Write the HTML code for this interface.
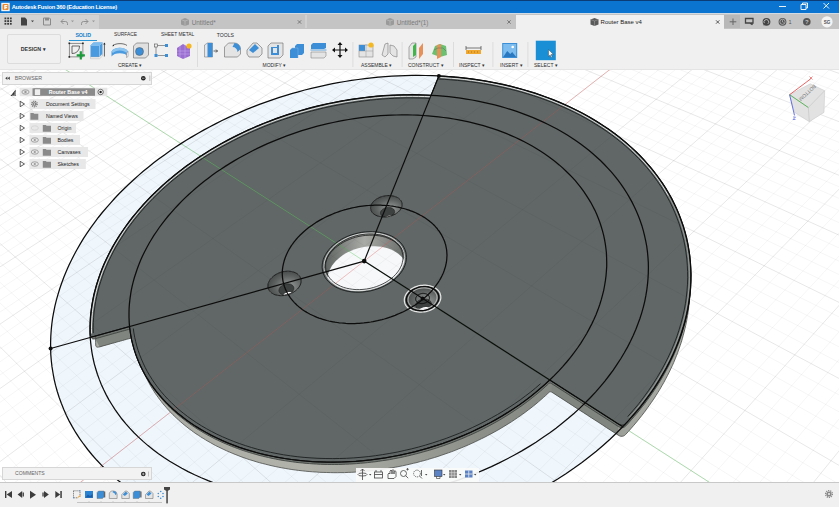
<!DOCTYPE html>
<html><head><meta charset="utf-8">
<style>
*{margin:0;padding:0;box-sizing:border-box}
html,body{width:839px;height:507px;overflow:hidden;background:#f0f0f0;font-family:"Liberation Sans",sans-serif}
.a{position:absolute}
#title{left:0;top:0;width:839px;height:13px;background:#0a74d0;border-top:1.5px solid #0b3c78}
#title span{position:absolute;left:11.7px;top:3.2px;font-size:5.8px;color:#fff;font-weight:bold;letter-spacing:-0.25px}
#tabs{left:0;top:13px;width:839px;height:16px;background:#c4c4c4;border-top:1.5px solid #d2dbe4}
.lbl{font-size:5px;color:#2e2e2e;white-space:nowrap}
.tb{font-size:5.8px;color:#333;white-space:nowrap}
svg{position:absolute;left:0;top:0}
</style></head><body>
<div id="title" class="a"><svg width="10" height="10" style="left:1px;top:1px"><rect x="0.3" y="0.8" width="8.4" height="8.4" fill="#f4f4f4"/><rect x="1.5" y="2" width="6" height="6" rx="1" fill="#e8882e"/><path d="M3.3 3h3v1.2H4.5v0.9h1.6v1.1H4.5V7.2H3.3z" fill="#fff"/></svg><span>Autodesk Fusion 360 (Education License)</span>
</div>
<div id="tabs" class="a"></div>
<div class="a" style="left:0;top:14.5px;width:99px;height:14px;background:#d2d2d2"></div>
<!-- title buttons -->
<svg width="60" height="13" style="left:775px;top:0"><path d="M4 6.5h7" stroke="#fff" stroke-width="0.9"/><path d="M26 4.5h5v5h-5z M27.5 4.5v-1.5h5v5h-1.5" fill="none" stroke="#fff" stroke-width="0.9"/><path d="M48.5 3l5.5 5.5M54 3l-5.5 5.5" stroke="#fff" stroke-width="0.9"/></svg>
<!-- quick access -->
<svg width="99" height="14" style="left:0;top:14.5px">
<g fill="#3a3a3a"><rect x="4.5" y="2.5" width="1.8" height="1.8"/><rect x="7.2" y="2.5" width="1.8" height="1.8"/><rect x="9.9" y="2.5" width="1.8" height="1.8"/><rect x="4.5" y="5.2" width="1.8" height="1.8"/><rect x="7.2" y="5.2" width="1.8" height="1.8"/><rect x="9.9" y="5.2" width="1.8" height="1.8"/><rect x="4.5" y="7.9" width="1.8" height="1.8"/><rect x="7.2" y="7.9" width="1.8" height="1.8"/><rect x="9.9" y="7.9" width="1.8" height="1.8"/></g>
<path d="M21 2.5h4l2 2v6h-6z" fill="#444"/><path d="M31 5.5h3l-1.5 1.8z" fill="#444"/>
<path d="M43.5 3h6l1 1v6h-7z" fill="none" stroke="#8a8a8a" stroke-width="1"/><rect x="45" y="3" width="4" height="2.5" fill="#8a8a8a"/>
<path d="M61 6.5l2.5-2.5M61 6.5l2.5 2.5M61 6.5h4.5a2 2 0 0 1 2 2v1.5" fill="none" stroke="#8a8a8a" stroke-width="0.9"/><path d="M71 5.5h3l-1.5 1.8z" fill="#999"/>
<path d="M88 6.5l-2.5-2.5M88 6.5l-2.5 2.5M88 6.5h-4.5a2 2 0 0 0-2 2v1.5" fill="none" stroke="#8a8a8a" stroke-width="0.9"/><path d="M92 5.5h3l-1.5 1.8z" fill="#999"/>
</svg>
<!-- tabs -->
<div class="a" style="left:305px;top:14.8px;width:2px;height:13.7px;background:#d0d0d0"></div>
<div class="a" style="left:516px;top:14.8px;width:207.5px;height:14.2px;background:#f0f0f0"></div>
<div class="a" style="left:723.5px;top:14.8px;width:16.5px;height:13.7px;background:#b8b8b8"></div>
<svg width="839" height="16" style="left:0;top:14px">
<g transform="translate(181,3.5)"><path d="M0 2l4-1.5 4 1.5v5l-4 1.6-4-1.6z" fill="#9a9a9a"/><path d="M0 2l4 1.5 4-1.5M4 3.5v5" stroke="#c4c4c4" stroke-width="0.6" fill="none"/></g>
<g transform="translate(386,3.5)"><path d="M0 2l4-1.5 4 1.5v5l-4 1.6-4-1.6z" fill="#9a9a9a"/><path d="M0 2l4 1.5 4-1.5M4 3.5v5" stroke="#c4c4c4" stroke-width="0.6" fill="none"/></g>
<g transform="translate(590.5,3.5)"><path d="M0 2l4-1.5 4 1.5v5l-4 1.6-4-1.6z" fill="#5a5a5a"/><path d="M0 2l4 1.5 4-1.5M4 3.5v5" stroke="#9a9a9a" stroke-width="0.6" fill="none"/></g>
<path d="M297.8 6.3l3.4 3.4M301.2 6.3l-3.4 3.4" stroke="#666" stroke-width="0.8"/>
<path d="M507.3 6.3l3.4 3.4M510.7 6.3l-3.4 3.4" stroke="#666" stroke-width="0.8"/>
<path d="M716 6.3l3.4 3.4M719.4 6.3l-3.4 3.4" stroke="#333" stroke-width="0.8"/>
<path d="M733 4.5v6.5M729.7 7.8h6.6" stroke="#666" stroke-width="1"/>
<path d="M745.5 4.5h7.5v4.5h-1.6l1 1.6-2.6-1.6h-4.3z" fill="none" stroke="#444" stroke-width="1.3"/>
<circle cx="766.5" cy="7.8" r="3.9" fill="#444"/><path d="M764.3 9.2a2.4 2.4 0 1 1 3.6 0.6" fill="none" stroke="#c4c4c4" stroke-width="0.9"/><path d="M763.2 11.6l2.2-3 1.4 1.6z" fill="#444"/>
<circle cx="782.5" cy="7.8" r="3.9" fill="#555"/><circle cx="782.5" cy="7.8" r="2.6" fill="none" stroke="#c4c4c4" stroke-width="0.7"/><path d="M782.5 6.2v1.8l1.1 0.8" fill="none" stroke="#c4c4c4" stroke-width="0.7"/>
<circle cx="806.8" cy="7.8" r="3.8" fill="#555"/><text x="806.8" y="10.2" font-size="6" font-weight="bold" fill="#c4c4c4" text-anchor="middle" font-family="Liberation Sans">?</text>
<circle cx="827" cy="7.8" r="5.6" fill="#f4f4f4"/><text x="827" y="9.7" font-size="4.6" fill="#555" text-anchor="middle" font-family="Liberation Sans" font-weight="bold">SG</text>
<text x="788.5" y="10" font-size="5.5" fill="#555" font-family="Liberation Sans">1</text>
</svg>
<div class="a" style="left:191.7px;top:19px;font-size:6.35px;color:#7a7a7a">Untitled*</div>
<div class="a" style="left:396.7px;top:19px;font-size:6.35px;color:#7a7a7a">Untitled*(1)</div>
<div class="a" style="left:600.6px;top:19.2px;font-size:6px;color:#222">Router Base v4</div>
<!-- toolbar -->
<div class="a" style="left:6.5px;top:34px;width:54px;height:30px;border:1px solid #dcdcdc;border-radius:2px;background:#f0f0f0"></div>
<div class="a" style="left:20.8px;top:46.3px;font-size:5.3px;font-weight:bold;color:#333">DESIGN ▾</div>
<div class="a lbl" style="left:75.5px;top:31.8px;color:#1480c8;font-size:5.33px;font-weight:bold;letter-spacing:-0.2px">SOLID</div>
<div class="a" style="left:69px;top:39.8px;width:28px;height:1px;background:#2a96d8"></div>
<div class="a lbl" style="left:114px;top:31.8px;font-size:4.9px">SURFACE</div>
<div class="a lbl" style="left:161px;top:31.8px;font-size:4.85px">SHEET METAL</div>
<div class="a lbl" style="left:216.7px;top:31.8px;font-size:5.1px">TOOLS</div>
<div class="a lbl" style="left:118px;top:62px">CREATE ▾</div>
<div class="a lbl" style="left:262.5px;top:62px">MODIFY ▾</div>
<div class="a lbl" style="left:361px;top:62px">ASSEMBLE ▾</div>
<div class="a lbl" style="left:408px;top:62px">CONSTRUCT ▾</div>
<div class="a lbl" style="left:459px;top:62px">INSPECT ▾</div>
<div class="a lbl" style="left:500px;top:62px">INSERT ▾</div>
<div class="a lbl" style="left:534px;top:62px">SELECT ▾</div>
<svg width="839" height="40" style="left:0;top:29px">
<g fill="#d8d8d8"><rect x="197" y="13" width="0.8" height="25"/><rect x="352.5" y="13" width="0.8" height="25"/><rect x="401.7" y="13" width="0.8" height="25"/><rect x="453" y="13" width="0.8" height="25"/><rect x="492.5" y="13" width="0.8" height="25"/><rect x="527.5" y="13" width="0.8" height="25"/></g>
<!-- sketch -->
<g transform="translate(69,14)"><rect x="0.3" y="0.3" width="13.6" height="13.6" fill="none" stroke="#666" stroke-width="0.7"/><g fill="#222"><rect x="-0.5" y="-0.5" width="1.6" height="1.6"/><rect x="13.1" y="-0.5" width="1.6" height="1.6"/><rect x="-0.5" y="13.1" width="1.6" height="1.6"/></g><path d="M3 3h7.5a7 7 0 0 1-7.5 7.5z" fill="none" stroke="#444" stroke-width="0.8"/><path d="M11.8 8.3v8.2M7.7 12.4h8.2" stroke="#1a9b3c" stroke-width="2.2"/></g>
<!-- extrude -->
<g transform="translate(90,13)"><path d="M0.5 3.5l3-3h9v11.5l-3 3H0.5z" fill="#4a9ae0"/><path d="M0.5 3.5h9v11.5M9.5 3.5l3-3" fill="none" stroke="#a8d0f2" stroke-width="0.7"/><path d="M0.5 3.5l3-3h9l-3 3z" fill="#7cbcee"/><path d="M0.5 15h9l3-3v2l-3 2.7H0.5z" fill="#f4f4f4" stroke="#aaa" stroke-width="0.4"/><path d="M14.4 1.5v13" stroke="#222" stroke-width="0.7"/><path d="M14.4 0.5l-1.2 2h2.4z" fill="#222"/></g>
<!-- revolve -->
<g transform="translate(111,13)"><path d="M0.5 9.5C3 4.5 14.5 4.5 17 9.5v5C14.5 10 3 10 0.5 14.5z" fill="#4a9ae0"/><path d="M0.5 9.5C3 4.5 14.5 4.5 17 9.5l-1.5 1.5C13 7.5 4.5 7.5 2 11z" fill="#8cc4f0"/><path d="M15.5 11l1.5-1.5v5l-1.5 1z" fill="#fff" stroke="#555" stroke-width="0.4"/><path d="M2 3.5c3-2.5 11-2.5 14 0" fill="none" stroke="#333" stroke-width="0.7"/><path d="M1.2 4.2l2-0.2-0.8-1.6z" fill="#222"/></g>
<!-- hole -->
<g transform="translate(132.5,13)"><path d="M1 4l3-3h12v12l-3 3H1z" fill="#e0e0e0" stroke="#666" stroke-width="0.6"/><circle cx="7" cy="9.5" r="4" fill="#3c8fd6" stroke="#555" stroke-width="0.5"/></g>
<!-- pattern -->
<g transform="translate(154,13)"><rect x="0.5" y="2" width="3" height="3" fill="none" stroke="#555" stroke-width="0.6"/><rect x="11" y="2" width="3" height="3" fill="#3c8fd6"/><rect x="0.5" y="12" width="3" height="3" fill="#3c8fd6"/><rect x="11" y="12" width="3" height="3" fill="#3c8fd6"/><path d="M3.5 3.5h7.5M2 5v7M3.5 13.5h7.5" stroke="#555" stroke-width="0.6"/></g>
<!-- form -->
<g transform="translate(176,13)"><path d="M1 6l6-4 7 4v8l-7 3-6-3z" fill="#9a6ed0"/><path d="M4 4v11M9 3v13M1 9h13M1 12h13" stroke="#c9aef0" stroke-width="0.5"/><circle cx="13" cy="4" r="2.6" fill="#f5b820"/></g>
<!-- press pull -->
<g transform="translate(202.5,13)"><path d="M2 3l3-2h5v14H2z" fill="#e6e6e6" stroke="#666" stroke-width="0.5"/><path d="M5 1h5v14H5z" fill="#3c8fd6"/><path d="M11 9h4M13.5 7.5l1.5 1.5-1.5 1.5" stroke="#222" stroke-width="0.7" fill="none"/></g>
<!-- fillet -->
<g transform="translate(223.5,13)"><path d="M1 5l4-4h6a6 6 0 0 1 6 6v5l-3 3H1z" fill="#e4e4e4" stroke="#666" stroke-width="0.6"/><path d="M11 1a6 6 0 0 1 6 6l-3 3a5 5 0 0 0-5-5z" fill="#3c8fd6"/></g>
<!-- chamfer -->
<g transform="translate(246,13)"><path d="M1 8l6-7h4l5 5v6l-3 3H3l-2-3z" fill="#e4e4e4" stroke="#666" stroke-width="0.6"/><path d="M3 8l6-6 4 4-6 5z" fill="#3c8fd6"/></g>
<!-- shell -->
<g transform="translate(267,13)"><path d="M1 4l3-3h12v12l-3 3H1z" fill="#e4e4e4" stroke="#666" stroke-width="0.6"/><path d="M4 5h6v-2h2v10H4z" fill="#3c8fd6"/><rect x="6" y="6" width="4" height="5" fill="#e4e4e4"/></g>
<!-- combine -->
<g transform="translate(289,13)"><path d="M1 8l2-2h6v10H1z" fill="#3c8fd6"/><path d="M6 4l2-2h7v9l-2 2H6z" fill="#3c8fd6"/><path d="M3 6h6v10" stroke="#7cb6ea" stroke-width="0.5" fill="none"/></g>
<!-- split -->
<g transform="translate(310,13)"><path d="M1 3l2-2h13v5l-2 1H1z" fill="#3c8fd6"/><path d="M0.5 8h16" stroke="#3c8fd6" stroke-width="0.8"/><path d="M1 10h15v4l-2 2H1z" fill="#e4e4e4" stroke="#777" stroke-width="0.5"/></g>
<!-- move -->
<g transform="translate(332,13)"><path d="M8 1v14M1 8h14" stroke="#111" stroke-width="1.2"/><path d="M8 0l-2.5 3h5zM8 16l-2.5-3h5zM0 8l3-2.5v5zM16 8l-3-2.5v5z" fill="#111"/></g>
<!-- assemble new comp -->
<g transform="translate(358,13)"><rect x="1" y="3" width="14" height="12" fill="#e4e4e4" stroke="#777" stroke-width="0.5"/><path d="M1 3h6v6H1z" fill="#3c8fd6"/><path d="M8 2v13M1 9h14" stroke="#999" stroke-width="0.5"/><circle cx="13" cy="3" r="2.6" fill="#f5b820"/></g>
<!-- joint -->
<g transform="translate(381,13)"><path d="M1 13l3-11 3-1v11l-3 3z" fill="#e4e4e4" stroke="#777" stroke-width="0.6"/><path d="M9 3l4 1 3 4v7l-4-1-3-3z" fill="#e4e4e4" stroke="#777" stroke-width="0.6"/></g>
<!-- construct plane -->
<g transform="translate(408,13)"><path d="M1 5l3-4h4v14l-3 2H1z" fill="#e6e6e6" stroke="#777" stroke-width="0.6"/><path d="M5 15V4l3-3v12z" fill="#42b44a"/><path d="M11 17V6l4-5v11z" fill="#e8905a"/></g>
<!-- plane along path -->
<g transform="translate(431,13)"><path d="M1 12l3-8 5-2 6 2 1 9-7 2z" fill="#6cc070"/><path d="M6 3l4-1v13l-4 2z" fill="#e8905a"/><path d="M3 8l4-2 5 0 3 3" fill="none" stroke="#555" stroke-width="0.4"/></g>
<!-- measure -->
<g transform="translate(465,13)"><rect x="1" y="8" width="15" height="4" fill="#f0a830"/><path d="M1 6h15M1 4v4M16 4v4" stroke="#444" stroke-width="0.7"/><path d="M3 10h1M6 10h1M9 10h1M12 10h1" stroke="#7a5010" stroke-width="0.6"/></g>
<!-- insert -->
<g transform="translate(501.7,13)"><rect x="0.5" y="1" width="15" height="15" fill="#3a8fd6"/><rect x="1.5" y="2" width="13" height="13" fill="#7cbcee"/><path d="M1.5 15l4-6 3 3 2-2 4 5z" fill="#2a78c0"/><circle cx="11" cy="5" r="1.3" fill="#fff"/></g>
<!-- select -->
<rect x="535.8" y="11.7" width="20" height="19.5" fill="#1a8fd6"/><path d="M548.5 20.5v7l1.6-1.6 1.2 2.5 1-0.5-1.2-2.4h2.3z" fill="#fff" stroke="#333" stroke-width="0.4"/>
</svg>

<svg width="839" height="507" viewBox="0 0 839 507" style="top:0;left:0">
<defs><clipPath id="vp"><rect x="0" y="69.8" width="839" height="412.2"/></clipPath></defs>
<g clip-path="url(#vp)">
<rect x="0" y="69" width="839" height="413" fill="#ffffff"/>
<path d="M564.8 104.6 L559.1 102.1 L553.2 99.7 L547.3 97.5 L541.3 95.3 L535.2 93.2 L529.1 91.3 L522.9 89.5 L516.7 87.8 L510.5 86.2 L504.1 84.7 L497.8 83.3 L491.4 82.1 L484.9 80.9 L478.4 79.9 L471.9 78.9 L465.3 78.1 L458.8 77.4 L452.2 76.8 L445.5 76.3 L438.9 75.9 L432.2 75.6 L425.5 75.5 L418.8 75.4 L412.1 75.4 L405.4 75.6 L398.6 75.8 L391.9 76.2 L385.2 76.6 L378.4 77.2 L371.7 77.8 L364.9 78.6 L358.2 79.5 L351.5 80.4 L344.8 81.5 L338.1 82.7 L331.4 83.9 L324.7 85.3 L318.1 86.8 L311.4 88.3 L304.8 90.0 L298.2 91.8 L291.7 93.6 L285.2 95.6 L278.7 97.7 L272.2 99.8 L265.8 102.1 L259.4 104.4 L253.0 106.9 L246.7 109.4 L240.5 112.1 L234.3 114.8 L228.1 117.6 L222.0 120.5 L215.9 123.6 L209.9 126.7 L204.0 129.9 L198.1 133.2 L192.3 136.6 L186.6 140.0 L180.9 143.6 L175.3 147.3 L169.8 151.0 L164.4 154.9 L159.0 158.8 L153.7 162.8 L148.6 166.9 L143.5 171.1 L138.5 175.4 L133.6 179.7 L128.8 184.2 L124.1 188.7 L119.5 193.3 L115.0 198.0 L110.7 202.8 L106.5 207.6 L102.3 212.5 L98.3 217.5 L94.5 222.6 L90.8 227.7 L87.2 232.9 L83.7 238.2 L80.4 243.6 L77.3 249.0 L74.3 254.5 L71.5 260.0 L68.8 265.6 L66.3 271.2 L63.9 277.0 L61.8 282.7 L59.8 288.5 L58.0 294.4 L56.3 300.3 L54.9 306.2 L53.7 312.2 L52.6 318.2 L51.8 324.2 L51.2 330.2 L50.8 336.3 L50.6 342.4 L50.6 348.5 L50.8 354.6 L51.3 360.7 L52.0 366.9 L53.0 373.0 L54.1 379.1 L55.5 385.2 L57.2 391.2 L59.1 397.3 L61.3 403.3 L63.7 409.3 L66.3 415.2 L69.2 421.1 L72.4 426.9 L75.8 432.7 L79.5 438.4 L83.5 444.0 L87.7 449.5 L92.2 455.0 L96.9 460.3 L101.9 465.6 L107.2 470.7 L112.7 475.8 L118.5 480.7 L124.5 485.5 L130.8 490.1 L137.3 494.6 L144.1 499.0 L151.1 503.2 L158.4 507.2 L165.8 511.1 L173.6 514.8 L181.5 518.3 L189.6 521.6 L198.0 524.7 L206.6 527.6 L215.3 530.3 L224.2 532.9 L233.3 535.1 L242.6 537.2 L252.1 539.1 L261.6 540.7 L271.3 542.1 L281.2 543.2 L291.1 544.1 L301.2 544.8 L311.3 545.2 L321.6 545.4 L331.9 545.3 L342.2 545.0 L352.6 544.4 L363.0 543.6 L373.4 542.6 L383.9 541.3 L394.3 539.7 L404.7 537.9 L415.1 535.9 L425.4 533.6 L435.6 531.1 L445.8 528.3 L455.9 525.3 L465.9 522.1 L475.7 518.7 L485.5 515.1 L495.1 511.2 L504.6 507.2 L513.9 502.9 L523.0 498.5 L532.0 493.9 L540.8 489.1 L549.4 484.1 L557.7 479.0 L565.9 473.7 L573.8 468.3 L581.6 462.7 L589.0 457.0 L596.3 451.2 L603.3 445.2 L610.0 439.2 L616.5 433.0 L622.7 426.8 L628.7 420.4 L634.3 414.0 L639.8 407.6 L644.9 401.0 L649.8 394.4 L654.4 387.8 L658.7 381.1 L662.7 374.4 L666.5 367.7 L670.0 361.0 L673.2 354.2 L676.1 347.5 L678.8 340.7 L681.2 334.0 L683.3 327.3 L685.2 320.6 L686.8 313.9 L688.1 307.3 L689.2 300.7 L690.0 294.2 L690.6 287.7 L690.9 281.2 L691.0 274.9 L690.8 268.5 L690.4 262.3 L689.8 256.1 L688.9 250.0 L687.9 244.0 L686.6 238.0 L685.1 232.2 L683.4 226.4 L681.4 220.7 L679.3 215.1 L677.0 209.6 L674.5 204.2 L671.9 198.9 L669.0 193.7 L666.0 188.6 L662.8 183.6 L659.4 178.8 L655.9 174.0 L652.3 169.3 L648.4 164.8 L644.5 160.3 L640.4 156.0 L636.1 151.7 L631.7 147.6 L627.2 143.6 L622.6 139.8 L617.9 136.0 L613.0 132.3 L608.1 128.8 L603.0 125.4 L597.8 122.1 L592.5 118.9 L587.2 115.8 L581.7 112.8 L576.2 110.0 L570.5 107.2 L564.8 104.6 Z" fill="#eff6fc"/>
<path d="M424.1 -6194.0 L-1109.2 370.3 M850.7 -6463.0 L2326.9 52.8 M366.4 -6373.6 L-1091.8 362.4 M932.8 -6741.1 L2297.1 47.3 M304.4 -6566.3 L-1074.6 354.6 M1022.9 -7046.6 L2267.7 41.8 M237.7 -6773.5 L-1057.6 346.9 M1122.4 -7383.8 L2239.0 36.5 M88.1 -7238.5 L-1024.1 331.7 M1356.0 -8175.4 L2182.9 26.1 M3.8 -7500.7 L-1007.6 324.3 M1494.3 -8644.1 L2155.7 21.0 M-88.1 -7786.2 L-991.3 316.9 M1650.7 -9174.2 L2128.9 16.0 M-188.4 -8098.2 L-975.2 309.6 M1829.0 -9778.5 L2102.6 11.1 M-420.0 -8818.0 L-943.4 295.2 M2272.8 -11282.6 L2051.3 1.6 M-554.6 -9236.2 L-927.8 288.1 M2553.7 -12234.7 L2026.3 -3.1 M-704.5 -9702.2 L-912.4 281.1 M2889.3 -13372.0 L2001.7 -7.6 M-872.5 -10224.5 L-897.0 274.2 M3297.2 -14754.6 L1977.6 -12.1 M-1278.0 -11485.0 L-866.9 260.5 M4449.5 -18659.7 L1930.4 -20.9 M-1525.8 -12255.0 L-852.0 253.8 M5300.9 -21545.5 L1907.4 -25.1 M-1813.1 -13148.0 L-837.4 247.1 M6475.1 -25525.0 L1884.8 -29.4 M-2150.2 -14196.0 L-822.8 240.5 M8198.4 -31365.4 L1862.6 -33.5 M-3036.9 -16952.2 L-794.1 227.6 M16186.1 -58436.7 L1819.1 -41.6 M-3636.3 -18815.3 L-780.0 221.2 M29563.2 -103773.5 L1797.9 -45.5 M-4395.0 -21173.6 L-766.0 214.8 M139560.9 -476571.4 L1777.0 -49.4 M-5386.3 -24254.9 L-752.2 208.5 M-54680.4 181739.8 L1756.4 -53.2 M-8683.6 -34503.8 L-724.9 196.2 M-15177.4 47858.7 L1716.2 -60.7 M-11735.6 -43990.6 L-711.4 190.1 M-11341.3 34857.5 L1696.6 -64.3 M-17206.0 -60994.1 L-698.1 184.1 M-9129.6 27361.7 L1677.2 -67.9 M-29854.4 -100309.6 L-684.9 178.1 M-7690.8 22485.3 L1658.1 -71.5 M104338.4 316805.6 L-658.9 166.3 M-5931.0 16521.0 L1620.8 -78.4 M35044.6 101417.9 L-646.1 160.5 M-5353.7 14564.5 L1602.6 -81.8 M21727.0 60022.2 L-633.4 154.7 M-4895.1 13010.4 L1584.6 -85.2 M16072.3 42445.7 L-620.8 149.0 M-4522.1 11746.2 L1566.9 -88.5 M10959.0 26551.6 L-596.0 137.8 M-3951.9 9813.9 L1532.2 -94.9 M9586.7 22286.2 L-583.7 132.2 M-3729.2 9059.0 L1515.2 -98.1 M8581.5 19161.8 L-571.6 126.8 M-3536.7 8406.6 L1498.4 -101.2 M7813.6 16774.7 L-559.6 121.3 M-3368.7 7837.2 L1481.9 -104.2 M6717.5 13367.7 L-535.9 110.6 M-3089.6 6891.2 L1449.6 -110.3 M6312.7 12109.5 L-524.2 105.3 M-2972.4 6494.0 L1433.7 -113.2 M5972.8 11053.1 L-512.6 100.0 M-2867.0 6137.0 L1418.1 -116.1 M5683.4 10153.4 L-501.1 94.8 M-2771.9 5814.5 L1402.6 -119.0 M5216.7 8702.8 L-478.4 84.5 M-2606.7 5254.7 L1372.4 -124.6 M5025.9 8109.6 L-467.2 79.5 M-2534.6 5010.2 L1357.5 -127.4 M4856.8 7584.3 L-456.1 74.4 M-2468.2 4785.4 L1342.9 -130.1 M4706.1 7115.8 L-445.1 69.5 M-2407.1 4578.2 L1328.5 -132.8 M4448.9 6316.2 L-423.4 59.6 M-2298.0 4208.5 L1300.1 -138.0 M4338.2 5972.2 L-412.7 54.8 M-2249.2 4043.0 L1286.2 -140.6 M4237.4 5658.9 L-402.1 50.0 M-2203.6 3888.6 L1272.5 -143.2 M4145.2 5372.2 L-391.6 45.2 M-2161.0 3744.2 L1258.9 -145.7 M3982.4 4866.4 L-370.8 35.8 M-2083.7 3482.0 L1232.3 -150.6 M3910.3 4642.1 L-360.5 31.1 M-2048.4 3362.6 L1219.3 -153.1 M3843.4 4434.2 L-350.3 26.5 M-2015.2 3250.0 L1206.4 -155.5 M3781.2 4240.9 L-340.2 21.9 M-1983.8 3143.7 L1193.6 -157.8 M3669.1 3892.3 L-320.3 12.9 M-1926.1 2948.1 L1168.6 -162.5 M3618.3 3734.6 L-310.4 8.5 M-1899.5 2857.9 L1156.3 -164.8 M3570.7 3586.6 L-300.7 4.0 M-1874.2 2772.2 L1144.1 -167.0 M3526.0 3447.5 L-291.0 -0.4 M-1850.2 2690.7 L1132.1 -169.3 M3444.0 3192.8 L-271.9 -9.0 M-1805.5 2539.2 L1108.6 -173.6 M3406.4 3075.9 L-262.4 -13.3 M-1784.6 2468.6 L1097.0 -175.8 M3370.8 2965.2 L-253.0 -17.6 M-1764.8 2401.2 L1085.5 -177.9 M3337.1 2860.3 L-243.7 -21.8 M-1745.7 2336.7 L1074.2 -180.0 M3274.6 2666.1 L-225.3 -30.1 M-1710.1 2215.9 L1051.9 -184.2 M3245.6 2576.0 L-216.3 -34.2 M-1693.4 2159.2 L1041.0 -186.2 M3218.0 2490.1 L-207.2 -38.3 M-1677.3 2104.8 L1030.2 -188.2 M3191.6 2408.2 L-198.3 -42.3 M-1661.9 2052.6 L1019.5 -190.2 M3142.4 2255.2 L-180.6 -50.3 M-1632.8 1954.0 L998.4 -194.1 M3119.4 2183.6 L-171.9 -54.3 M-1619.1 1907.5 L988.0 -196.0 M3097.3 2115.1 L-163.2 -58.2 M-1605.8 1862.6 L977.8 -197.9 M3076.2 2049.4 L-154.6 -62.1 M-1593.1 1819.4 L967.7 -199.8 M3036.4 1925.7 L-137.6 -69.8 M-1568.9 1737.4 L947.7 -203.5 M3017.7 1867.5 L-129.2 -73.6 M-1557.4 1698.5 L937.9 -205.4 M2999.7 1811.5 L-120.9 -77.4 M-1546.3 1661.0 L928.2 -207.2 M2982.3 1757.6 L-112.6 -81.2 M-1535.6 1624.6 L918.6 -208.9 M2949.5 1655.7 L-96.2 -88.6 M-1515.2 1555.4 L899.7 -212.5 M2934.0 1607.4 L-88.2 -92.2 M-1505.5 1522.4 L890.4 -214.2 M2919.0 1560.8 L-80.1 -95.9 M-1496.0 1490.5 L881.2 -215.9 M2904.5 1515.8 L-72.1 -99.5 M-1486.9 1459.5 L872.1 -217.6 M2877.0 1430.2 L-56.4 -106.6 M-1469.4 1400.3 L854.1 -220.9 M2863.9 1389.5 L-48.6 -110.2 M-1461.1 1371.9 L845.3 -222.6 M2851.2 1350.2 L-40.8 -113.7 M-1452.9 1344.4 L836.6 -224.2 M2839.0 1312.0 L-33.2 -117.1 M-1445.1 1317.7 L827.9 -225.8 M2815.5 1239.2 L-18.0 -124.0 M-1429.9 1266.4 L810.8 -229.0 M2804.4 1204.5 L-10.4 -127.4 M-1422.7 1241.8 L802.4 -230.5 M2793.5 1170.8 L-3.0 -130.8 M-1415.6 1217.9 L794.1 -232.1 M2783.0 1138.0 L4.4 -134.2 M-1408.7 1194.6 L785.9 -233.6 M2762.8 1075.3 L19.1 -140.8 M-1395.5 1149.8 L769.6 -236.6 M2753.2 1045.3 L26.4 -144.1 M-1389.2 1128.3 L761.6 -238.1 M2743.8 1016.1 L33.6 -147.4 M-1383.0 1107.3 L753.7 -239.6 M2734.6 987.7 L40.7 -150.6 M-1376.9 1086.8 L745.8 -241.1 M2717.1 933.2 L54.9 -157.0 M-1365.3 1047.3 L730.3 -243.9 M2708.6 907.0 L61.9 -160.2 M-1359.7 1028.3 L722.7 -245.4 M2700.4 881.4 L68.9 -163.4 M-1354.2 1009.7 L715.1 -246.8 M2692.4 856.5 L75.8 -166.5 M-1348.8 991.6 L707.6 -248.2 M2677.0 808.6 L89.4 -172.7 M-1338.5 956.5 L692.8 -250.9 M2669.6 785.6 L96.2 -175.7 M-1333.5 939.6 L685.6 -252.3 M2662.4 763.1 L102.9 -178.8 M-1328.6 923.0 L678.3 -253.6 M2655.3 741.1 L109.6 -181.8 M-1323.8 906.8 L671.2 -254.9 M2641.6 698.7 L122.8 -187.8 M-1314.6 875.5 L657.1 -257.6 M2635.1 678.2 L129.4 -190.8 M-1310.1 860.3 L650.1 -258.9 M2628.6 658.2 L135.9 -193.7 M-1305.7 845.5 L643.2 -260.1 M2622.3 638.7 L142.3 -196.6 M-1301.4 830.9 L636.4 -261.4 M2610.2 600.9 L155.1 -202.4 M-1293.1 802.8 L622.9 -263.9 M2604.3 582.6 L161.4 -205.3 M-1289.1 789.1 L616.2 -265.2 M2598.5 564.8 L167.7 -208.1 M-1285.1 775.7 L609.6 -266.4 M2592.9 547.3 L174.0 -211.0 M-1281.3 762.6 L603.1 -267.6 M2582.0 513.4 L186.3 -216.6 M-1273.7 737.1 L590.1 -270.0 M2576.7 496.9 L192.5 -219.3 M-1270.1 724.7 L583.8 -271.2 M2571.6 480.9 L198.5 -222.1 M-1266.5 712.6 L577.4 -272.4 M2566.5 465.1 L204.6 -224.8 M-1263.0 700.7 L571.2 -273.5 M2556.7 434.5 L216.6 -230.3 M-1256.2 677.5 L558.8 -275.8 M2551.9 419.7 L222.5 -232.9 M-1252.8 666.3 L552.7 -277.0 M2547.2 405.1 L228.4 -235.6 M-1249.6 655.2 L546.6 -278.1 M2542.6 390.9 L234.2 -238.3 M-1246.4 644.4 L540.6 -279.2 M2533.7 363.2 L245.8 -243.5 M-1240.2 623.3 L528.7 -281.4 M2529.4 349.7 L251.6 -246.1 M-1237.1 613.0 L522.9 -282.5 M2525.1 336.5 L257.3 -248.7 M-1234.1 602.9 L517.1 -283.6 M2520.9 323.5 L263.0 -251.3 M-1231.2 593.0 L511.3 -284.7 M2512.8 298.3 L274.2 -256.4 M-1225.5 573.6 L499.9 -286.8 M2508.9 286.0 L279.8 -258.9 M-1222.7 564.2 L494.3 -287.8 M2505.0 273.9 L285.3 -261.4 M-1220.0 554.9 L488.7 -288.9 M2501.2 262.1 L290.8 -263.9 M-1217.3 545.8 L483.1 -289.9 M2493.7 239.0 L301.7 -268.8 M-1212.0 528.0 L472.2 -291.9 M2490.1 227.7 L307.1 -271.3 M-1209.5 519.3 L466.8 -292.9 M2486.6 216.7 L312.5 -273.7 M-1207.0 510.8 L461.4 -293.9 M2483.1 205.8 L317.8 -276.1 M-1204.5 502.4 L456.1 -294.9 M2476.3 184.6 L328.4 -280.9 M-1199.6 485.9 L445.6 -296.9 M2472.9 174.3 L333.6 -283.3 M-1197.3 477.9 L440.4 -297.8 M2469.7 164.1 L338.8 -285.6 M-1194.9 470.0 L435.2 -298.8 M2466.4 154.1 L344.0 -288.0 M-1192.6 462.3 L430.1 -299.7 M2460.2 134.6 L354.2 -292.6 M-1188.2 447.1 L420.0 -301.6 M2457.1 125.1 L359.3 -294.9 M-1186.0 439.6 L415.0 -302.6 M2454.1 115.7 L364.4 -297.2 M-1183.8 432.3 L410.0 -303.5 M2451.1 106.4 L369.4 -299.5 M-1181.7 425.1 L405.1 -304.4" stroke="#000" stroke-opacity="0.06" stroke-width="0.7" fill="none"/>
<path d="M478.1 -6026.2 L-1126.8 378.2 M775.7 -6208.8 L2357.3 58.5 M165.8 -6996.9 L-1040.7 339.3 M1232.8 -7758.0 L2210.7 31.2 M-298.6 -8440.5 L-959.2 302.3 M2034.2 -10473.9 L2076.7 6.3 M-1062.2 -10814.2 L-881.9 267.3 M3803.8 -16471.2 L1953.8 -16.5 M-2551.5 -15443.2 L-808.4 234.0 M10973.5 -40770.4 L1840.7 -37.6 M-6736.5 -28451.7 L-738.5 202.3 M-23466.2 75950.4 L1736.2 -57.0 M-90763.8 -289636.3 L-671.9 172.2 M-6680.0 19059.6 L1639.3 -75.0 M12944.4 32723.1 L-608.3 143.4 M-4212.7 10697.6 L1549.4 -91.7 M7207.7 14891.4 L-547.7 115.9 M-3220.8 7335.9 L1465.6 -107.3 M5433.9 9378.0 L-489.7 89.7 M-2685.5 5521.7 L1387.4 -121.8 M4570.9 6695.5 L-434.2 64.5 M-2350.5 4386.4 L1314.2 -135.4 M4060.5 5108.9 L-381.1 40.5 M-2121.1 3609.0 L1245.5 -148.2 M3723.2 4060.7 L-330.2 17.4 M-1954.2 3043.3 L1181.0 -160.2 M3483.8 3316.4 L-281.4 -4.7 M-1827.3 2613.1 L1120.3 -171.5 M3305.0 2760.7 L-234.5 -25.9 M-1727.5 2275.0 L1063.0 -182.1 M3166.5 2330.0 L-189.4 -46.4 M-1647.1 2002.3 L1008.9 -192.2 M3055.9 1986.3 L-146.1 -66.0 M-1580.8 1777.7 L957.7 -201.7 M2965.6 1705.7 L-104.4 -84.9 M-1525.2 1589.5 L909.1 -210.7 M2890.5 1472.3 L-64.2 -103.1 M-1478.0 1429.4 L863.1 -219.3 M2827.1 1275.1 L-25.5 -120.6 M-1437.4 1291.7 L819.3 -227.4 M2772.8 1106.2 L11.8 -137.5 M-1402.0 1171.9 L777.7 -235.1 M2725.7 960.1 L47.8 -153.8 M-1371.0 1066.8 L738.0 -242.5 M2684.6 832.3 L82.6 -169.6 M-1343.6 973.8 L700.2 -249.5 M2648.4 719.7 L116.2 -184.8 M-1319.1 891.0 L664.1 -256.3 M2616.2 619.6 L148.7 -199.5 M-1297.2 816.7 L629.6 -262.7 M2587.4 530.1 L180.2 -213.8 M-1277.5 749.7 L596.6 -268.8 M2561.5 449.7 L210.6 -227.6 M-1259.6 689.0 L564.9 -274.7 M2538.1 376.9 L240.0 -240.9 M-1243.2 633.7 L534.6 -280.3 M2516.8 310.8 L268.6 -253.8 M-1228.3 583.2 L505.6 -285.7 M2497.4 250.4 L296.3 -266.4 M-1214.6 536.8 L477.7 -290.9 M2479.6 195.1 L323.1 -278.5 M-1202.0 494.1 L450.8 -295.9 M2463.3 144.3 L349.1 -290.3 M-1190.4 454.6 L425.0 -300.7 M2448.2 97.3 L374.4 -301.8 M-1179.6 418.0 L400.2 -305.3" stroke="#000" stroke-opacity="0.13" stroke-width="0.75" fill="none"/>
<line x1="-1580.8" y1="1777.7" x2="957.7" y2="-201.7" stroke="#e05050" stroke-opacity="0.5" stroke-width="0.7"/>
<line x1="3055.9" y1="1986.3" x2="-146.1" y2="-66.0" stroke="#40c040" stroke-opacity="0.5" stroke-width="0.7"/>
<linearGradient id="wg" gradientUnits="userSpaceOnUse" x1="80" y1="0" x2="700" y2="0"><stop offset="0" stop-color="#a6a9a1"/><stop offset="0.36" stop-color="#b1b3ab"/><stop offset="0.64" stop-color="#8c9089"/><stop offset="0.78" stop-color="#858983"/><stop offset="0.9" stop-color="#a3a69f"/><stop offset="1" stop-color="#a8aba3"/></linearGradient>
<path d="M625.9 423.4 L628.7 420.4 L631.5 417.2 L634.3 414.0 L637.1 410.8 L639.8 407.6 L642.4 404.3 L644.9 401.0 L647.4 397.7 L649.8 394.4 L652.1 391.1 L654.4 387.8 L656.6 384.5 L658.7 381.1 L660.7 377.8 L662.7 374.4 L664.6 371.1 L666.5 367.7 L668.3 364.3 L670.0 361.0 L671.6 357.6 L673.2 354.2 L674.7 350.9 L676.1 347.5 L677.5 344.1 L678.8 340.7 L680.0 337.4 L681.2 334.0 L682.3 330.6 L683.3 327.3 L684.3 323.9 L685.2 320.6 L686.0 317.3 L686.8 313.9 L687.5 310.6 L688.1 307.3 L688.7 304.0 L689.2 300.7 L689.6 297.4 L690.0 294.2 L690.3 290.9 L690.6 287.7 L690.7 284.4 L690.9 281.2 L690.9 278.0 L691.0 274.9 L690.9 271.7 L690.8 268.5 L690.6 265.4 L690.4 262.3 L690.1 259.2 L689.8 256.1 L689.4 253.0 L688.9 250.0 L688.4 247.0 L687.9 244.0 L687.2 241.0 L686.6 238.0 L685.8 235.1 L685.1 232.2 L684.2 229.3 L683.4 226.4 L682.4 223.5 L681.4 220.7 L680.4 217.9 L679.3 215.1 L678.2 212.4 L677.0 209.6 L675.8 206.9 L674.5 204.2 L673.2 201.6 L671.9 198.9 L670.5 196.3 L669.0 193.7 L667.5 191.2 L666.0 188.6 L664.4 186.1 L662.8 183.6 L661.1 181.2 L659.4 178.8 L657.7 176.4 L655.9 174.0 L654.1 171.6 L652.3 169.3 L650.4 167.0 L648.4 164.8 L646.5 162.5 L644.5 160.3 L642.4 158.1 L640.4 156.0 L638.3 153.8 L636.1 151.7 L633.9 149.7 L631.7 147.6 L629.5 145.6 L627.2 143.6 L624.9 141.7 L622.6 139.8 L620.3 137.9 L617.9 136.0 L615.5 134.1 L613.0 132.3 L610.6 130.5 L608.1 128.8 L605.5 127.1 L603.0 125.4 L600.4 123.7 L597.8 122.1 L595.2 120.4 L592.5 118.9 L589.9 117.3 L587.2 115.8 L584.5 114.3 L581.7 112.8 L579.0 111.4 L576.2 110.0 L573.4 108.6 L570.5 107.2 L567.7 105.9 L564.8 104.6 L562.0 103.4 L559.1 102.1 L556.1 100.9 L553.2 99.7 L550.2 98.6 L547.3 97.5 L544.3 96.4 L541.3 95.3 L538.3 94.3 L535.2 93.2 L532.2 92.3 L529.1 91.3 L526.0 90.4 L522.9 89.5 L519.8 88.6 L516.7 87.8 L513.6 87.0 L510.5 86.2 L507.3 85.4 L504.1 84.7 L500.9 84.0 L497.8 83.3 L494.6 82.7 L491.4 82.1 L488.1 81.5 L484.9 80.9 L481.7 80.4 L478.4 79.9 L475.2 79.4 L471.9 78.9 L468.6 78.5 L465.3 78.1 L462.1 77.8 L458.8 77.4 L455.5 77.1 L452.2 76.8 L448.8 76.5 L445.5 76.3 L442.4 76.1 L441.3 76.1 L440.4 76.2 L439.5 76.5 L438.9 76.9 L438.4 77.4 L438.0 78.1 L437.7 78.9 L437.3 79.9 L436.8 80.9 L436.4 82.0 L436.0 83.0 L435.6 84.0 L435.2 85.0 L434.8 86.0 L434.4 87.0 L434.0 88.1 L433.6 89.1 L433.1 90.1 L432.7 91.2 L432.3 92.2 L431.9 93.2 L431.5 94.3 L431.4 94.3 L431.3 94.6 L431.1 94.9 L430.8 95.0 L430.4 95.2 L430.0 95.2 L429.5 95.2 L428.1 95.1 L425.1 95.0 L422.1 94.9 L419.1 94.8 L416.1 94.8 L413.1 94.7 L410.1 94.7 L407.1 94.8 L404.1 94.8 L401.1 94.9 L398.1 94.9 L395.1 95.1 L392.0 95.2 L389.0 95.4 L386.0 95.5 L383.0 95.7 L380.0 96.0 L376.9 96.2 L373.9 96.5 L370.9 96.8 L367.9 97.1 L364.9 97.5 L361.9 97.9 L358.8 98.3 L355.8 98.7 L352.8 99.1 L349.8 99.6 L346.8 100.1 L343.8 100.6 L340.8 101.1 L337.8 101.7 L334.8 102.3 L331.8 102.9 L328.8 103.5 L325.8 104.1 L322.8 104.8 L319.9 105.5 L316.9 106.2 L313.9 107.0 L311.0 107.7 L308.0 108.5 L305.1 109.3 L302.1 110.2 L299.2 111.0 L296.3 111.9 L293.4 112.8 L290.5 113.7 L287.6 114.6 L284.7 115.6 L281.8 116.6 L278.9 117.6 L276.0 118.6 L273.2 119.7 L270.3 120.8 L267.5 121.9 L264.6 123.0 L261.8 124.1 L259.0 125.3 L256.2 126.5 L253.4 127.7 L250.7 128.9 L247.9 130.1 L245.1 131.4 L242.4 132.7 L239.7 134.0 L237.0 135.4 L234.3 136.7 L231.6 138.1 L228.9 139.5 L226.3 140.9 L223.6 142.3 L221.0 143.8 L218.4 145.3 L215.8 146.8 L213.2 148.3 L210.6 149.8 L208.1 151.4 L205.6 153.0 L203.0 154.6 L200.5 156.2 L198.1 157.8 L195.6 159.5 L193.2 161.2 L190.7 162.9 L188.3 164.6 L185.9 166.3 L183.6 168.1 L181.2 169.9 L178.9 171.7 L176.6 173.5 L174.3 175.3 L172.1 177.2 L169.8 179.1 L167.6 180.9 L165.4 182.9 L163.2 184.8 L161.1 186.7 L159.0 188.7 L156.9 190.7 L154.8 192.7 L152.7 194.7 L150.7 196.7 L148.7 198.8 L146.7 200.9 L144.8 202.9 L142.9 205.0 L141.0 207.2 L139.1 209.3 L137.3 211.5 L135.5 213.6 L133.7 215.8 L131.9 218.0 L130.2 220.2 L128.5 222.5 L126.9 224.7 L125.2 227.0 L123.6 229.3 L122.1 231.5 L120.5 233.9 L119.0 236.2 L117.5 238.5 L116.1 240.9 L114.7 243.2 L113.3 245.6 L112.0 248.0 L110.7 250.4 L109.4 252.8 L108.2 255.2 L107.0 257.7 L105.9 260.1 L104.7 262.6 L103.6 265.1 L102.6 267.5 L101.6 270.0 L100.6 272.5 L99.7 275.1 L98.8 277.6 L98.0 280.1 L97.2 282.7 L96.4 285.2 L95.7 287.8 L95.0 290.3 L94.3 292.9 L93.7 295.5 L93.2 298.1 L92.7 300.7 L92.2 303.3 L91.8 305.9 L91.4 308.5 L91.1 311.1 L90.8 313.7 L90.5 316.4 L90.3 319.0 L90.2 321.6 L90.1 324.3 L90.0 326.9 L90.0 329.5 L90.0 332.2 L90.1 334.7 L90.3 335.5 L90.6 336.1 L91.2 336.5 L91.9 336.7 L92.9 336.6 L94.1 336.4 L94.4 336.3 L96.5 335.7 L98.5 335.1 L100.6 334.6 L102.7 334.0 L104.8 333.4 L106.8 332.8 L108.9 332.3 L111.0 331.7 L113.0 331.1 L115.1 330.5 L117.2 330.0 L119.2 329.4 L121.3 328.8 L123.4 328.2 L125.4 327.7 L127.5 327.1 L127.6 327.0 L128.2 326.9 L128.7 326.9 L129.1 327.0 L129.4 327.2 L129.6 327.5 L129.7 327.9 L129.8 328.7 L130.1 331.0 L130.4 333.2 L130.8 335.4 L131.2 337.7 L131.6 339.9 L132.1 342.1 L132.7 344.3 L133.3 346.5 L133.9 348.7 L134.6 350.9 L135.3 353.1 L136.0 355.3 L136.9 357.5 L137.7 359.6 L138.6 361.8 L139.5 363.9 L140.5 366.1 L141.6 368.2 L142.6 370.3 L143.8 372.4 L144.9 374.5 L146.1 376.6 L147.4 378.7 L148.7 380.7 L150.0 382.8 L151.4 384.8 L152.9 386.8 L154.4 388.8 L155.9 390.8 L157.5 392.8 L159.1 394.7 L160.7 396.7 L162.5 398.6 L164.2 400.5 L166.0 402.4 L167.8 404.2 L169.7 406.0 L171.7 407.9 L173.6 409.7 L175.7 411.4 L177.7 413.2 L179.8 414.9 L182.0 416.6 L184.2 418.3 L186.4 420.0 L188.7 421.6 L191.0 423.2 L193.4 424.8 L195.8 426.4 L198.2 427.9 L200.7 429.4 L203.2 430.9 L205.8 432.3 L208.4 433.7 L211.0 435.1 L213.7 436.5 L216.4 437.8 L219.2 439.1 L221.9 440.4 L224.8 441.6 L227.6 442.8 L230.5 444.0 L233.5 445.1 L236.4 446.2 L239.4 447.3 L242.5 448.3 L245.5 449.3 L248.6 450.3 L251.7 451.2 L254.9 452.1 L258.1 453.0 L261.3 453.8 L264.5 454.6 L267.8 455.3 L271.1 456.0 L274.4 456.7 L277.8 457.3 L281.2 457.9 L284.6 458.5 L288.0 459.0 L291.4 459.5 L294.9 459.9 L298.3 460.3 L301.8 460.7 L305.4 461.0 L308.9 461.3 L312.4 461.6 L316.0 461.8 L319.6 461.9 L323.2 462.0 L326.8 462.1 L330.4 462.2 L334.0 462.2 L337.7 462.1 L341.3 462.0 L345.0 461.9 L348.7 461.7 L352.3 461.5 L356.0 461.3 L359.7 461.0 L363.4 460.7 L367.0 460.3 L370.7 459.9 L374.4 459.4 L378.1 458.9 L381.8 458.4 L385.4 457.8 L389.1 457.2 L392.8 456.5 L396.5 455.8 L400.1 455.1 L403.8 454.3 L407.4 453.5 L411.0 452.7 L414.6 451.8 L418.2 450.8 L421.8 449.9 L425.4 448.9 L429.0 447.8 L432.5 446.7 L436.1 445.6 L439.6 444.5 L443.1 443.3 L446.5 442.0 L450.0 440.8 L453.4 439.5 L456.9 438.1 L460.2 436.8 L463.6 435.4 L466.9 433.9 L470.3 432.5 L473.5 431.0 L476.8 429.4 L480.0 427.9 L483.2 426.3 L486.4 424.6 L489.6 423.0 L492.7 421.3 L495.8 419.6 L498.8 417.8 L501.8 416.1 L504.8 414.3 L507.8 412.4 L510.7 410.6 L513.5 408.7 L516.4 406.8 L519.2 404.9 L522.0 402.9 L524.7 400.9 L527.4 398.9 L530.0 396.9 L532.6 394.9 L535.2 392.8 L537.7 390.7 L540.2 388.6 L542.7 386.5 L545.1 384.3 L547.4 382.2 L548.3 381.3 L548.8 381.0 L549.3 380.7 L549.8 380.6 L550.3 380.6 L550.9 380.8 L551.4 381.1 L553.4 382.4 L557.1 384.7 L560.8 387.1 L564.5 389.5 L568.2 391.9 L572.0 394.3 L575.8 396.7 L579.6 399.1 L583.4 401.6 L587.2 404.0 L591.1 406.5 L595.0 409.0 L598.9 411.5 L602.8 414.0 L606.7 416.5 L610.7 419.1 L614.7 421.6 L618.3 424.0 L619.8 424.7 L621.1 425.2 L622.4 425.2 L623.6 425.0 L624.8 424.3 Z M625.6 434.5 L628.3 431.6 L631.1 428.4 L633.9 425.2 L636.6 422.0 L639.2 418.8 L641.8 415.5 L644.3 412.3 L646.7 409.0 L649.1 405.7 L651.4 402.4 L653.7 399.1 L655.8 395.8 L657.9 392.5 L660.0 389.1 L661.9 385.8 L663.8 382.5 L665.6 379.1 L667.4 375.7 L669.1 372.4 L670.7 369.0 L672.3 365.7 L673.8 362.3 L675.2 358.9 L676.5 355.6 L677.8 352.2 L679.0 348.9 L680.2 345.5 L681.3 342.2 L682.3 338.8 L683.2 335.5 L684.1 332.1 L684.9 328.8 L685.7 325.5 L686.4 322.2 L687.0 318.9 L687.6 315.6 L688.1 312.3 L688.5 309.0 L688.9 305.8 L689.2 302.5 L689.5 299.3 L689.7 296.1 L689.8 292.8 L689.9 289.7 L689.9 286.5 L689.8 283.3 L689.7 280.2 L689.6 277.0 L689.4 273.9 L689.1 270.8 L688.7 267.7 L688.4 264.7 L687.9 261.6 L687.4 258.6 L686.9 255.6 L686.2 252.6 L685.6 249.7 L684.9 246.7 L684.1 243.8 L683.3 240.9 L682.4 238.0 L681.5 235.2 L680.5 232.3 L679.5 229.5 L678.4 226.7 L677.3 224.0 L676.2 221.2 L675.0 218.5 L673.7 215.8 L672.4 213.2 L671.1 210.5 L669.7 207.9 L668.3 205.3 L666.8 202.8 L665.3 200.2 L663.7 197.7 L662.1 195.2 L660.5 192.8 L658.8 190.3 L657.1 187.9 L655.3 185.5 L653.5 183.2 L651.7 180.8 L649.8 178.5 L647.9 176.3 L646.0 174.0 L644.0 171.8 L642.0 169.6 L639.9 167.5 L637.8 165.3 L635.7 163.2 L633.6 161.1 L631.4 159.1 L629.2 157.1 L627.0 155.1 L624.7 153.1 L622.4 151.2 L620.0 149.3 L617.7 147.4 L615.3 145.5 L612.9 143.7 L610.4 141.9 L608.0 140.2 L605.5 138.4 L602.9 136.7 L600.4 135.0 L597.8 133.4 L595.2 131.8 L592.6 130.2 L589.9 128.6 L587.3 127.1 L584.6 125.6 L581.9 124.1 L579.1 122.7 L576.4 121.2 L573.6 119.8 L570.8 118.5 L568.0 117.1 L565.2 115.8 L562.3 114.6 L559.4 113.3 L556.5 112.1 L553.6 110.9 L550.7 109.7 L547.8 108.6 L544.8 107.5 L541.8 106.4 L538.8 105.4 L535.8 104.4 L532.8 103.4 L529.8 102.4 L526.7 101.5 L523.6 100.6 L520.6 99.7 L517.5 98.9 L514.4 98.0 L511.3 97.2 L508.1 96.5 L505.0 95.7 L501.8 95.0 L498.7 94.3 L495.5 93.7 L492.3 93.1 L489.1 92.5 L485.9 91.9 L482.7 91.4 L479.5 90.8 L476.3 90.3 L473.0 89.9 L469.8 89.5 L466.5 89.0 L463.3 88.7 L460.0 88.3 L456.7 88.0 L453.5 87.7 L450.2 87.4 L446.9 87.2 L443.8 87.0 L442.7 87.0 L441.8 87.1 L441.0 87.4 L440.3 87.8 L439.8 88.3 L439.4 88.9 L439.1 89.8 L438.7 90.8 L438.3 91.8 L437.9 92.8 L437.5 93.8 L437.1 94.9 L436.7 95.9 L436.3 96.9 L435.9 97.9 L435.5 99.0 L435.1 100.0 L434.6 101.0 L434.2 102.1 L433.8 103.1 L433.4 104.1 L433.0 105.2 L433.0 105.2 L432.8 105.5 L432.6 105.8 L432.3 105.9 L431.9 106.1 L431.5 106.1 L431.0 106.1 L429.6 106.0 L426.7 105.9 L423.7 105.8 L420.7 105.7 L417.8 105.6 L414.8 105.6 L411.8 105.6 L408.8 105.6 L405.9 105.6 L402.9 105.7 L399.9 105.8 L396.9 105.9 L393.9 106.0 L390.9 106.2 L387.9 106.3 L384.9 106.5 L381.9 106.8 L379.0 107.0 L376.0 107.3 L373.0 107.6 L370.0 107.9 L367.0 108.3 L364.0 108.6 L361.0 109.0 L358.0 109.4 L355.0 109.9 L352.0 110.3 L349.1 110.8 L346.1 111.3 L343.1 111.8 L340.1 112.4 L337.2 113.0 L334.2 113.6 L331.2 114.2 L328.3 114.8 L325.3 115.5 L322.4 116.2 L319.4 116.9 L316.5 117.7 L313.6 118.4 L310.7 119.2 L307.7 120.0 L304.8 120.8 L301.9 121.7 L299.0 122.6 L296.1 123.4 L293.2 124.4 L290.4 125.3 L287.5 126.3 L284.6 127.2 L281.8 128.3 L279.0 129.3 L276.1 130.3 L273.3 131.4 L270.5 132.5 L267.7 133.6 L264.9 134.8 L262.1 135.9 L259.4 137.1 L256.6 138.3 L253.8 139.5 L251.1 140.8 L248.4 142.0 L245.7 143.3 L243.0 144.6 L240.3 146.0 L237.6 147.3 L235.0 148.7 L232.3 150.1 L229.7 151.5 L227.1 152.9 L224.5 154.4 L221.9 155.9 L219.3 157.4 L216.8 158.9 L214.2 160.4 L211.7 162.0 L209.2 163.6 L206.7 165.2 L204.3 166.8 L201.8 168.4 L199.4 170.1 L197.0 171.8 L194.6 173.5 L192.2 175.2 L189.8 176.9 L187.5 178.7 L185.2 180.4 L182.9 182.2 L180.6 184.1 L178.4 185.9 L176.1 187.7 L173.9 189.6 L171.7 191.5 L169.6 193.4 L167.4 195.3 L165.3 197.3 L163.2 199.3 L161.1 201.2 L159.1 203.2 L157.0 205.3 L155.0 207.3 L153.1 209.3 L151.1 211.4 L149.2 213.5 L147.3 215.6 L145.4 217.7 L143.6 219.9 L141.8 222.0 L140.0 224.2 L138.3 226.4 L136.5 228.6 L134.8 230.8 L133.2 233.0 L131.5 235.3 L129.9 237.5 L128.4 239.8 L126.8 242.1 L125.3 244.4 L123.8 246.7 L122.4 249.1 L121.0 251.4 L119.6 253.8 L118.2 256.1 L116.9 258.5 L115.7 260.9 L114.4 263.4 L113.2 265.8 L112.0 268.2 L110.9 270.7 L109.8 273.1 L108.7 275.6 L107.7 278.1 L106.7 280.6 L105.8 283.1 L104.9 285.6 L104.0 288.1 L103.2 290.6 L102.4 293.2 L101.7 295.7 L101.0 298.3 L100.3 300.9 L99.7 303.4 L99.1 306.0 L98.5 308.6 L98.1 311.2 L97.6 313.8 L97.2 316.4 L96.8 319.0 L96.5 321.6 L96.2 324.2 L96.0 326.9 L95.8 329.5 L95.7 332.1 L95.6 334.7 L95.5 337.4 L95.6 340.0 L95.6 342.7 L95.7 345.2 L95.8 346.0 L96.2 346.6 L96.8 347.0 L97.5 347.2 L98.5 347.1 L99.7 346.9 L100.0 346.8 L102.0 346.2 L104.0 345.6 L106.1 345.1 L108.1 344.5 L110.2 343.9 L112.2 343.3 L114.3 342.8 L116.3 342.2 L118.4 341.6 L120.4 341.1 L122.5 340.5 L124.5 339.9 L126.5 339.3 L128.6 338.8 L130.6 338.2 L132.7 337.6 L132.8 337.6 L133.4 337.5 L133.9 337.4 L134.3 337.5 L134.5 337.7 L134.7 338.0 L134.8 338.4 L134.9 339.3 L135.2 341.5 L135.6 343.8 L135.9 346.0 L136.4 348.2 L136.8 350.4 L137.3 352.6 L137.9 354.9 L138.5 357.1 L139.1 359.3 L139.8 361.5 L140.5 363.6 L141.3 365.8 L142.1 368.0 L142.9 370.2 L143.8 372.3 L144.8 374.5 L145.7 376.6 L146.8 378.7 L147.9 380.8 L149.0 382.9 L150.1 385.0 L151.3 387.1 L152.6 389.2 L153.9 391.2 L155.2 393.3 L156.6 395.3 L158.1 397.3 L159.5 399.3 L161.1 401.3 L162.6 403.3 L164.2 405.2 L165.9 407.1 L167.6 409.1 L169.3 410.9 L171.1 412.8 L172.9 414.7 L174.8 416.5 L176.7 418.3 L178.7 420.1 L180.7 421.9 L182.8 423.7 L184.8 425.4 L187.0 427.1 L189.1 428.8 L191.4 430.4 L193.6 432.1 L195.9 433.7 L198.3 435.2 L200.6 436.8 L203.1 438.3 L205.5 439.8 L208.0 441.3 L210.6 442.7 L213.1 444.2 L215.7 445.6 L218.4 446.9 L221.1 448.2 L223.8 449.5 L226.6 450.8 L229.4 452.0 L232.2 453.2 L235.1 454.4 L238.0 455.5 L240.9 456.7 L243.9 457.7 L246.9 458.8 L249.9 459.8 L253.0 460.7 L256.1 461.7 L259.2 462.6 L262.3 463.4 L265.5 464.2 L268.7 465.0 L272.0 465.8 L275.2 466.5 L278.5 467.2 L281.8 467.8 L285.2 468.4 L288.5 469.0 L291.9 469.5 L295.3 470.0 L298.7 470.4 L302.1 470.8 L305.6 471.2 L309.1 471.5 L312.6 471.8 L316.1 472.0 L319.6 472.3 L323.1 472.4 L326.7 472.5 L330.3 472.6 L333.8 472.7 L337.4 472.7 L341.0 472.6 L344.6 472.6 L348.2 472.4 L351.8 472.3 L355.5 472.1 L359.1 471.8 L362.7 471.6 L366.4 471.2 L370.0 470.9 L373.6 470.5 L377.3 470.0 L380.9 469.5 L384.5 469.0 L388.2 468.4 L391.8 467.8 L395.4 467.2 L399.0 466.5 L402.6 465.8 L406.2 465.0 L409.8 464.2 L413.4 463.3 L417.0 462.5 L420.5 461.5 L424.1 460.6 L427.6 459.6 L431.1 458.5 L434.6 457.5 L438.1 456.4 L441.6 455.2 L445.0 454.0 L448.5 452.8 L451.9 451.6 L455.3 450.3 L458.6 448.9 L462.0 447.6 L465.3 446.2 L468.6 444.8 L471.9 443.3 L475.1 441.8 L478.3 440.3 L481.5 438.7 L484.7 437.2 L487.8 435.5 L490.9 433.9 L494.0 432.2 L497.1 430.5 L500.1 428.8 L503.0 427.0 L506.0 425.2 L508.9 423.4 L511.8 421.6 L514.6 419.7 L517.4 417.8 L520.2 415.9 L522.9 413.9 L525.6 412.0 L528.2 410.0 L530.9 408.0 L533.4 406.0 L536.0 403.9 L538.5 401.8 L540.9 399.7 L543.3 397.6 L545.7 395.5 L548.0 393.3 L548.9 392.5 L549.4 392.1 L549.9 391.9 L550.4 391.8 L550.9 391.8 L551.4 392.0 L552.0 392.3 L553.9 393.5 L557.6 395.9 L561.2 398.2 L564.9 400.6 L568.6 403.0 L572.3 405.4 L576.1 407.9 L579.8 410.3 L583.6 412.7 L587.4 415.2 L591.2 417.7 L595.0 420.1 L598.9 422.6 L602.7 425.1 L606.6 427.7 L610.5 430.2 L614.5 432.7 L618.1 435.1 L619.5 435.9 L620.8 436.3 L622.1 436.3 L623.3 436.1 L624.5 435.5 Z" fill="url(#wg)" fill-rule="evenodd"/>
<path d="M127.6 327.0 L94.1 336.4 L99.7 346.9 L132.8 337.6 Z M551.4 381.1 L618.3 424.0 L618.1 435.1 L552.0 392.3 Z" fill="#80857f"/>
<path d="M625.9 423.4 L628.7 420.4 L631.5 417.2 L634.3 414.0 L637.1 410.8 L639.8 407.6 L642.4 404.3 L644.9 401.0 L647.4 397.7 L649.8 394.4 L652.1 391.1 L654.4 387.8 L656.6 384.5 L658.7 381.1 L660.7 377.8 L662.7 374.4 L664.6 371.1 L666.5 367.7 L668.3 364.3 L670.0 361.0 L671.6 357.6 L673.2 354.2 L674.7 350.9 L676.1 347.5 L677.5 344.1 L678.8 340.7 L680.0 337.4 L681.2 334.0 L682.3 330.6 L683.3 327.3 L684.3 323.9 L685.2 320.6 L686.0 317.3 L686.8 313.9 L687.5 310.6 L688.1 307.3 L688.7 304.0 L689.2 300.7 L689.6 297.4 L690.0 294.2 L690.3 290.9 L690.6 287.7 L690.7 284.4 L690.9 281.2 L690.9 278.0 L691.0 274.9 L690.9 271.7 L690.8 268.5 L690.6 265.4 L690.4 262.3 L690.1 259.2 L689.8 256.1 L689.4 253.0 L688.9 250.0 L688.4 247.0 L687.9 244.0 L687.2 241.0 L686.6 238.0 L685.8 235.1 L685.1 232.2 L684.2 229.3 L683.4 226.4 L682.4 223.5 L681.4 220.7 L680.4 217.9 L679.3 215.1 L678.2 212.4 L677.0 209.6 L675.8 206.9 L674.5 204.2 L673.2 201.6 L671.9 198.9 L670.5 196.3 L669.0 193.7 L667.5 191.2 L666.0 188.6 L664.4 186.1 L662.8 183.6 L661.1 181.2 L659.4 178.8 L657.7 176.4 L655.9 174.0 L654.1 171.6 L652.3 169.3 L650.4 167.0 L648.4 164.8 L646.5 162.5 L644.5 160.3 L642.4 158.1 L640.4 156.0 L638.3 153.8 L636.1 151.7 L633.9 149.7 L631.7 147.6 L629.5 145.6 L627.2 143.6 L624.9 141.7 L622.6 139.8 L620.3 137.9 L617.9 136.0 L615.5 134.1 L613.0 132.3 L610.6 130.5 L608.1 128.8 L605.5 127.1 L603.0 125.4 L600.4 123.7 L597.8 122.1 L595.2 120.4 L592.5 118.9 L589.9 117.3 L587.2 115.8 L584.5 114.3 L581.7 112.8 L579.0 111.4 L576.2 110.0 L573.4 108.6 L570.5 107.2 L567.7 105.9 L564.8 104.6 L562.0 103.4 L559.1 102.1 L556.1 100.9 L553.2 99.7 L550.2 98.6 L547.3 97.5 L544.3 96.4 L541.3 95.3 L538.3 94.3 L535.2 93.2 L532.2 92.3 L529.1 91.3 L526.0 90.4 L522.9 89.5 L519.8 88.6 L516.7 87.8 L513.6 87.0 L510.5 86.2 L507.3 85.4 L504.1 84.7 L500.9 84.0 L497.8 83.3 L494.6 82.7 L491.4 82.1 L488.1 81.5 L484.9 80.9 L481.7 80.4 L478.4 79.9 L475.2 79.4 L471.9 78.9 L468.6 78.5 L465.3 78.1 L462.1 77.8 L458.8 77.4 L455.5 77.1 L452.2 76.8 L448.8 76.5 L445.5 76.3 L442.4 76.1 L441.3 76.1 L440.4 76.2 L439.5 76.5 L438.9 76.9 L438.4 77.4 L438.0 78.1 L437.7 78.9 L437.3 79.9 L436.8 80.9 L436.4 82.0 L436.0 83.0 L435.6 84.0 L435.2 85.0 L434.8 86.0 L434.4 87.0 L434.0 88.1 L433.6 89.1 L433.1 90.1 L432.7 91.2 L432.3 92.2 L431.9 93.2 L431.5 94.3 L431.4 94.3 L431.3 94.6 L431.1 94.9 L430.8 95.0 L430.4 95.2 L430.0 95.2 L429.5 95.2 L428.1 95.1 L425.1 95.0 L422.1 94.9 L419.1 94.8 L416.1 94.8 L413.1 94.7 L410.1 94.7 L407.1 94.8 L404.1 94.8 L401.1 94.9 L398.1 94.9 L395.1 95.1 L392.0 95.2 L389.0 95.4 L386.0 95.5 L383.0 95.7 L380.0 96.0 L376.9 96.2 L373.9 96.5 L370.9 96.8 L367.9 97.1 L364.9 97.5 L361.9 97.9 L358.8 98.3 L355.8 98.7 L352.8 99.1 L349.8 99.6 L346.8 100.1 L343.8 100.6 L340.8 101.1 L337.8 101.7 L334.8 102.3 L331.8 102.9 L328.8 103.5 L325.8 104.1 L322.8 104.8 L319.9 105.5 L316.9 106.2 L313.9 107.0 L311.0 107.7 L308.0 108.5 L305.1 109.3 L302.1 110.2 L299.2 111.0 L296.3 111.9 L293.4 112.8 L290.5 113.7 L287.6 114.6 L284.7 115.6 L281.8 116.6 L278.9 117.6 L276.0 118.6 L273.2 119.7 L270.3 120.8 L267.5 121.9 L264.6 123.0 L261.8 124.1 L259.0 125.3 L256.2 126.5 L253.4 127.7 L250.7 128.9 L247.9 130.1 L245.1 131.4 L242.4 132.7 L239.7 134.0 L237.0 135.4 L234.3 136.7 L231.6 138.1 L228.9 139.5 L226.3 140.9 L223.6 142.3 L221.0 143.8 L218.4 145.3 L215.8 146.8 L213.2 148.3 L210.6 149.8 L208.1 151.4 L205.6 153.0 L203.0 154.6 L200.5 156.2 L198.1 157.8 L195.6 159.5 L193.2 161.2 L190.7 162.9 L188.3 164.6 L185.9 166.3 L183.6 168.1 L181.2 169.9 L178.9 171.7 L176.6 173.5 L174.3 175.3 L172.1 177.2 L169.8 179.1 L167.6 180.9 L165.4 182.9 L163.2 184.8 L161.1 186.7 L159.0 188.7 L156.9 190.7 L154.8 192.7 L152.7 194.7 L150.7 196.7 L148.7 198.8 L146.7 200.9 L144.8 202.9 L142.9 205.0 L141.0 207.2 L139.1 209.3 L137.3 211.5 L135.5 213.6 L133.7 215.8 L131.9 218.0 L130.2 220.2 L128.5 222.5 L126.9 224.7 L125.2 227.0 L123.6 229.3 L122.1 231.5 L120.5 233.9 L119.0 236.2 L117.5 238.5 L116.1 240.9 L114.7 243.2 L113.3 245.6 L112.0 248.0 L110.7 250.4 L109.4 252.8 L108.2 255.2 L107.0 257.7 L105.9 260.1 L104.7 262.6 L103.6 265.1 L102.6 267.5 L101.6 270.0 L100.6 272.5 L99.7 275.1 L98.8 277.6 L98.0 280.1 L97.2 282.7 L96.4 285.2 L95.7 287.8 L95.0 290.3 L94.3 292.9 L93.7 295.5 L93.2 298.1 L92.7 300.7 L92.2 303.3 L91.8 305.9 L91.4 308.5 L91.1 311.1 L90.8 313.7 L90.5 316.4 L90.3 319.0 L90.2 321.6 L90.1 324.3 L90.0 326.9 L90.0 329.5 L90.0 332.2 L90.1 334.7 L90.3 335.5 L90.6 336.1 L91.2 336.5 L91.9 336.7 L92.9 336.6 L94.1 336.4 L94.4 336.3 L96.5 335.7 L98.5 335.1 L100.6 334.6 L102.7 334.0 L104.8 333.4 L106.8 332.8 L108.9 332.3 L111.0 331.7 L113.0 331.1 L115.1 330.5 L117.2 330.0 L119.2 329.4 L121.3 328.8 L123.4 328.2 L125.4 327.7 L127.5 327.1 L127.6 327.0 L128.2 326.9 L128.7 326.9 L129.1 327.0 L129.4 327.2 L129.6 327.5 L129.7 327.9 L129.8 328.7 L130.1 331.0 L130.4 333.2 L130.8 335.4 L131.2 337.7 L131.6 339.9 L132.1 342.1 L132.7 344.3 L133.3 346.5 L133.9 348.7 L134.6 350.9 L135.3 353.1 L136.0 355.3 L136.9 357.5 L137.7 359.6 L138.6 361.8 L139.5 363.9 L140.5 366.1 L141.6 368.2 L142.6 370.3 L143.8 372.4 L144.9 374.5 L146.1 376.6 L147.4 378.7 L148.7 380.7 L150.0 382.8 L151.4 384.8 L152.9 386.8 L154.4 388.8 L155.9 390.8 L157.5 392.8 L159.1 394.7 L160.7 396.7 L162.5 398.6 L164.2 400.5 L166.0 402.4 L167.8 404.2 L169.7 406.0 L171.7 407.9 L173.6 409.7 L175.7 411.4 L177.7 413.2 L179.8 414.9 L182.0 416.6 L184.2 418.3 L186.4 420.0 L188.7 421.6 L191.0 423.2 L193.4 424.8 L195.8 426.4 L198.2 427.9 L200.7 429.4 L203.2 430.9 L205.8 432.3 L208.4 433.7 L211.0 435.1 L213.7 436.5 L216.4 437.8 L219.2 439.1 L221.9 440.4 L224.8 441.6 L227.6 442.8 L230.5 444.0 L233.5 445.1 L236.4 446.2 L239.4 447.3 L242.5 448.3 L245.5 449.3 L248.6 450.3 L251.7 451.2 L254.9 452.1 L258.1 453.0 L261.3 453.8 L264.5 454.6 L267.8 455.3 L271.1 456.0 L274.4 456.7 L277.8 457.3 L281.2 457.9 L284.6 458.5 L288.0 459.0 L291.4 459.5 L294.9 459.9 L298.3 460.3 L301.8 460.7 L305.4 461.0 L308.9 461.3 L312.4 461.6 L316.0 461.8 L319.6 461.9 L323.2 462.0 L326.8 462.1 L330.4 462.2 L334.0 462.2 L337.7 462.1 L341.3 462.0 L345.0 461.9 L348.7 461.7 L352.3 461.5 L356.0 461.3 L359.7 461.0 L363.4 460.7 L367.0 460.3 L370.7 459.9 L374.4 459.4 L378.1 458.9 L381.8 458.4 L385.4 457.8 L389.1 457.2 L392.8 456.5 L396.5 455.8 L400.1 455.1 L403.8 454.3 L407.4 453.5 L411.0 452.7 L414.6 451.8 L418.2 450.8 L421.8 449.9 L425.4 448.9 L429.0 447.8 L432.5 446.7 L436.1 445.6 L439.6 444.5 L443.1 443.3 L446.5 442.0 L450.0 440.8 L453.4 439.5 L456.9 438.1 L460.2 436.8 L463.6 435.4 L466.9 433.9 L470.3 432.5 L473.5 431.0 L476.8 429.4 L480.0 427.9 L483.2 426.3 L486.4 424.6 L489.6 423.0 L492.7 421.3 L495.8 419.6 L498.8 417.8 L501.8 416.1 L504.8 414.3 L507.8 412.4 L510.7 410.6 L513.5 408.7 L516.4 406.8 L519.2 404.9 L522.0 402.9 L524.7 400.9 L527.4 398.9 L530.0 396.9 L532.6 394.9 L535.2 392.8 L537.7 390.7 L540.2 388.6 L542.7 386.5 L545.1 384.3 L547.4 382.2 L548.3 381.3 L548.8 381.0 L549.3 380.7 L549.8 380.6 L550.3 380.6 L550.9 380.8 L551.4 381.1 L553.4 382.4 L557.1 384.7 L560.8 387.1 L564.5 389.5 L568.2 391.9 L572.0 394.3 L575.8 396.7 L579.6 399.1 L583.4 401.6 L587.2 404.0 L591.1 406.5 L595.0 409.0 L598.9 411.5 L602.8 414.0 L606.7 416.5 L610.7 419.1 L614.7 421.6 L618.3 424.0 L619.8 424.7 L621.1 425.2 L622.4 425.2 L623.6 425.0 L624.8 424.3 Z M625.8 425.9 L628.6 422.9 L631.4 419.7 L634.2 416.5 L637.0 413.3 L639.6 410.0 L642.2 406.8 L644.8 403.5 L647.2 400.2 L649.6 396.9 L652.0 393.6 L654.2 390.3 L656.4 387.0 L658.5 383.7 L660.6 380.3 L662.5 377.0 L664.5 373.6 L666.3 370.2 L668.1 366.9 L669.8 363.5 L671.4 360.1 L673.0 356.8 L674.5 353.4 L675.9 350.0 L677.3 346.7 L678.6 343.3 L679.8 339.9 L681.0 336.6 L682.1 333.2 L683.1 329.8 L684.0 326.5 L684.9 323.2 L685.8 319.8 L686.5 316.5 L687.2 313.2 L687.9 309.9 L688.4 306.6 L688.9 303.3 L689.4 300.0 L689.7 296.7 L690.1 293.5 L690.3 290.2 L690.5 287.0 L690.6 283.8 L690.7 280.6 L690.7 277.4 L690.7 274.3 L690.6 271.1 L690.4 268.0 L690.2 264.9 L689.9 261.8 L689.5 258.7 L689.2 255.6 L688.7 252.6 L688.2 249.6 L687.6 246.6 L687.0 243.6 L686.3 240.6 L685.6 237.7 L684.8 234.7 L684.0 231.8 L683.1 229.0 L682.2 226.1 L681.2 223.3 L680.2 220.5 L679.1 217.7 L678.0 214.9 L676.8 212.2 L675.6 209.5 L674.4 206.8 L673.0 204.1 L671.7 201.5 L670.3 198.9 L668.8 196.3 L667.4 193.7 L665.8 191.2 L664.3 188.7 L662.6 186.2 L661.0 183.8 L659.3 181.3 L657.6 178.9 L655.8 176.5 L654.0 174.2 L652.1 171.9 L650.2 169.6 L648.3 167.3 L646.4 165.1 L644.4 162.9 L642.3 160.7 L640.3 158.5 L638.2 156.4 L636.0 154.3 L633.9 152.2 L631.7 150.2 L629.4 148.2 L627.2 146.2 L624.9 144.2 L622.6 142.3 L620.2 140.4 L617.8 138.5 L615.4 136.7 L613.0 134.9 L610.5 133.1 L608.0 131.3 L605.5 129.6 L603.0 127.9 L600.4 126.2 L597.8 124.6 L595.2 123.0 L592.6 121.4 L589.9 119.8 L587.2 118.3 L584.5 116.8 L581.8 115.3 L579.0 113.9 L576.2 112.5 L573.4 111.1 L570.6 109.7 L567.8 108.4 L564.9 107.1 L562.0 105.8 L559.1 104.6 L556.2 103.4 L553.3 102.2 L550.3 101.1 L547.4 99.9 L544.4 98.8 L541.4 97.8 L538.4 96.7 L535.4 95.7 L532.3 94.7 L529.3 93.8 L526.2 92.8 L523.1 91.9 L520.0 91.1 L516.9 90.2 L513.8 89.4 L510.6 88.6 L507.5 87.9 L504.3 87.1 L501.1 86.4 L498.0 85.8 L494.8 85.1 L491.6 84.5 L488.4 83.9 L485.1 83.4 L481.9 82.8 L478.7 82.3 L475.4 81.8 L472.1 81.4 L468.9 80.9 L465.6 80.5 L462.3 80.2 L459.0 79.8 L455.7 79.5 L452.4 79.2 L449.1 79.0 L445.8 78.7 L442.7 78.5 L441.6 78.5 L440.7 78.7 L439.9 78.9 L439.2 79.3 L438.7 79.8 L438.3 80.5 L438.0 81.3 L437.6 82.3 L437.2 83.4 L436.8 84.4 L436.4 85.4 L435.9 86.4 L435.5 87.4 L435.1 88.4 L434.7 89.5 L434.3 90.5 L433.9 91.5 L433.5 92.5 L433.1 93.6 L432.6 94.6 L432.2 95.6 L431.8 96.7 L431.8 96.8 L431.6 97.0 L431.4 97.3 L431.1 97.5 L430.7 97.6 L430.3 97.6 L429.8 97.6 L428.4 97.6 L425.4 97.4 L422.5 97.3 L419.5 97.2 L416.5 97.2 L413.5 97.2 L410.5 97.1 L407.5 97.2 L404.5 97.2 L401.5 97.3 L398.5 97.3 L395.5 97.5 L392.5 97.6 L389.4 97.7 L386.4 97.9 L383.4 98.1 L380.4 98.4 L377.4 98.6 L374.4 98.9 L371.4 99.2 L368.3 99.5 L365.3 99.9 L362.3 100.2 L359.3 100.6 L356.3 101.1 L353.3 101.5 L350.3 102.0 L347.3 102.4 L344.3 103.0 L341.3 103.5 L338.3 104.1 L335.3 104.6 L332.3 105.2 L329.3 105.9 L326.4 106.5 L323.4 107.2 L320.4 107.9 L317.5 108.6 L314.5 109.3 L311.6 110.1 L308.6 110.9 L305.7 111.7 L302.7 112.5 L299.8 113.4 L296.9 114.2 L294.0 115.1 L291.1 116.1 L288.2 117.0 L285.3 118.0 L282.4 119.0 L279.5 120.0 L276.7 121.0 L273.8 122.1 L271.0 123.1 L268.1 124.2 L265.3 125.3 L262.5 126.5 L259.7 127.6 L256.9 128.8 L254.1 130.0 L251.4 131.3 L248.6 132.5 L245.9 133.8 L243.1 135.1 L240.4 136.4 L237.7 137.7 L235.0 139.1 L232.3 140.4 L229.7 141.8 L227.0 143.2 L224.4 144.7 L221.8 146.1 L219.2 147.6 L216.6 149.1 L214.0 150.6 L211.4 152.2 L208.9 153.7 L206.4 155.3 L203.9 156.9 L201.4 158.5 L198.9 160.2 L196.4 161.8 L194.0 163.5 L191.6 165.2 L189.2 166.9 L186.8 168.7 L184.4 170.4 L182.1 172.2 L179.8 174.0 L177.5 175.8 L175.2 177.7 L173.0 179.5 L170.7 181.4 L168.5 183.3 L166.3 185.2 L164.2 187.1 L162.0 189.1 L159.9 191.0 L157.8 193.0 L155.7 195.0 L153.7 197.0 L151.7 199.1 L149.7 201.1 L147.7 203.2 L145.8 205.3 L143.9 207.4 L142.0 209.5 L140.1 211.6 L138.3 213.8 L136.5 216.0 L134.7 218.2 L133.0 220.4 L131.2 222.6 L129.6 224.8 L127.9 227.1 L126.3 229.3 L124.7 231.6 L123.1 233.9 L121.6 236.2 L120.1 238.5 L118.6 240.9 L117.2 243.2 L115.8 245.6 L114.4 247.9 L113.1 250.3 L111.8 252.7 L110.5 255.1 L109.3 257.6 L108.1 260.0 L107.0 262.5 L105.9 264.9 L104.8 267.4 L103.7 269.9 L102.7 272.4 L101.8 274.9 L100.9 277.4 L100.0 279.9 L99.1 282.5 L98.3 285.0 L97.6 287.5 L96.8 290.1 L96.2 292.7 L95.5 295.2 L94.9 297.8 L94.4 300.4 L93.9 303.0 L93.4 305.6 L93.0 308.2 L92.6 310.8 L92.3 313.4 L92.0 316.1 L91.7 318.7 L91.5 321.3 L91.4 324.0 L91.3 326.6 L91.2 329.2 L91.2 331.9 L91.3 334.5 L91.3 337.0 L91.5 337.8 L91.9 338.4 L92.4 338.8 L93.2 339.0 L94.2 339.0 L95.3 338.7 L95.6 338.6 L97.7 338.0 L99.8 337.5 L101.8 336.9 L103.9 336.3 L106.0 335.7 L108.0 335.2 L110.1 334.6 L112.2 334.0 L114.2 333.4 L116.3 332.9 L118.3 332.3 L120.4 331.7 L122.5 331.1 L124.5 330.6 L126.6 330.0 L128.6 329.4 L128.8 329.4 L129.4 329.3 L129.9 329.2 L130.2 329.3 L130.5 329.5 L130.7 329.8 L130.8 330.2 L130.9 331.1 L131.2 333.3 L131.5 335.5 L131.9 337.8 L132.3 340.0 L132.8 342.2 L133.3 344.4 L133.8 346.7 L134.4 348.9 L135.0 351.1 L135.7 353.3 L136.4 355.5 L137.2 357.6 L138.0 359.8 L138.9 362.0 L139.8 364.1 L140.7 366.3 L141.7 368.4 L142.7 370.5 L143.8 372.7 L144.9 374.8 L146.1 376.9 L147.3 378.9 L148.5 381.0 L149.8 383.1 L151.2 385.1 L152.6 387.1 L154.0 389.2 L155.5 391.2 L157.0 393.1 L158.6 395.1 L160.2 397.1 L161.9 399.0 L163.6 400.9 L165.3 402.8 L167.1 404.7 L169.0 406.5 L170.9 408.4 L172.8 410.2 L174.8 412.0 L176.8 413.8 L178.8 415.5 L180.9 417.2 L183.1 418.9 L185.3 420.6 L187.5 422.3 L189.8 423.9 L192.1 425.5 L194.4 427.1 L196.8 428.7 L199.3 430.2 L201.8 431.7 L204.3 433.2 L206.8 434.6 L209.4 436.0 L212.1 437.4 L214.7 438.8 L217.4 440.1 L220.2 441.4 L223.0 442.7 L225.8 443.9 L228.6 445.1 L231.5 446.3 L234.5 447.4 L237.4 448.5 L240.4 449.6 L243.4 450.6 L246.5 451.6 L249.6 452.6 L252.7 453.5 L255.9 454.4 L259.0 455.3 L262.2 456.1 L265.5 456.9 L268.7 457.6 L272.0 458.4 L275.3 459.0 L278.7 459.7 L282.0 460.3 L285.4 460.8 L288.8 461.3 L292.3 461.8 L295.7 462.3 L299.2 462.7 L302.7 463.0 L306.2 463.4 L309.7 463.6 L313.3 463.9 L316.8 464.1 L320.4 464.3 L324.0 464.4 L327.6 464.5 L331.2 464.5 L334.8 464.5 L338.4 464.5 L342.1 464.4 L345.7 464.2 L349.4 464.1 L353.0 463.9 L356.7 463.6 L360.4 463.3 L364.0 463.0 L367.7 462.6 L371.4 462.2 L375.0 461.8 L378.7 461.3 L382.4 460.7 L386.1 460.2 L389.7 459.6 L393.4 458.9 L397.0 458.2 L400.7 457.5 L404.3 456.7 L407.9 455.9 L411.6 455.0 L415.2 454.1 L418.8 453.2 L422.3 452.2 L425.9 451.2 L429.5 450.2 L433.0 449.1 L436.5 448.0 L440.0 446.8 L443.5 445.7 L447.0 444.4 L450.4 443.2 L453.8 441.9 L457.3 440.5 L460.6 439.2 L464.0 437.8 L467.3 436.3 L470.6 434.9 L473.9 433.4 L477.2 431.8 L480.4 430.3 L483.6 428.7 L486.7 427.1 L489.9 425.4 L493.0 423.7 L496.1 422.0 L499.1 420.3 L502.1 418.5 L505.1 416.7 L508.0 414.9 L510.9 413.0 L513.8 411.1 L516.6 409.2 L519.4 407.3 L522.2 405.4 L524.9 403.4 L527.6 401.4 L530.2 399.4 L532.8 397.3 L535.4 395.3 L537.9 393.2 L540.4 391.1 L542.8 389.0 L545.2 386.8 L547.6 384.7 L548.5 383.8 L548.9 383.4 L549.4 383.2 L549.9 383.1 L550.5 383.1 L551.0 383.3 L551.6 383.6 L553.5 384.8 L557.2 387.2 L560.9 389.6 L564.6 391.9 L568.3 394.3 L572.1 396.8 L575.8 399.2 L579.6 401.6 L583.4 404.1 L587.3 406.5 L591.1 409.0 L595.0 411.5 L598.9 414.0 L602.8 416.5 L606.7 419.0 L610.7 421.5 L614.6 424.1 L618.3 426.5 L619.7 427.2 L621.1 427.6 L622.3 427.7 L623.6 427.4 L624.7 426.8 Z" fill="#6f7470" fill-rule="evenodd"/>
<path d="M625.8 425.9 L628.6 422.9 L631.4 419.7 L634.2 416.5 L637.0 413.3 L639.6 410.0 L642.2 406.8 L644.8 403.5 L647.2 400.2 L649.6 396.9 L652.0 393.6 L654.2 390.3 L656.4 387.0 L658.5 383.7 L660.6 380.3 L662.5 377.0 L664.5 373.6 L666.3 370.2 L668.1 366.9 L669.8 363.5 L671.4 360.1 L673.0 356.8 L674.5 353.4 L675.9 350.0 L677.3 346.7 L678.6 343.3 L679.8 339.9 L681.0 336.6 L682.1 333.2 L683.1 329.8 L684.0 326.5 L684.9 323.2 L685.8 319.8 L686.5 316.5 L687.2 313.2 L687.9 309.9 L688.4 306.6 L688.9 303.3 L689.4 300.0 L689.7 296.7 L690.1 293.5 L690.3 290.2 L690.5 287.0 L690.6 283.8 L690.7 280.6 L690.7 277.4 L690.7 274.3 L690.6 271.1 L690.4 268.0 L690.2 264.9 L689.9 261.8 L689.5 258.7 L689.2 255.6 L688.7 252.6 L688.2 249.6 L687.6 246.6 L687.0 243.6 L686.3 240.6 L685.6 237.7 L684.8 234.7 L684.0 231.8 L683.1 229.0 L682.2 226.1 L681.2 223.3 L680.2 220.5 L679.1 217.7 L678.0 214.9 L676.8 212.2 L675.6 209.5 L674.4 206.8 L673.0 204.1 L671.7 201.5 L670.3 198.9 L668.8 196.3 L667.4 193.7 L665.8 191.2 L664.3 188.7 L662.6 186.2 L661.0 183.8 L659.3 181.3 L657.6 178.9 L655.8 176.5 L654.0 174.2 L652.1 171.9 L650.2 169.6 L648.3 167.3 L646.4 165.1 L644.4 162.9 L642.3 160.7 L640.3 158.5 L638.2 156.4 L636.0 154.3 L633.9 152.2 L631.7 150.2 L629.4 148.2 L627.2 146.2 L624.9 144.2 L622.6 142.3 L620.2 140.4 L617.8 138.5 L615.4 136.7 L613.0 134.9 L610.5 133.1 L608.0 131.3 L605.5 129.6 L603.0 127.9 L600.4 126.2 L597.8 124.6 L595.2 123.0 L592.6 121.4 L589.9 119.8 L587.2 118.3 L584.5 116.8 L581.8 115.3 L579.0 113.9 L576.2 112.5 L573.4 111.1 L570.6 109.7 L567.8 108.4 L564.9 107.1 L562.0 105.8 L559.1 104.6 L556.2 103.4 L553.3 102.2 L550.3 101.1 L547.4 99.9 L544.4 98.8 L541.4 97.8 L538.4 96.7 L535.4 95.7 L532.3 94.7 L529.3 93.8 L526.2 92.8 L523.1 91.9 L520.0 91.1 L516.9 90.2 L513.8 89.4 L510.6 88.6 L507.5 87.9 L504.3 87.1 L501.1 86.4 L498.0 85.8 L494.8 85.1 L491.6 84.5 L488.4 83.9 L485.1 83.4 L481.9 82.8 L478.7 82.3 L475.4 81.8 L472.1 81.4 L468.9 80.9 L465.6 80.5 L462.3 80.2 L459.0 79.8 L455.7 79.5 L452.4 79.2 L449.1 79.0 L445.8 78.7 L442.7 78.5 L441.6 78.5 L440.7 78.7 L439.9 78.9 L439.2 79.3 L438.7 79.8 L438.3 80.5 L438.0 81.3 L437.6 82.3 L437.2 83.4 L436.8 84.4 L436.4 85.4 L435.9 86.4 L435.5 87.4 L435.1 88.4 L434.7 89.5 L434.3 90.5 L433.9 91.5 L433.5 92.5 L433.1 93.6 L432.6 94.6 L432.2 95.6 L431.8 96.7 L431.8 96.8 L431.6 97.0 L431.4 97.3 L431.1 97.5 L430.7 97.6 L430.3 97.6 L429.8 97.6 L428.4 97.6 L425.4 97.4 L422.5 97.3 L419.5 97.2 L416.5 97.2 L413.5 97.2 L410.5 97.1 L407.5 97.2 L404.5 97.2 L401.5 97.3 L398.5 97.3 L395.5 97.5 L392.5 97.6 L389.4 97.7 L386.4 97.9 L383.4 98.1 L380.4 98.4 L377.4 98.6 L374.4 98.9 L371.4 99.2 L368.3 99.5 L365.3 99.9 L362.3 100.2 L359.3 100.6 L356.3 101.1 L353.3 101.5 L350.3 102.0 L347.3 102.4 L344.3 103.0 L341.3 103.5 L338.3 104.1 L335.3 104.6 L332.3 105.2 L329.3 105.9 L326.4 106.5 L323.4 107.2 L320.4 107.9 L317.5 108.6 L314.5 109.3 L311.6 110.1 L308.6 110.9 L305.7 111.7 L302.7 112.5 L299.8 113.4 L296.9 114.2 L294.0 115.1 L291.1 116.1 L288.2 117.0 L285.3 118.0 L282.4 119.0 L279.5 120.0 L276.7 121.0 L273.8 122.1 L271.0 123.1 L268.1 124.2 L265.3 125.3 L262.5 126.5 L259.7 127.6 L256.9 128.8 L254.1 130.0 L251.4 131.3 L248.6 132.5 L245.9 133.8 L243.1 135.1 L240.4 136.4 L237.7 137.7 L235.0 139.1 L232.3 140.4 L229.7 141.8 L227.0 143.2 L224.4 144.7 L221.8 146.1 L219.2 147.6 L216.6 149.1 L214.0 150.6 L211.4 152.2 L208.9 153.7 L206.4 155.3 L203.9 156.9 L201.4 158.5 L198.9 160.2 L196.4 161.8 L194.0 163.5 L191.6 165.2 L189.2 166.9 L186.8 168.7 L184.4 170.4 L182.1 172.2 L179.8 174.0 L177.5 175.8 L175.2 177.7 L173.0 179.5 L170.7 181.4 L168.5 183.3 L166.3 185.2 L164.2 187.1 L162.0 189.1 L159.9 191.0 L157.8 193.0 L155.7 195.0 L153.7 197.0 L151.7 199.1 L149.7 201.1 L147.7 203.2 L145.8 205.3 L143.9 207.4 L142.0 209.5 L140.1 211.6 L138.3 213.8 L136.5 216.0 L134.7 218.2 L133.0 220.4 L131.2 222.6 L129.6 224.8 L127.9 227.1 L126.3 229.3 L124.7 231.6 L123.1 233.9 L121.6 236.2 L120.1 238.5 L118.6 240.9 L117.2 243.2 L115.8 245.6 L114.4 247.9 L113.1 250.3 L111.8 252.7 L110.5 255.1 L109.3 257.6 L108.1 260.0 L107.0 262.5 L105.9 264.9 L104.8 267.4 L103.7 269.9 L102.7 272.4 L101.8 274.9 L100.9 277.4 L100.0 279.9 L99.1 282.5 L98.3 285.0 L97.6 287.5 L96.8 290.1 L96.2 292.7 L95.5 295.2 L94.9 297.8 L94.4 300.4 L93.9 303.0 L93.4 305.6 L93.0 308.2 L92.6 310.8 L92.3 313.4 L92.0 316.1 L91.7 318.7 L91.5 321.3 L91.4 324.0 L91.3 326.6 L91.2 329.2 L91.2 331.9 L91.3 334.5 L91.3 337.0 L91.5 337.8 L91.9 338.4 L92.4 338.8 L93.2 339.0 L94.2 339.0 L95.3 338.7 L95.6 338.6 L97.7 338.0 L99.8 337.5 L101.8 336.9 L103.9 336.3 L106.0 335.7 L108.0 335.2 L110.1 334.6 L112.2 334.0 L114.2 333.4 L116.3 332.9 L118.3 332.3 L120.4 331.7 L122.5 331.1 L124.5 330.6 L126.6 330.0 L128.6 329.4 L128.8 329.4 L129.4 329.3 L129.9 329.2 L130.2 329.3 L130.5 329.5 L130.7 329.8 L130.8 330.2 L130.9 331.1 L131.2 333.3 L131.5 335.5 L131.9 337.8 L132.3 340.0 L132.8 342.2 L133.3 344.4 L133.8 346.7 L134.4 348.9 L135.0 351.1 L135.7 353.3 L136.4 355.5 L137.2 357.6 L138.0 359.8 L138.9 362.0 L139.8 364.1 L140.7 366.3 L141.7 368.4 L142.7 370.5 L143.8 372.7 L144.9 374.8 L146.1 376.9 L147.3 378.9 L148.5 381.0 L149.8 383.1 L151.2 385.1 L152.6 387.1 L154.0 389.2 L155.5 391.2 L157.0 393.1 L158.6 395.1 L160.2 397.1 L161.9 399.0 L163.6 400.9 L165.3 402.8 L167.1 404.7 L169.0 406.5 L170.9 408.4 L172.8 410.2 L174.8 412.0 L176.8 413.8 L178.8 415.5 L180.9 417.2 L183.1 418.9 L185.3 420.6 L187.5 422.3 L189.8 423.9 L192.1 425.5 L194.4 427.1 L196.8 428.7 L199.3 430.2 L201.8 431.7 L204.3 433.2 L206.8 434.6 L209.4 436.0 L212.1 437.4 L214.7 438.8 L217.4 440.1 L220.2 441.4 L223.0 442.7 L225.8 443.9 L228.6 445.1 L231.5 446.3 L234.5 447.4 L237.4 448.5 L240.4 449.6 L243.4 450.6 L246.5 451.6 L249.6 452.6 L252.7 453.5 L255.9 454.4 L259.0 455.3 L262.2 456.1 L265.5 456.9 L268.7 457.6 L272.0 458.4 L275.3 459.0 L278.7 459.7 L282.0 460.3 L285.4 460.8 L288.8 461.3 L292.3 461.8 L295.7 462.3 L299.2 462.7 L302.7 463.0 L306.2 463.4 L309.7 463.6 L313.3 463.9 L316.8 464.1 L320.4 464.3 L324.0 464.4 L327.6 464.5 L331.2 464.5 L334.8 464.5 L338.4 464.5 L342.1 464.4 L345.7 464.2 L349.4 464.1 L353.0 463.9 L356.7 463.6 L360.4 463.3 L364.0 463.0 L367.7 462.6 L371.4 462.2 L375.0 461.8 L378.7 461.3 L382.4 460.7 L386.1 460.2 L389.7 459.6 L393.4 458.9 L397.0 458.2 L400.7 457.5 L404.3 456.7 L407.9 455.9 L411.6 455.0 L415.2 454.1 L418.8 453.2 L422.3 452.2 L425.9 451.2 L429.5 450.2 L433.0 449.1 L436.5 448.0 L440.0 446.8 L443.5 445.7 L447.0 444.4 L450.4 443.2 L453.8 441.9 L457.3 440.5 L460.6 439.2 L464.0 437.8 L467.3 436.3 L470.6 434.9 L473.9 433.4 L477.2 431.8 L480.4 430.3 L483.6 428.7 L486.7 427.1 L489.9 425.4 L493.0 423.7 L496.1 422.0 L499.1 420.3 L502.1 418.5 L505.1 416.7 L508.0 414.9 L510.9 413.0 L513.8 411.1 L516.6 409.2 L519.4 407.3 L522.2 405.4 L524.9 403.4 L527.6 401.4 L530.2 399.4 L532.8 397.3 L535.4 395.3 L537.9 393.2 L540.4 391.1 L542.8 389.0 L545.2 386.8 L547.6 384.7 L548.5 383.8 L548.9 383.4 L549.4 383.2 L549.9 383.1 L550.5 383.1 L551.0 383.3 L551.6 383.6 L553.5 384.8 L557.2 387.2 L560.9 389.6 L564.6 391.9 L568.3 394.3 L572.1 396.8 L575.8 399.2 L579.6 401.6 L583.4 404.1 L587.3 406.5 L591.1 409.0 L595.0 411.5 L598.9 414.0 L602.8 416.5 L606.7 419.0 L610.7 421.5 L614.6 424.1 L618.3 426.5 L619.7 427.2 L621.1 427.6 L622.3 427.7 L623.6 427.4 L624.7 426.8 Z" fill="none" stroke="#3a3d3b" stroke-width="0.8"/>
<path d="M625.6 434.5 L628.3 431.6 L631.1 428.4 L633.9 425.2 L636.6 422.0 L639.2 418.8 L641.8 415.5 L644.3 412.3 L646.7 409.0 L649.1 405.7 L651.4 402.4 L653.7 399.1 L655.8 395.8 L657.9 392.5 L660.0 389.1 L661.9 385.8 L663.8 382.5 L665.6 379.1 L667.4 375.7 L669.1 372.4 L670.7 369.0 L672.3 365.7 L673.8 362.3 L675.2 358.9 L676.5 355.6 L677.8 352.2 L679.0 348.9 L680.2 345.5 L681.3 342.2 L682.3 338.8 L683.2 335.5 L684.1 332.1 L684.9 328.8 L685.7 325.5 L686.4 322.2 L687.0 318.9 L687.6 315.6 L688.1 312.3 L688.5 309.0 L688.9 305.8 L689.2 302.5 L689.5 299.3 L689.7 296.1 L689.8 292.8 L689.9 289.7 L689.9 286.5 L689.8 283.3 L689.7 280.2 L689.6 277.0 L689.4 273.9 L689.1 270.8 L688.7 267.7 L688.4 264.7 L687.9 261.6 L687.4 258.6 L686.9 255.6 L686.2 252.6 L685.6 249.7 L684.9 246.7 L684.1 243.8 L683.3 240.9 L682.4 238.0 L681.5 235.2 L680.5 232.3 L679.5 229.5 L678.4 226.7 L677.3 224.0 L676.2 221.2 L675.0 218.5 L673.7 215.8 L672.4 213.2 L671.1 210.5 L669.7 207.9 L668.3 205.3 L666.8 202.8 L665.3 200.2 L663.7 197.7 L662.1 195.2 L660.5 192.8 L658.8 190.3 L657.1 187.9 L655.3 185.5 L653.5 183.2 L651.7 180.8 L649.8 178.5 L647.9 176.3 L646.0 174.0 L644.0 171.8 L642.0 169.6 L639.9 167.5 L637.8 165.3 L635.7 163.2 L633.6 161.1 L631.4 159.1 L629.2 157.1 L627.0 155.1 L624.7 153.1 L622.4 151.2 L620.0 149.3 L617.7 147.4 L615.3 145.5 L612.9 143.7 L610.4 141.9 L608.0 140.2 L605.5 138.4 L602.9 136.7 L600.4 135.0 L597.8 133.4 L595.2 131.8 L592.6 130.2 L589.9 128.6 L587.3 127.1 L584.6 125.6 L581.9 124.1 L579.1 122.7 L576.4 121.2 L573.6 119.8 L570.8 118.5 L568.0 117.1 L565.2 115.8 L562.3 114.6 L559.4 113.3 L556.5 112.1 L553.6 110.9 L550.7 109.7 L547.8 108.6 L544.8 107.5 L541.8 106.4 L538.8 105.4 L535.8 104.4 L532.8 103.4 L529.8 102.4 L526.7 101.5 L523.6 100.6 L520.6 99.7 L517.5 98.9 L514.4 98.0 L511.3 97.2 L508.1 96.5 L505.0 95.7 L501.8 95.0 L498.7 94.3 L495.5 93.7 L492.3 93.1 L489.1 92.5 L485.9 91.9 L482.7 91.4 L479.5 90.8 L476.3 90.3 L473.0 89.9 L469.8 89.5 L466.5 89.0 L463.3 88.7 L460.0 88.3 L456.7 88.0 L453.5 87.7 L450.2 87.4 L446.9 87.2 L443.8 87.0 L442.7 87.0 L441.8 87.1 L441.0 87.4 L440.3 87.8 L439.8 88.3 L439.4 88.9 L439.1 89.8 L438.7 90.8 L438.3 91.8 L437.9 92.8 L437.5 93.8 L437.1 94.9 L436.7 95.9 L436.3 96.9 L435.9 97.9 L435.5 99.0 L435.1 100.0 L434.6 101.0 L434.2 102.1 L433.8 103.1 L433.4 104.1 L433.0 105.2 L433.0 105.2 L432.8 105.5 L432.6 105.8 L432.3 105.9 L431.9 106.1 L431.5 106.1 L431.0 106.1 L429.6 106.0 L426.7 105.9 L423.7 105.8 L420.7 105.7 L417.8 105.6 L414.8 105.6 L411.8 105.6 L408.8 105.6 L405.9 105.6 L402.9 105.7 L399.9 105.8 L396.9 105.9 L393.9 106.0 L390.9 106.2 L387.9 106.3 L384.9 106.5 L381.9 106.8 L379.0 107.0 L376.0 107.3 L373.0 107.6 L370.0 107.9 L367.0 108.3 L364.0 108.6 L361.0 109.0 L358.0 109.4 L355.0 109.9 L352.0 110.3 L349.1 110.8 L346.1 111.3 L343.1 111.8 L340.1 112.4 L337.2 113.0 L334.2 113.6 L331.2 114.2 L328.3 114.8 L325.3 115.5 L322.4 116.2 L319.4 116.9 L316.5 117.7 L313.6 118.4 L310.7 119.2 L307.7 120.0 L304.8 120.8 L301.9 121.7 L299.0 122.6 L296.1 123.4 L293.2 124.4 L290.4 125.3 L287.5 126.3 L284.6 127.2 L281.8 128.3 L279.0 129.3 L276.1 130.3 L273.3 131.4 L270.5 132.5 L267.7 133.6 L264.9 134.8 L262.1 135.9 L259.4 137.1 L256.6 138.3 L253.8 139.5 L251.1 140.8 L248.4 142.0 L245.7 143.3 L243.0 144.6 L240.3 146.0 L237.6 147.3 L235.0 148.7 L232.3 150.1 L229.7 151.5 L227.1 152.9 L224.5 154.4 L221.9 155.9 L219.3 157.4 L216.8 158.9 L214.2 160.4 L211.7 162.0 L209.2 163.6 L206.7 165.2 L204.3 166.8 L201.8 168.4 L199.4 170.1 L197.0 171.8 L194.6 173.5 L192.2 175.2 L189.8 176.9 L187.5 178.7 L185.2 180.4 L182.9 182.2 L180.6 184.1 L178.4 185.9 L176.1 187.7 L173.9 189.6 L171.7 191.5 L169.6 193.4 L167.4 195.3 L165.3 197.3 L163.2 199.3 L161.1 201.2 L159.1 203.2 L157.0 205.3 L155.0 207.3 L153.1 209.3 L151.1 211.4 L149.2 213.5 L147.3 215.6 L145.4 217.7 L143.6 219.9 L141.8 222.0 L140.0 224.2 L138.3 226.4 L136.5 228.6 L134.8 230.8 L133.2 233.0 L131.5 235.3 L129.9 237.5 L128.4 239.8 L126.8 242.1 L125.3 244.4 L123.8 246.7 L122.4 249.1 L121.0 251.4 L119.6 253.8 L118.2 256.1 L116.9 258.5 L115.7 260.9 L114.4 263.4 L113.2 265.8 L112.0 268.2 L110.9 270.7 L109.8 273.1 L108.7 275.6 L107.7 278.1 L106.7 280.6 L105.8 283.1 L104.9 285.6 L104.0 288.1 L103.2 290.6 L102.4 293.2 L101.7 295.7 L101.0 298.3 L100.3 300.9 L99.7 303.4 L99.1 306.0 L98.5 308.6 L98.1 311.2 L97.6 313.8 L97.2 316.4 L96.8 319.0 L96.5 321.6 L96.2 324.2 L96.0 326.9 L95.8 329.5 L95.7 332.1 L95.6 334.7 L95.5 337.4 L95.6 340.0 L95.6 342.7 L95.7 345.2 L95.8 346.0 L96.2 346.6 L96.8 347.0 L97.5 347.2 L98.5 347.1 L99.7 346.9 L100.0 346.8 L102.0 346.2 L104.0 345.6 L106.1 345.1 L108.1 344.5 L110.2 343.9 L112.2 343.3 L114.3 342.8 L116.3 342.2 L118.4 341.6 L120.4 341.1 L122.5 340.5 L124.5 339.9 L126.5 339.3 L128.6 338.8 L130.6 338.2 L132.7 337.6 L132.8 337.6 L133.4 337.5 L133.9 337.4 L134.3 337.5 L134.5 337.7 L134.7 338.0 L134.8 338.4 L134.9 339.3 L135.2 341.5 L135.6 343.8 L135.9 346.0 L136.4 348.2 L136.8 350.4 L137.3 352.6 L137.9 354.9 L138.5 357.1 L139.1 359.3 L139.8 361.5 L140.5 363.6 L141.3 365.8 L142.1 368.0 L142.9 370.2 L143.8 372.3 L144.8 374.5 L145.7 376.6 L146.8 378.7 L147.9 380.8 L149.0 382.9 L150.1 385.0 L151.3 387.1 L152.6 389.2 L153.9 391.2 L155.2 393.3 L156.6 395.3 L158.1 397.3 L159.5 399.3 L161.1 401.3 L162.6 403.3 L164.2 405.2 L165.9 407.1 L167.6 409.1 L169.3 410.9 L171.1 412.8 L172.9 414.7 L174.8 416.5 L176.7 418.3 L178.7 420.1 L180.7 421.9 L182.8 423.7 L184.8 425.4 L187.0 427.1 L189.1 428.8 L191.4 430.4 L193.6 432.1 L195.9 433.7 L198.3 435.2 L200.6 436.8 L203.1 438.3 L205.5 439.8 L208.0 441.3 L210.6 442.7 L213.1 444.2 L215.7 445.6 L218.4 446.9 L221.1 448.2 L223.8 449.5 L226.6 450.8 L229.4 452.0 L232.2 453.2 L235.1 454.4 L238.0 455.5 L240.9 456.7 L243.9 457.7 L246.9 458.8 L249.9 459.8 L253.0 460.7 L256.1 461.7 L259.2 462.6 L262.3 463.4 L265.5 464.2 L268.7 465.0 L272.0 465.8 L275.2 466.5 L278.5 467.2 L281.8 467.8 L285.2 468.4 L288.5 469.0 L291.9 469.5 L295.3 470.0 L298.7 470.4 L302.1 470.8 L305.6 471.2 L309.1 471.5 L312.6 471.8 L316.1 472.0 L319.6 472.3 L323.1 472.4 L326.7 472.5 L330.3 472.6 L333.8 472.7 L337.4 472.7 L341.0 472.6 L344.6 472.6 L348.2 472.4 L351.8 472.3 L355.5 472.1 L359.1 471.8 L362.7 471.6 L366.4 471.2 L370.0 470.9 L373.6 470.5 L377.3 470.0 L380.9 469.5 L384.5 469.0 L388.2 468.4 L391.8 467.8 L395.4 467.2 L399.0 466.5 L402.6 465.8 L406.2 465.0 L409.8 464.2 L413.4 463.3 L417.0 462.5 L420.5 461.5 L424.1 460.6 L427.6 459.6 L431.1 458.5 L434.6 457.5 L438.1 456.4 L441.6 455.2 L445.0 454.0 L448.5 452.8 L451.9 451.6 L455.3 450.3 L458.6 448.9 L462.0 447.6 L465.3 446.2 L468.6 444.8 L471.9 443.3 L475.1 441.8 L478.3 440.3 L481.5 438.7 L484.7 437.2 L487.8 435.5 L490.9 433.9 L494.0 432.2 L497.1 430.5 L500.1 428.8 L503.0 427.0 L506.0 425.2 L508.9 423.4 L511.8 421.6 L514.6 419.7 L517.4 417.8 L520.2 415.9 L522.9 413.9 L525.6 412.0 L528.2 410.0 L530.9 408.0 L533.4 406.0 L536.0 403.9 L538.5 401.8 L540.9 399.7 L543.3 397.6 L545.7 395.5 L548.0 393.3 L548.9 392.5 L549.4 392.1 L549.9 391.9 L550.4 391.8 L550.9 391.8 L551.4 392.0 L552.0 392.3 L553.9 393.5 L557.6 395.9 L561.2 398.2 L564.9 400.6 L568.6 403.0 L572.3 405.4 L576.1 407.9 L579.8 410.3 L583.6 412.7 L587.4 415.2 L591.2 417.7 L595.0 420.1 L598.9 422.6 L602.7 425.1 L606.6 427.7 L610.5 430.2 L614.5 432.7 L618.1 435.1 L619.5 435.9 L620.8 436.3 L622.1 436.3 L623.3 436.1 L624.5 435.5 Z" fill="none" stroke="#4a4d49" stroke-width="0.8"/>
<path d="M625.9 423.4 L628.7 420.4 L631.5 417.2 L634.3 414.0 L637.1 410.8 L639.8 407.6 L642.4 404.3 L644.9 401.0 L647.4 397.7 L649.8 394.4 L652.1 391.1 L654.4 387.8 L656.6 384.5 L658.7 381.1 L660.7 377.8 L662.7 374.4 L664.6 371.1 L666.5 367.7 L668.3 364.3 L670.0 361.0 L671.6 357.6 L673.2 354.2 L674.7 350.9 L676.1 347.5 L677.5 344.1 L678.8 340.7 L680.0 337.4 L681.2 334.0 L682.3 330.6 L683.3 327.3 L684.3 323.9 L685.2 320.6 L686.0 317.3 L686.8 313.9 L687.5 310.6 L688.1 307.3 L688.7 304.0 L689.2 300.7 L689.6 297.4 L690.0 294.2 L690.3 290.9 L690.6 287.7 L690.7 284.4 L690.9 281.2 L690.9 278.0 L691.0 274.9 L690.9 271.7 L690.8 268.5 L690.6 265.4 L690.4 262.3 L690.1 259.2 L689.8 256.1 L689.4 253.0 L688.9 250.0 L688.4 247.0 L687.9 244.0 L687.2 241.0 L686.6 238.0 L685.8 235.1 L685.1 232.2 L684.2 229.3 L683.4 226.4 L682.4 223.5 L681.4 220.7 L680.4 217.9 L679.3 215.1 L678.2 212.4 L677.0 209.6 L675.8 206.9 L674.5 204.2 L673.2 201.6 L671.9 198.9 L670.5 196.3 L669.0 193.7 L667.5 191.2 L666.0 188.6 L664.4 186.1 L662.8 183.6 L661.1 181.2 L659.4 178.8 L657.7 176.4 L655.9 174.0 L654.1 171.6 L652.3 169.3 L650.4 167.0 L648.4 164.8 L646.5 162.5 L644.5 160.3 L642.4 158.1 L640.4 156.0 L638.3 153.8 L636.1 151.7 L633.9 149.7 L631.7 147.6 L629.5 145.6 L627.2 143.6 L624.9 141.7 L622.6 139.8 L620.3 137.9 L617.9 136.0 L615.5 134.1 L613.0 132.3 L610.6 130.5 L608.1 128.8 L605.5 127.1 L603.0 125.4 L600.4 123.7 L597.8 122.1 L595.2 120.4 L592.5 118.9 L589.9 117.3 L587.2 115.8 L584.5 114.3 L581.7 112.8 L579.0 111.4 L576.2 110.0 L573.4 108.6 L570.5 107.2 L567.7 105.9 L564.8 104.6 L562.0 103.4 L559.1 102.1 L556.1 100.9 L553.2 99.7 L550.2 98.6 L547.3 97.5 L544.3 96.4 L541.3 95.3 L538.3 94.3 L535.2 93.2 L532.2 92.3 L529.1 91.3 L526.0 90.4 L522.9 89.5 L519.8 88.6 L516.7 87.8 L513.6 87.0 L510.5 86.2 L507.3 85.4 L504.1 84.7 L500.9 84.0 L497.8 83.3 L494.6 82.7 L491.4 82.1 L488.1 81.5 L484.9 80.9 L481.7 80.4 L478.4 79.9 L475.2 79.4 L471.9 78.9 L468.6 78.5 L465.3 78.1 L462.1 77.8 L458.8 77.4 L455.5 77.1 L452.2 76.8 L448.8 76.5 L445.5 76.3 L442.4 76.1 L441.3 76.1 L440.4 76.2 L439.5 76.5 L438.9 76.9 L438.4 77.4 L438.0 78.1 L437.7 78.9 L437.3 79.9 L436.8 80.9 L436.4 82.0 L436.0 83.0 L435.6 84.0 L435.2 85.0 L434.8 86.0 L434.4 87.0 L434.0 88.1 L433.6 89.1 L433.1 90.1 L432.7 91.2 L432.3 92.2 L431.9 93.2 L431.5 94.3 L431.4 94.3 L431.3 94.6 L431.1 94.9 L430.8 95.0 L430.4 95.2 L430.0 95.2 L429.5 95.2 L428.1 95.1 L425.1 95.0 L422.1 94.9 L419.1 94.8 L416.1 94.8 L413.1 94.7 L410.1 94.7 L407.1 94.8 L404.1 94.8 L401.1 94.9 L398.1 94.9 L395.1 95.1 L392.0 95.2 L389.0 95.4 L386.0 95.5 L383.0 95.7 L380.0 96.0 L376.9 96.2 L373.9 96.5 L370.9 96.8 L367.9 97.1 L364.9 97.5 L361.9 97.9 L358.8 98.3 L355.8 98.7 L352.8 99.1 L349.8 99.6 L346.8 100.1 L343.8 100.6 L340.8 101.1 L337.8 101.7 L334.8 102.3 L331.8 102.9 L328.8 103.5 L325.8 104.1 L322.8 104.8 L319.9 105.5 L316.9 106.2 L313.9 107.0 L311.0 107.7 L308.0 108.5 L305.1 109.3 L302.1 110.2 L299.2 111.0 L296.3 111.9 L293.4 112.8 L290.5 113.7 L287.6 114.6 L284.7 115.6 L281.8 116.6 L278.9 117.6 L276.0 118.6 L273.2 119.7 L270.3 120.8 L267.5 121.9 L264.6 123.0 L261.8 124.1 L259.0 125.3 L256.2 126.5 L253.4 127.7 L250.7 128.9 L247.9 130.1 L245.1 131.4 L242.4 132.7 L239.7 134.0 L237.0 135.4 L234.3 136.7 L231.6 138.1 L228.9 139.5 L226.3 140.9 L223.6 142.3 L221.0 143.8 L218.4 145.3 L215.8 146.8 L213.2 148.3 L210.6 149.8 L208.1 151.4 L205.6 153.0 L203.0 154.6 L200.5 156.2 L198.1 157.8 L195.6 159.5 L193.2 161.2 L190.7 162.9 L188.3 164.6 L185.9 166.3 L183.6 168.1 L181.2 169.9 L178.9 171.7 L176.6 173.5 L174.3 175.3 L172.1 177.2 L169.8 179.1 L167.6 180.9 L165.4 182.9 L163.2 184.8 L161.1 186.7 L159.0 188.7 L156.9 190.7 L154.8 192.7 L152.7 194.7 L150.7 196.7 L148.7 198.8 L146.7 200.9 L144.8 202.9 L142.9 205.0 L141.0 207.2 L139.1 209.3 L137.3 211.5 L135.5 213.6 L133.7 215.8 L131.9 218.0 L130.2 220.2 L128.5 222.5 L126.9 224.7 L125.2 227.0 L123.6 229.3 L122.1 231.5 L120.5 233.9 L119.0 236.2 L117.5 238.5 L116.1 240.9 L114.7 243.2 L113.3 245.6 L112.0 248.0 L110.7 250.4 L109.4 252.8 L108.2 255.2 L107.0 257.7 L105.9 260.1 L104.7 262.6 L103.6 265.1 L102.6 267.5 L101.6 270.0 L100.6 272.5 L99.7 275.1 L98.8 277.6 L98.0 280.1 L97.2 282.7 L96.4 285.2 L95.7 287.8 L95.0 290.3 L94.3 292.9 L93.7 295.5 L93.2 298.1 L92.7 300.7 L92.2 303.3 L91.8 305.9 L91.4 308.5 L91.1 311.1 L90.8 313.7 L90.5 316.4 L90.3 319.0 L90.2 321.6 L90.1 324.3 L90.0 326.9 L90.0 329.5 L90.0 332.2 L90.1 334.7 L90.3 335.5 L90.6 336.1 L91.2 336.5 L91.9 336.7 L92.9 336.6 L94.1 336.4 L94.4 336.3 L96.5 335.7 L98.5 335.1 L100.6 334.6 L102.7 334.0 L104.8 333.4 L106.8 332.8 L108.9 332.3 L111.0 331.7 L113.0 331.1 L115.1 330.5 L117.2 330.0 L119.2 329.4 L121.3 328.8 L123.4 328.2 L125.4 327.7 L127.5 327.1 L127.6 327.0 L128.2 326.9 L128.7 326.9 L129.1 327.0 L129.4 327.2 L129.6 327.5 L129.7 327.9 L129.8 328.7 L130.1 331.0 L130.4 333.2 L130.8 335.4 L131.2 337.7 L131.6 339.9 L132.1 342.1 L132.7 344.3 L133.3 346.5 L133.9 348.7 L134.6 350.9 L135.3 353.1 L136.0 355.3 L136.9 357.5 L137.7 359.6 L138.6 361.8 L139.5 363.9 L140.5 366.1 L141.6 368.2 L142.6 370.3 L143.8 372.4 L144.9 374.5 L146.1 376.6 L147.4 378.7 L148.7 380.7 L150.0 382.8 L151.4 384.8 L152.9 386.8 L154.4 388.8 L155.9 390.8 L157.5 392.8 L159.1 394.7 L160.7 396.7 L162.5 398.6 L164.2 400.5 L166.0 402.4 L167.8 404.2 L169.7 406.0 L171.7 407.9 L173.6 409.7 L175.7 411.4 L177.7 413.2 L179.8 414.9 L182.0 416.6 L184.2 418.3 L186.4 420.0 L188.7 421.6 L191.0 423.2 L193.4 424.8 L195.8 426.4 L198.2 427.9 L200.7 429.4 L203.2 430.9 L205.8 432.3 L208.4 433.7 L211.0 435.1 L213.7 436.5 L216.4 437.8 L219.2 439.1 L221.9 440.4 L224.8 441.6 L227.6 442.8 L230.5 444.0 L233.5 445.1 L236.4 446.2 L239.4 447.3 L242.5 448.3 L245.5 449.3 L248.6 450.3 L251.7 451.2 L254.9 452.1 L258.1 453.0 L261.3 453.8 L264.5 454.6 L267.8 455.3 L271.1 456.0 L274.4 456.7 L277.8 457.3 L281.2 457.9 L284.6 458.5 L288.0 459.0 L291.4 459.5 L294.9 459.9 L298.3 460.3 L301.8 460.7 L305.4 461.0 L308.9 461.3 L312.4 461.6 L316.0 461.8 L319.6 461.9 L323.2 462.0 L326.8 462.1 L330.4 462.2 L334.0 462.2 L337.7 462.1 L341.3 462.0 L345.0 461.9 L348.7 461.7 L352.3 461.5 L356.0 461.3 L359.7 461.0 L363.4 460.7 L367.0 460.3 L370.7 459.9 L374.4 459.4 L378.1 458.9 L381.8 458.4 L385.4 457.8 L389.1 457.2 L392.8 456.5 L396.5 455.8 L400.1 455.1 L403.8 454.3 L407.4 453.5 L411.0 452.7 L414.6 451.8 L418.2 450.8 L421.8 449.9 L425.4 448.9 L429.0 447.8 L432.5 446.7 L436.1 445.6 L439.6 444.5 L443.1 443.3 L446.5 442.0 L450.0 440.8 L453.4 439.5 L456.9 438.1 L460.2 436.8 L463.6 435.4 L466.9 433.9 L470.3 432.5 L473.5 431.0 L476.8 429.4 L480.0 427.9 L483.2 426.3 L486.4 424.6 L489.6 423.0 L492.7 421.3 L495.8 419.6 L498.8 417.8 L501.8 416.1 L504.8 414.3 L507.8 412.4 L510.7 410.6 L513.5 408.7 L516.4 406.8 L519.2 404.9 L522.0 402.9 L524.7 400.9 L527.4 398.9 L530.0 396.9 L532.6 394.9 L535.2 392.8 L537.7 390.7 L540.2 388.6 L542.7 386.5 L545.1 384.3 L547.4 382.2 L548.3 381.3 L548.8 381.0 L549.3 380.7 L549.8 380.6 L550.3 380.6 L550.9 380.8 L551.4 381.1 L553.4 382.4 L557.1 384.7 L560.8 387.1 L564.5 389.5 L568.2 391.9 L572.0 394.3 L575.8 396.7 L579.6 399.1 L583.4 401.6 L587.2 404.0 L591.1 406.5 L595.0 409.0 L598.9 411.5 L602.8 414.0 L606.7 416.5 L610.7 419.1 L614.7 421.6 L618.3 424.0 L619.8 424.7 L621.1 425.2 L622.4 425.2 L623.6 425.0 L624.8 424.3 Z M393.0 238.6 L390.5 237.2 L387.8 236.0 L384.9 235.0 L381.9 234.2 L378.7 233.6 L375.5 233.2 L372.1 232.9 L368.7 233.0 L365.3 233.2 L361.9 233.6 L358.5 234.2 L355.1 235.0 L351.9 236.0 L348.6 237.2 L345.5 238.6 L342.6 240.2 L339.8 241.9 L337.1 243.7 L334.7 245.7 L332.5 247.8 L330.5 250.1 L328.7 252.4 L327.2 254.8 L326.0 257.2 L325.1 259.7 L324.4 262.2 L324.1 264.7 L324.0 267.2 L324.3 269.6 L324.8 272.1 L325.7 274.4 L326.9 276.6 L328.3 278.8 L330.1 280.8 L332.1 282.6 L334.4 284.3 L336.9 285.9 L339.6 287.2 L342.6 288.3 L345.7 289.3 L348.9 290.0 L352.3 290.5 L355.8 290.7 L359.4 290.8 L363.0 290.6 L366.6 290.1 L370.2 289.5 L373.7 288.6 L377.2 287.5 L380.6 286.2 L383.8 284.7 L386.9 283.0 L389.8 281.2 L392.5 279.2 L394.9 277.1 L397.1 274.8 L399.1 272.5 L400.7 270.0 L402.1 267.6 L403.2 265.0 L404.0 262.5 L404.4 260.0 L404.6 257.4 L404.4 255.0 L404.0 252.5 L403.2 250.2 L402.2 247.9 L400.9 245.8 L399.3 243.8 L397.4 241.9 L395.3 240.2 Z M397.6 197.6 L396.6 197.1 L395.5 196.7 L394.3 196.3 L393.1 196.0 L391.9 195.8 L390.6 195.6 L389.3 195.5 L387.9 195.6 L386.6 195.6 L385.2 195.8 L383.8 196.1 L382.5 196.4 L381.2 196.8 L379.9 197.2 L378.7 197.8 L377.6 198.4 L376.5 199.0 L375.4 199.8 L374.5 200.5 L373.6 201.3 L372.9 202.2 L372.2 203.0 L371.7 203.9 L371.2 204.8 L370.9 205.8 L370.7 206.7 L370.6 207.6 L370.6 208.6 L370.8 209.5 L371.0 210.3 L371.4 211.2 L371.9 212.0 L372.5 212.8 L373.2 213.5 L374.1 214.2 L375.0 214.8 L376.0 215.3 L377.0 215.8 L378.2 216.2 L379.4 216.5 L380.7 216.7 L382.0 216.9 L383.4 217.0 L384.7 217.0 L386.1 216.9 L387.5 216.7 L388.9 216.5 L390.3 216.1 L391.6 215.7 L392.9 215.2 L394.1 214.7 L395.3 214.1 L396.4 213.4 L397.4 212.7 L398.4 211.9 L399.2 211.1 L400.0 210.2 L400.6 209.3 L401.2 208.4 L401.6 207.5 L401.9 206.5 L402.1 205.6 L402.1 204.7 L402.1 203.7 L401.9 202.8 L401.6 202.0 L401.2 201.1 L400.7 200.3 L400.1 199.6 L399.3 198.9 L398.5 198.2 Z M297.1 273.7 L296.1 273.1 L295.1 272.6 L293.9 272.2 L292.7 271.8 L291.4 271.5 L290.1 271.3 L288.7 271.2 L287.3 271.2 L285.9 271.3 L284.4 271.5 L283.0 271.7 L281.6 272.1 L280.2 272.5 L278.8 273.0 L277.5 273.6 L276.2 274.3 L275.0 275.0 L273.9 275.8 L272.8 276.7 L271.8 277.6 L270.9 278.5 L270.1 279.5 L269.5 280.5 L268.9 281.6 L268.5 282.6 L268.1 283.7 L267.9 284.8 L267.9 285.8 L267.9 286.9 L268.1 287.9 L268.4 288.9 L268.8 289.8 L269.4 290.7 L270.0 291.5 L270.8 292.3 L271.7 293.0 L272.7 293.6 L273.7 294.2 L274.9 294.7 L276.1 295.0 L277.4 295.3 L278.8 295.5 L280.2 295.7 L281.6 295.7 L283.1 295.6 L284.5 295.4 L286.0 295.1 L287.5 294.8 L288.9 294.3 L290.3 293.8 L291.6 293.2 L292.9 292.5 L294.2 291.7 L295.3 290.9 L296.4 290.0 L297.4 289.1 L298.2 288.1 L299.0 287.1 L299.7 286.1 L300.2 285.0 L300.6 284.0 L300.9 282.9 L301.1 281.8 L301.1 280.8 L301.0 279.7 L300.8 278.7 L300.5 277.8 L300.0 276.9 L299.5 276.0 L298.8 275.2 L298.0 274.4 Z M433.8 289.1 L432.8 288.5 L431.6 288.0 L430.4 287.5 L429.2 287.2 L427.9 286.9 L426.5 286.7 L425.2 286.6 L423.8 286.6 L422.4 286.7 L421.0 286.8 L419.6 287.1 L418.2 287.4 L416.9 287.9 L415.6 288.4 L414.3 288.9 L413.2 289.6 L412.0 290.3 L411.0 291.1 L410.1 291.9 L409.2 292.8 L408.5 293.8 L407.8 294.7 L407.3 295.7 L406.8 296.8 L406.5 297.8 L406.4 298.8 L406.3 299.9 L406.4 300.9 L406.5 301.9 L406.9 302.9 L407.3 303.9 L407.8 304.8 L408.5 305.7 L409.2 306.5 L410.1 307.3 L411.1 308.0 L412.1 308.6 L413.3 309.2 L414.5 309.6 L415.8 310.0 L417.1 310.3 L418.5 310.5 L419.9 310.6 L421.3 310.6 L422.7 310.6 L424.1 310.4 L425.6 310.1 L427.0 309.8 L428.3 309.3 L429.6 308.8 L430.9 308.2 L432.1 307.5 L433.2 306.8 L434.3 306.0 L435.2 305.1 L436.1 304.2 L436.8 303.3 L437.4 302.3 L438.0 301.3 L438.4 300.2 L438.6 299.2 L438.8 298.1 L438.8 297.1 L438.7 296.0 L438.5 295.0 L438.2 294.0 L437.7 293.1 L437.1 292.2 L436.5 291.3 L435.7 290.5 L434.8 289.8 Z" fill="#606766" fill-rule="evenodd"/>
<clipPath id="fc"><path d="M625.9 423.4 L628.7 420.4 L631.5 417.2 L634.3 414.0 L637.1 410.8 L639.8 407.6 L642.4 404.3 L644.9 401.0 L647.4 397.7 L649.8 394.4 L652.1 391.1 L654.4 387.8 L656.6 384.5 L658.7 381.1 L660.7 377.8 L662.7 374.4 L664.6 371.1 L666.5 367.7 L668.3 364.3 L670.0 361.0 L671.6 357.6 L673.2 354.2 L674.7 350.9 L676.1 347.5 L677.5 344.1 L678.8 340.7 L680.0 337.4 L681.2 334.0 L682.3 330.6 L683.3 327.3 L684.3 323.9 L685.2 320.6 L686.0 317.3 L686.8 313.9 L687.5 310.6 L688.1 307.3 L688.7 304.0 L689.2 300.7 L689.6 297.4 L690.0 294.2 L690.3 290.9 L690.6 287.7 L690.7 284.4 L690.9 281.2 L690.9 278.0 L691.0 274.9 L690.9 271.7 L690.8 268.5 L690.6 265.4 L690.4 262.3 L690.1 259.2 L689.8 256.1 L689.4 253.0 L688.9 250.0 L688.4 247.0 L687.9 244.0 L687.2 241.0 L686.6 238.0 L685.8 235.1 L685.1 232.2 L684.2 229.3 L683.4 226.4 L682.4 223.5 L681.4 220.7 L680.4 217.9 L679.3 215.1 L678.2 212.4 L677.0 209.6 L675.8 206.9 L674.5 204.2 L673.2 201.6 L671.9 198.9 L670.5 196.3 L669.0 193.7 L667.5 191.2 L666.0 188.6 L664.4 186.1 L662.8 183.6 L661.1 181.2 L659.4 178.8 L657.7 176.4 L655.9 174.0 L654.1 171.6 L652.3 169.3 L650.4 167.0 L648.4 164.8 L646.5 162.5 L644.5 160.3 L642.4 158.1 L640.4 156.0 L638.3 153.8 L636.1 151.7 L633.9 149.7 L631.7 147.6 L629.5 145.6 L627.2 143.6 L624.9 141.7 L622.6 139.8 L620.3 137.9 L617.9 136.0 L615.5 134.1 L613.0 132.3 L610.6 130.5 L608.1 128.8 L605.5 127.1 L603.0 125.4 L600.4 123.7 L597.8 122.1 L595.2 120.4 L592.5 118.9 L589.9 117.3 L587.2 115.8 L584.5 114.3 L581.7 112.8 L579.0 111.4 L576.2 110.0 L573.4 108.6 L570.5 107.2 L567.7 105.9 L564.8 104.6 L562.0 103.4 L559.1 102.1 L556.1 100.9 L553.2 99.7 L550.2 98.6 L547.3 97.5 L544.3 96.4 L541.3 95.3 L538.3 94.3 L535.2 93.2 L532.2 92.3 L529.1 91.3 L526.0 90.4 L522.9 89.5 L519.8 88.6 L516.7 87.8 L513.6 87.0 L510.5 86.2 L507.3 85.4 L504.1 84.7 L500.9 84.0 L497.8 83.3 L494.6 82.7 L491.4 82.1 L488.1 81.5 L484.9 80.9 L481.7 80.4 L478.4 79.9 L475.2 79.4 L471.9 78.9 L468.6 78.5 L465.3 78.1 L462.1 77.8 L458.8 77.4 L455.5 77.1 L452.2 76.8 L448.8 76.5 L445.5 76.3 L442.4 76.1 L441.3 76.1 L440.4 76.2 L439.5 76.5 L438.9 76.9 L438.4 77.4 L438.0 78.1 L437.7 78.9 L437.3 79.9 L436.8 80.9 L436.4 82.0 L436.0 83.0 L435.6 84.0 L435.2 85.0 L434.8 86.0 L434.4 87.0 L434.0 88.1 L433.6 89.1 L433.1 90.1 L432.7 91.2 L432.3 92.2 L431.9 93.2 L431.5 94.3 L431.4 94.3 L431.3 94.6 L431.1 94.9 L430.8 95.0 L430.4 95.2 L430.0 95.2 L429.5 95.2 L428.1 95.1 L425.1 95.0 L422.1 94.9 L419.1 94.8 L416.1 94.8 L413.1 94.7 L410.1 94.7 L407.1 94.8 L404.1 94.8 L401.1 94.9 L398.1 94.9 L395.1 95.1 L392.0 95.2 L389.0 95.4 L386.0 95.5 L383.0 95.7 L380.0 96.0 L376.9 96.2 L373.9 96.5 L370.9 96.8 L367.9 97.1 L364.9 97.5 L361.9 97.9 L358.8 98.3 L355.8 98.7 L352.8 99.1 L349.8 99.6 L346.8 100.1 L343.8 100.6 L340.8 101.1 L337.8 101.7 L334.8 102.3 L331.8 102.9 L328.8 103.5 L325.8 104.1 L322.8 104.8 L319.9 105.5 L316.9 106.2 L313.9 107.0 L311.0 107.7 L308.0 108.5 L305.1 109.3 L302.1 110.2 L299.2 111.0 L296.3 111.9 L293.4 112.8 L290.5 113.7 L287.6 114.6 L284.7 115.6 L281.8 116.6 L278.9 117.6 L276.0 118.6 L273.2 119.7 L270.3 120.8 L267.5 121.9 L264.6 123.0 L261.8 124.1 L259.0 125.3 L256.2 126.5 L253.4 127.7 L250.7 128.9 L247.9 130.1 L245.1 131.4 L242.4 132.7 L239.7 134.0 L237.0 135.4 L234.3 136.7 L231.6 138.1 L228.9 139.5 L226.3 140.9 L223.6 142.3 L221.0 143.8 L218.4 145.3 L215.8 146.8 L213.2 148.3 L210.6 149.8 L208.1 151.4 L205.6 153.0 L203.0 154.6 L200.5 156.2 L198.1 157.8 L195.6 159.5 L193.2 161.2 L190.7 162.9 L188.3 164.6 L185.9 166.3 L183.6 168.1 L181.2 169.9 L178.9 171.7 L176.6 173.5 L174.3 175.3 L172.1 177.2 L169.8 179.1 L167.6 180.9 L165.4 182.9 L163.2 184.8 L161.1 186.7 L159.0 188.7 L156.9 190.7 L154.8 192.7 L152.7 194.7 L150.7 196.7 L148.7 198.8 L146.7 200.9 L144.8 202.9 L142.9 205.0 L141.0 207.2 L139.1 209.3 L137.3 211.5 L135.5 213.6 L133.7 215.8 L131.9 218.0 L130.2 220.2 L128.5 222.5 L126.9 224.7 L125.2 227.0 L123.6 229.3 L122.1 231.5 L120.5 233.9 L119.0 236.2 L117.5 238.5 L116.1 240.9 L114.7 243.2 L113.3 245.6 L112.0 248.0 L110.7 250.4 L109.4 252.8 L108.2 255.2 L107.0 257.7 L105.9 260.1 L104.7 262.6 L103.6 265.1 L102.6 267.5 L101.6 270.0 L100.6 272.5 L99.7 275.1 L98.8 277.6 L98.0 280.1 L97.2 282.7 L96.4 285.2 L95.7 287.8 L95.0 290.3 L94.3 292.9 L93.7 295.5 L93.2 298.1 L92.7 300.7 L92.2 303.3 L91.8 305.9 L91.4 308.5 L91.1 311.1 L90.8 313.7 L90.5 316.4 L90.3 319.0 L90.2 321.6 L90.1 324.3 L90.0 326.9 L90.0 329.5 L90.0 332.2 L90.1 334.7 L90.3 335.5 L90.6 336.1 L91.2 336.5 L91.9 336.7 L92.9 336.6 L94.1 336.4 L94.4 336.3 L96.5 335.7 L98.5 335.1 L100.6 334.6 L102.7 334.0 L104.8 333.4 L106.8 332.8 L108.9 332.3 L111.0 331.7 L113.0 331.1 L115.1 330.5 L117.2 330.0 L119.2 329.4 L121.3 328.8 L123.4 328.2 L125.4 327.7 L127.5 327.1 L127.6 327.0 L128.2 326.9 L128.7 326.9 L129.1 327.0 L129.4 327.2 L129.6 327.5 L129.7 327.9 L129.8 328.7 L130.1 331.0 L130.4 333.2 L130.8 335.4 L131.2 337.7 L131.6 339.9 L132.1 342.1 L132.7 344.3 L133.3 346.5 L133.9 348.7 L134.6 350.9 L135.3 353.1 L136.0 355.3 L136.9 357.5 L137.7 359.6 L138.6 361.8 L139.5 363.9 L140.5 366.1 L141.6 368.2 L142.6 370.3 L143.8 372.4 L144.9 374.5 L146.1 376.6 L147.4 378.7 L148.7 380.7 L150.0 382.8 L151.4 384.8 L152.9 386.8 L154.4 388.8 L155.9 390.8 L157.5 392.8 L159.1 394.7 L160.7 396.7 L162.5 398.6 L164.2 400.5 L166.0 402.4 L167.8 404.2 L169.7 406.0 L171.7 407.9 L173.6 409.7 L175.7 411.4 L177.7 413.2 L179.8 414.9 L182.0 416.6 L184.2 418.3 L186.4 420.0 L188.7 421.6 L191.0 423.2 L193.4 424.8 L195.8 426.4 L198.2 427.9 L200.7 429.4 L203.2 430.9 L205.8 432.3 L208.4 433.7 L211.0 435.1 L213.7 436.5 L216.4 437.8 L219.2 439.1 L221.9 440.4 L224.8 441.6 L227.6 442.8 L230.5 444.0 L233.5 445.1 L236.4 446.2 L239.4 447.3 L242.5 448.3 L245.5 449.3 L248.6 450.3 L251.7 451.2 L254.9 452.1 L258.1 453.0 L261.3 453.8 L264.5 454.6 L267.8 455.3 L271.1 456.0 L274.4 456.7 L277.8 457.3 L281.2 457.9 L284.6 458.5 L288.0 459.0 L291.4 459.5 L294.9 459.9 L298.3 460.3 L301.8 460.7 L305.4 461.0 L308.9 461.3 L312.4 461.6 L316.0 461.8 L319.6 461.9 L323.2 462.0 L326.8 462.1 L330.4 462.2 L334.0 462.2 L337.7 462.1 L341.3 462.0 L345.0 461.9 L348.7 461.7 L352.3 461.5 L356.0 461.3 L359.7 461.0 L363.4 460.7 L367.0 460.3 L370.7 459.9 L374.4 459.4 L378.1 458.9 L381.8 458.4 L385.4 457.8 L389.1 457.2 L392.8 456.5 L396.5 455.8 L400.1 455.1 L403.8 454.3 L407.4 453.5 L411.0 452.7 L414.6 451.8 L418.2 450.8 L421.8 449.9 L425.4 448.9 L429.0 447.8 L432.5 446.7 L436.1 445.6 L439.6 444.5 L443.1 443.3 L446.5 442.0 L450.0 440.8 L453.4 439.5 L456.9 438.1 L460.2 436.8 L463.6 435.4 L466.9 433.9 L470.3 432.5 L473.5 431.0 L476.8 429.4 L480.0 427.9 L483.2 426.3 L486.4 424.6 L489.6 423.0 L492.7 421.3 L495.8 419.6 L498.8 417.8 L501.8 416.1 L504.8 414.3 L507.8 412.4 L510.7 410.6 L513.5 408.7 L516.4 406.8 L519.2 404.9 L522.0 402.9 L524.7 400.9 L527.4 398.9 L530.0 396.9 L532.6 394.9 L535.2 392.8 L537.7 390.7 L540.2 388.6 L542.7 386.5 L545.1 384.3 L547.4 382.2 L548.3 381.3 L548.8 381.0 L549.3 380.7 L549.8 380.6 L550.3 380.6 L550.9 380.8 L551.4 381.1 L553.4 382.4 L557.1 384.7 L560.8 387.1 L564.5 389.5 L568.2 391.9 L572.0 394.3 L575.8 396.7 L579.6 399.1 L583.4 401.6 L587.2 404.0 L591.1 406.5 L595.0 409.0 L598.9 411.5 L602.8 414.0 L606.7 416.5 L610.7 419.1 L614.7 421.6 L618.3 424.0 L619.8 424.7 L621.1 425.2 L622.4 425.2 L623.6 425.0 L624.8 424.3 Z"/></clipPath>
<path d="M478.1 -6026.2 L-1126.8 378.2 M775.7 -6208.8 L2357.3 58.5 M165.8 -6996.9 L-1040.7 339.3 M1232.8 -7758.0 L2210.7 31.2 M-298.6 -8440.5 L-959.2 302.3 M2034.2 -10473.9 L2076.7 6.3 M-1062.2 -10814.2 L-881.9 267.3 M3803.8 -16471.2 L1953.8 -16.5 M-2551.5 -15443.2 L-808.4 234.0 M10973.5 -40770.4 L1840.7 -37.6 M-6736.5 -28451.7 L-738.5 202.3 M-23466.2 75950.4 L1736.2 -57.0 M-90763.8 -289636.3 L-671.9 172.2 M-6680.0 19059.6 L1639.3 -75.0 M12944.4 32723.1 L-608.3 143.4 M-4212.7 10697.6 L1549.4 -91.7 M7207.7 14891.4 L-547.7 115.9 M-3220.8 7335.9 L1465.6 -107.3 M5433.9 9378.0 L-489.7 89.7 M-2685.5 5521.7 L1387.4 -121.8 M4570.9 6695.5 L-434.2 64.5 M-2350.5 4386.4 L1314.2 -135.4 M4060.5 5108.9 L-381.1 40.5 M-2121.1 3609.0 L1245.5 -148.2 M3723.2 4060.7 L-330.2 17.4 M-1954.2 3043.3 L1181.0 -160.2 M3483.8 3316.4 L-281.4 -4.7 M-1827.3 2613.1 L1120.3 -171.5 M3305.0 2760.7 L-234.5 -25.9 M-1727.5 2275.0 L1063.0 -182.1 M3166.5 2330.0 L-189.4 -46.4 M-1647.1 2002.3 L1008.9 -192.2 M3055.9 1986.3 L-146.1 -66.0 M-1580.8 1777.7 L957.7 -201.7 M2965.6 1705.7 L-104.4 -84.9 M-1525.2 1589.5 L909.1 -210.7 M2890.5 1472.3 L-64.2 -103.1 M-1478.0 1429.4 L863.1 -219.3 M2827.1 1275.1 L-25.5 -120.6 M-1437.4 1291.7 L819.3 -227.4 M2772.8 1106.2 L11.8 -137.5 M-1402.0 1171.9 L777.7 -235.1 M2725.7 960.1 L47.8 -153.8 M-1371.0 1066.8 L738.0 -242.5 M2684.6 832.3 L82.6 -169.6 M-1343.6 973.8 L700.2 -249.5 M2648.4 719.7 L116.2 -184.8 M-1319.1 891.0 L664.1 -256.3 M2616.2 619.6 L148.7 -199.5 M-1297.2 816.7 L629.6 -262.7 M2587.4 530.1 L180.2 -213.8 M-1277.5 749.7 L596.6 -268.8 M2561.5 449.7 L210.6 -227.6 M-1259.6 689.0 L564.9 -274.7 M2538.1 376.9 L240.0 -240.9 M-1243.2 633.7 L534.6 -280.3 M2516.8 310.8 L268.6 -253.8 M-1228.3 583.2 L505.6 -285.7 M2497.4 250.4 L296.3 -266.4 M-1214.6 536.8 L477.7 -290.9 M2479.6 195.1 L323.1 -278.5 M-1202.0 494.1 L450.8 -295.9 M2463.3 144.3 L349.1 -290.3 M-1190.4 454.6 L425.0 -300.7 M2448.2 97.3 L374.4 -301.8 M-1179.6 418.0 L400.2 -305.3" stroke="#000" stroke-opacity="0.05" stroke-width="0.8" fill="none" clip-path="url(#fc)"/>
<line x1="-1580.8" y1="1777.7" x2="957.7" y2="-201.7" stroke="#d06060" stroke-opacity="0.45" stroke-width="0.7" clip-path="url(#fc)"/>
<line x1="3055.9" y1="1986.3" x2="-146.1" y2="-66.0" stroke="#60d060" stroke-opacity="0.6" stroke-width="0.75" clip-path="url(#fc)"/>
<path d="M625.9 423.4 L628.7 420.4 L631.5 417.2 L634.3 414.0 L637.1 410.8 L639.8 407.6 L642.4 404.3 L644.9 401.0 L647.4 397.7 L649.8 394.4 L652.1 391.1 L654.4 387.8 L656.6 384.5 L658.7 381.1 L660.7 377.8 L662.7 374.4 L664.6 371.1 L666.5 367.7 L668.3 364.3 L670.0 361.0 L671.6 357.6 L673.2 354.2 L674.7 350.9 L676.1 347.5 L677.5 344.1 L678.8 340.7 L680.0 337.4 L681.2 334.0 L682.3 330.6 L683.3 327.3 L684.3 323.9 L685.2 320.6 L686.0 317.3 L686.8 313.9 L687.5 310.6 L688.1 307.3 L688.7 304.0 L689.2 300.7 L689.6 297.4 L690.0 294.2 L690.3 290.9 L690.6 287.7 L690.7 284.4 L690.9 281.2 L690.9 278.0 L691.0 274.9 L690.9 271.7 L690.8 268.5 L690.6 265.4 L690.4 262.3 L690.1 259.2 L689.8 256.1 L689.4 253.0 L688.9 250.0 L688.4 247.0 L687.9 244.0 L687.2 241.0 L686.6 238.0 L685.8 235.1 L685.1 232.2 L684.2 229.3 L683.4 226.4 L682.4 223.5 L681.4 220.7 L680.4 217.9 L679.3 215.1 L678.2 212.4 L677.0 209.6 L675.8 206.9 L674.5 204.2 L673.2 201.6 L671.9 198.9 L670.5 196.3 L669.0 193.7 L667.5 191.2 L666.0 188.6 L664.4 186.1 L662.8 183.6 L661.1 181.2 L659.4 178.8 L657.7 176.4 L655.9 174.0 L654.1 171.6 L652.3 169.3 L650.4 167.0 L648.4 164.8 L646.5 162.5 L644.5 160.3 L642.4 158.1 L640.4 156.0 L638.3 153.8 L636.1 151.7 L633.9 149.7 L631.7 147.6 L629.5 145.6 L627.2 143.6 L624.9 141.7 L622.6 139.8 L620.3 137.9 L617.9 136.0 L615.5 134.1 L613.0 132.3 L610.6 130.5 L608.1 128.8 L605.5 127.1 L603.0 125.4 L600.4 123.7 L597.8 122.1 L595.2 120.4 L592.5 118.9 L589.9 117.3 L587.2 115.8 L584.5 114.3 L581.7 112.8 L579.0 111.4 L576.2 110.0 L573.4 108.6 L570.5 107.2 L567.7 105.9 L564.8 104.6 L562.0 103.4 L559.1 102.1 L556.1 100.9 L553.2 99.7 L550.2 98.6 L547.3 97.5 L544.3 96.4 L541.3 95.3 L538.3 94.3 L535.2 93.2 L532.2 92.3 L529.1 91.3 L526.0 90.4 L522.9 89.5 L519.8 88.6 L516.7 87.8 L513.6 87.0 L510.5 86.2 L507.3 85.4 L504.1 84.7 L500.9 84.0 L497.8 83.3 L494.6 82.7 L491.4 82.1 L488.1 81.5 L484.9 80.9 L481.7 80.4 L478.4 79.9 L475.2 79.4 L471.9 78.9 L468.6 78.5 L465.3 78.1 L462.1 77.8 L458.8 77.4 L455.5 77.1 L452.2 76.8 L448.8 76.5 L445.5 76.3 L442.4 76.1 L441.3 76.1 L440.4 76.2 L439.5 76.5 L438.9 76.9 L438.4 77.4 L438.0 78.1 L437.7 78.9 L437.3 79.9 L436.8 80.9 L436.4 82.0 L436.0 83.0 L435.6 84.0 L435.2 85.0 L434.8 86.0 L434.4 87.0 L434.0 88.1 L433.6 89.1 L433.1 90.1 L432.7 91.2 L432.3 92.2 L431.9 93.2 L431.5 94.3 L431.4 94.3 L431.3 94.6 L431.1 94.9 L430.8 95.0 L430.4 95.2 L430.0 95.2 L429.5 95.2 L428.1 95.1 L425.1 95.0 L422.1 94.9 L419.1 94.8 L416.1 94.8 L413.1 94.7 L410.1 94.7 L407.1 94.8 L404.1 94.8 L401.1 94.9 L398.1 94.9 L395.1 95.1 L392.0 95.2 L389.0 95.4 L386.0 95.5 L383.0 95.7 L380.0 96.0 L376.9 96.2 L373.9 96.5 L370.9 96.8 L367.9 97.1 L364.9 97.5 L361.9 97.9 L358.8 98.3 L355.8 98.7 L352.8 99.1 L349.8 99.6 L346.8 100.1 L343.8 100.6 L340.8 101.1 L337.8 101.7 L334.8 102.3 L331.8 102.9 L328.8 103.5 L325.8 104.1 L322.8 104.8 L319.9 105.5 L316.9 106.2 L313.9 107.0 L311.0 107.7 L308.0 108.5 L305.1 109.3 L302.1 110.2 L299.2 111.0 L296.3 111.9 L293.4 112.8 L290.5 113.7 L287.6 114.6 L284.7 115.6 L281.8 116.6 L278.9 117.6 L276.0 118.6 L273.2 119.7 L270.3 120.8 L267.5 121.9 L264.6 123.0 L261.8 124.1 L259.0 125.3 L256.2 126.5 L253.4 127.7 L250.7 128.9 L247.9 130.1 L245.1 131.4 L242.4 132.7 L239.7 134.0 L237.0 135.4 L234.3 136.7 L231.6 138.1 L228.9 139.5 L226.3 140.9 L223.6 142.3 L221.0 143.8 L218.4 145.3 L215.8 146.8 L213.2 148.3 L210.6 149.8 L208.1 151.4 L205.6 153.0 L203.0 154.6 L200.5 156.2 L198.1 157.8 L195.6 159.5 L193.2 161.2 L190.7 162.9 L188.3 164.6 L185.9 166.3 L183.6 168.1 L181.2 169.9 L178.9 171.7 L176.6 173.5 L174.3 175.3 L172.1 177.2 L169.8 179.1 L167.6 180.9 L165.4 182.9 L163.2 184.8 L161.1 186.7 L159.0 188.7 L156.9 190.7 L154.8 192.7 L152.7 194.7 L150.7 196.7 L148.7 198.8 L146.7 200.9 L144.8 202.9 L142.9 205.0 L141.0 207.2 L139.1 209.3 L137.3 211.5 L135.5 213.6 L133.7 215.8 L131.9 218.0 L130.2 220.2 L128.5 222.5 L126.9 224.7 L125.2 227.0 L123.6 229.3 L122.1 231.5 L120.5 233.9 L119.0 236.2 L117.5 238.5 L116.1 240.9 L114.7 243.2 L113.3 245.6 L112.0 248.0 L110.7 250.4 L109.4 252.8 L108.2 255.2 L107.0 257.7 L105.9 260.1 L104.7 262.6 L103.6 265.1 L102.6 267.5 L101.6 270.0 L100.6 272.5 L99.7 275.1 L98.8 277.6 L98.0 280.1 L97.2 282.7 L96.4 285.2 L95.7 287.8 L95.0 290.3 L94.3 292.9 L93.7 295.5 L93.2 298.1 L92.7 300.7 L92.2 303.3 L91.8 305.9 L91.4 308.5 L91.1 311.1 L90.8 313.7 L90.5 316.4 L90.3 319.0 L90.2 321.6 L90.1 324.3 L90.0 326.9 L90.0 329.5 L90.0 332.2 L90.1 334.7 L90.3 335.5 L90.6 336.1 L91.2 336.5 L91.9 336.7 L92.9 336.6 L94.1 336.4 L94.4 336.3 L96.5 335.7 L98.5 335.1 L100.6 334.6 L102.7 334.0 L104.8 333.4 L106.8 332.8 L108.9 332.3 L111.0 331.7 L113.0 331.1 L115.1 330.5 L117.2 330.0 L119.2 329.4 L121.3 328.8 L123.4 328.2 L125.4 327.7 L127.5 327.1 L127.6 327.0 L128.2 326.9 L128.7 326.9 L129.1 327.0 L129.4 327.2 L129.6 327.5 L129.7 327.9 L129.8 328.7 L130.1 331.0 L130.4 333.2 L130.8 335.4 L131.2 337.7 L131.6 339.9 L132.1 342.1 L132.7 344.3 L133.3 346.5 L133.9 348.7 L134.6 350.9 L135.3 353.1 L136.0 355.3 L136.9 357.5 L137.7 359.6 L138.6 361.8 L139.5 363.9 L140.5 366.1 L141.6 368.2 L142.6 370.3 L143.8 372.4 L144.9 374.5 L146.1 376.6 L147.4 378.7 L148.7 380.7 L150.0 382.8 L151.4 384.8 L152.9 386.8 L154.4 388.8 L155.9 390.8 L157.5 392.8 L159.1 394.7 L160.7 396.7 L162.5 398.6 L164.2 400.5 L166.0 402.4 L167.8 404.2 L169.7 406.0 L171.7 407.9 L173.6 409.7 L175.7 411.4 L177.7 413.2 L179.8 414.9 L182.0 416.6 L184.2 418.3 L186.4 420.0 L188.7 421.6 L191.0 423.2 L193.4 424.8 L195.8 426.4 L198.2 427.9 L200.7 429.4 L203.2 430.9 L205.8 432.3 L208.4 433.7 L211.0 435.1 L213.7 436.5 L216.4 437.8 L219.2 439.1 L221.9 440.4 L224.8 441.6 L227.6 442.8 L230.5 444.0 L233.5 445.1 L236.4 446.2 L239.4 447.3 L242.5 448.3 L245.5 449.3 L248.6 450.3 L251.7 451.2 L254.9 452.1 L258.1 453.0 L261.3 453.8 L264.5 454.6 L267.8 455.3 L271.1 456.0 L274.4 456.7 L277.8 457.3 L281.2 457.9 L284.6 458.5 L288.0 459.0 L291.4 459.5 L294.9 459.9 L298.3 460.3 L301.8 460.7 L305.4 461.0 L308.9 461.3 L312.4 461.6 L316.0 461.8 L319.6 461.9 L323.2 462.0 L326.8 462.1 L330.4 462.2 L334.0 462.2 L337.7 462.1 L341.3 462.0 L345.0 461.9 L348.7 461.7 L352.3 461.5 L356.0 461.3 L359.7 461.0 L363.4 460.7 L367.0 460.3 L370.7 459.9 L374.4 459.4 L378.1 458.9 L381.8 458.4 L385.4 457.8 L389.1 457.2 L392.8 456.5 L396.5 455.8 L400.1 455.1 L403.8 454.3 L407.4 453.5 L411.0 452.7 L414.6 451.8 L418.2 450.8 L421.8 449.9 L425.4 448.9 L429.0 447.8 L432.5 446.7 L436.1 445.6 L439.6 444.5 L443.1 443.3 L446.5 442.0 L450.0 440.8 L453.4 439.5 L456.9 438.1 L460.2 436.8 L463.6 435.4 L466.9 433.9 L470.3 432.5 L473.5 431.0 L476.8 429.4 L480.0 427.9 L483.2 426.3 L486.4 424.6 L489.6 423.0 L492.7 421.3 L495.8 419.6 L498.8 417.8 L501.8 416.1 L504.8 414.3 L507.8 412.4 L510.7 410.6 L513.5 408.7 L516.4 406.8 L519.2 404.9 L522.0 402.9 L524.7 400.9 L527.4 398.9 L530.0 396.9 L532.6 394.9 L535.2 392.8 L537.7 390.7 L540.2 388.6 L542.7 386.5 L545.1 384.3 L547.4 382.2 L548.3 381.3 L548.8 381.0 L549.3 380.7 L549.8 380.6 L550.3 380.6 L550.9 380.8 L551.4 381.1 L553.4 382.4 L557.1 384.7 L560.8 387.1 L564.5 389.5 L568.2 391.9 L572.0 394.3 L575.8 396.7 L579.6 399.1 L583.4 401.6 L587.2 404.0 L591.1 406.5 L595.0 409.0 L598.9 411.5 L602.8 414.0 L606.7 416.5 L610.7 419.1 L614.7 421.6 L618.3 424.0 L619.8 424.7 L621.1 425.2 L622.4 425.2 L623.6 425.0 L624.8 424.3 Z" fill="none" stroke="#101212" stroke-width="1"/>
<path d="M668.4 195.8 L665.4 190.6 L662.3 185.6 L659.0 180.7 L655.5 175.9 L651.8 171.2 L648.0 166.6 L644.1 162.1 L640.0 157.7 L635.8 153.4 L631.4 149.3 L626.9 145.3 L622.3 141.3 L617.6 137.5 L612.7 133.9 L607.7 130.3 L602.7 126.9 L597.5 123.5 L592.2 120.3 L586.8 117.2 L581.4 114.2 L575.8 111.4 L570.2 108.6 L564.5 106.0 L558.7 103.5 L552.8 101.1 L546.9 98.8 L540.9 96.6 L534.8 94.6 L528.7 92.7 L522.5 90.8 L516.2 89.1 L510.0 87.5 L503.6 86.1 L497.2 84.7 L490.8 83.4 L484.4 82.3 L477.9 81.3 L471.3 80.4 L464.8 79.5 L458.2 78.8 L451.6 78.3 L444.9 77.8 L438.3 77.4 M430.5 96.8 L424.5 96.5 L418.6 96.4 L412.6 96.3 L406.6 96.3 L400.6 96.4 L394.6 96.6 L388.6 96.9 L382.6 97.3 L376.6 97.8 L370.6 98.4 L364.6 99.1 L358.6 99.9 L352.6 100.8 L346.6 101.7 L340.6 102.8 L334.7 103.9 L328.7 105.1 L322.8 106.5 L316.9 107.9 L311.0 109.4 L305.1 111.0 L299.3 112.6 L293.5 114.4 L287.7 116.3 L282.0 118.2 L276.2 120.2 L270.6 122.3 L264.9 124.5 L259.3 126.8 L253.8 129.2 L248.2 131.7 L242.8 134.2 L237.4 136.8 L232.0 139.6 L226.7 142.4 L221.4 145.2 L216.2 148.2 L211.1 151.3 L206.1 154.4 L201.1 157.6 L196.1 160.9 L191.3 164.3 L186.5 167.7 L181.8 171.2 L177.2 174.9 L172.7 178.5 L168.2 182.3 L163.9 186.1 L159.6 190.0 L155.4 194.0 L151.4 198.1 L147.4 202.2 L143.6 206.4 L139.8 210.6 L136.2 215.0 L132.7 219.3 L129.3 223.8 L126.0 228.3 L122.9 232.9 L119.9 237.5 L117.0 242.2 L114.2 246.9 L111.6 251.7 L109.2 256.6 L106.8 261.5 L104.7 266.4 L102.6 271.4 L100.8 276.4 L99.1 281.5 L97.5 286.6 L96.2 291.7 L95.0 296.9 L94.0 302.0 L93.1 307.2 L92.4 312.5 L92.0 317.7 L91.7 323.0 L91.5 328.3 L91.6 333.5" fill="none" stroke="#f2f2f2" stroke-width="0.9"/><path d="M629.2 417.5 L634.8 411.0 L640.2 404.5 L645.3 397.9 L650.1 391.3 L654.6 384.6 L658.8 377.9 L662.8 371.2 L666.4 364.4 L669.8 357.7 L672.9 350.9 L675.8 344.1 L678.3 337.3 L680.6 330.6 L682.6 323.9 L684.4 317.1 L685.9 310.5 L687.1 303.8 L688.0 297.2 L688.7 290.7 L689.2 284.2 L689.4 277.7 L689.3 271.4 L689.0 265.1 L688.5 258.8 L687.7 252.6 L686.7 246.6 L685.5 240.6 L684.1 234.6 L682.5 228.8 L680.6 223.1 L678.6 217.4 L676.3 211.8 L673.9 206.4 L671.2 201.0 L668.4 195.8" fill="none" stroke="#a0a5a2" stroke-width="0.9"/>
<path d="M627.7 416.6 L633.3 410.2 L638.7 403.8 L643.7 397.2 L648.5 390.6 L653.0 384.0 L657.2 377.3 L661.1 370.7 L664.8 363.9 L668.2 357.2 L671.3 350.5 L674.1 343.7 L676.7 337.0 L678.9 330.3 L680.9 323.6 L682.7 316.9 L684.2 310.3 L685.4 303.7 L686.3 297.2 L687.0 290.6 L687.5 284.2 L687.7 277.8 L687.6 271.4 L687.3 265.2 L686.8 259.0 L686.0 252.8 L685.1 246.8 L683.9 240.8 L682.4 234.9 L680.8 229.1 L679.0 223.4 L676.9 217.8 L674.7 212.3 L672.3 206.9 L669.7 201.5 L666.9 196.3 L663.9 191.2 L660.7 186.2 L657.4 181.3 L653.9 176.5 L650.3 171.8 L646.5 167.2 L642.6 162.8 L638.5 158.4 L634.3 154.2 L629.9 150.1 L625.5 146.0 L620.9 142.2 L616.1 138.4 L611.3 134.7 L606.3 131.2 L601.3 127.8 L596.1 124.5 L590.9 121.3 L585.5 118.2 L580.1 115.2 L574.5 112.4 L568.9 109.7 L563.2 107.1 L557.4 104.6 L551.6 102.2 L545.7 100.0 L539.7 97.8 L533.6 95.8 L527.5 93.9 L521.4 92.1 L515.2 90.4 L508.9 88.9 L502.6 87.4 L496.3 86.1 L489.9 84.8 L483.4 83.7 L477.0 82.7 L470.5 81.8 L464.0 81.0 L457.4 80.4 L450.8 79.8 L444.3 79.3 L437.6 79.0 M429.8 98.4 L423.9 98.1 L418.0 98.0 L412.1 97.9 L406.2 97.9 L400.3 98.1 L394.3 98.3 L388.4 98.6 L382.4 99.0 L376.5 99.5 L370.5 100.1 L364.6 100.8 L358.6 101.6 L352.7 102.5 L346.8 103.4 L340.9 104.5 L335.0 105.6 L329.1 106.8 L323.2 108.1 L317.4 109.5 L311.6 111.0 L305.8 112.5 L300.0 114.2 L294.2 115.9 L288.5 117.8 L282.8 119.7 L277.1 121.7 L271.5 123.8 L265.9 125.9 L260.4 128.2 L254.9 130.5 L249.4 132.9 L244.0 135.4 L238.6 138.0 L233.3 140.7 L228.0 143.5 L222.8 146.3 L217.6 149.2 L212.5 152.3 L207.5 155.3 L202.5 158.5 L197.6 161.8 L192.8 165.1 L188.0 168.5 L183.3 172.0 L178.7 175.6 L174.2 179.2 L169.8 182.9 L165.5 186.7 L161.2 190.6 L157.1 194.5 L153.0 198.5 L149.1 202.6 L145.2 206.8 L141.5 211.0 L137.9 215.3 L134.4 219.6 L131.0 224.1 L127.7 228.5 L124.6 233.1 L121.6 237.7 L118.7 242.3 L115.9 247.0 L113.3 251.8 L110.9 256.6 L108.5 261.5 L106.4 266.4 L104.3 271.3 L102.5 276.3 L100.8 281.3 L99.2 286.4 L97.9 291.5 L96.7 296.6 L95.6 301.8 L94.8 307.0 L94.1 312.2 L93.6 317.4 L93.3 322.6 L93.2 327.8 L93.3 333.1 M133.3 328.5 L133.9 332.9 L134.7 337.3 L135.7 341.6 L136.8 346.0 L138.1 350.3 L139.6 354.6 L141.3 358.9 L143.1 363.1 L145.1 367.3 L147.3 371.5 L149.7 375.6 L152.3 379.7 L155.0 383.7 L157.9 387.6 L161.0 391.5 L164.3 395.3 L167.7 399.0 L171.4 402.7 L175.2 406.3 L179.1 409.8 L183.3 413.2 L187.6 416.5 L192.1 419.7 L196.7 422.8 L201.5 425.8 L206.5 428.7 L211.6 431.5 L216.9 434.2 L222.3 436.7 L227.9 439.1 L233.6 441.4 L239.5 443.6 L245.4 445.6 L251.5 447.5 L257.7 449.3 L264.1 450.9 L270.5 452.3 L277.0 453.6 L283.7 454.8 L290.4 455.8 L297.2 456.7 L304.1 457.4 L311.0 457.9 L318.0 458.3 L325.1 458.5 L332.2 458.6 L339.4 458.5 L346.5 458.3 L353.7 457.9 L361.0 457.3 L368.2 456.6 L375.4 455.7 L382.7 454.6 L389.9 453.4 L397.1 452.1 L404.2 450.5 L411.4 448.9 L418.4 447.1 L425.5 445.1 L432.4 443.0 L439.4 440.7 L446.2 438.4 L452.9 435.8 L459.6 433.2 L466.2 430.4 L472.7 427.4 L479.0 424.4 L485.3 421.2 L491.4 417.9 L497.5 414.5 L503.3 411.0 L509.1 407.4 L514.7 403.7 L520.2 399.9 L525.5 395.9 L530.7 392.0 L535.7 387.9 L540.5 383.7" fill="none" stroke="#1c1f1f" stroke-width="0.9"/>
<clipPath id="hc"><path d="M393.0 238.6 L390.5 237.2 L387.8 236.0 L384.9 235.0 L381.9 234.2 L378.7 233.6 L375.5 233.2 L372.1 232.9 L368.7 233.0 L365.3 233.2 L361.9 233.6 L358.5 234.2 L355.1 235.0 L351.9 236.0 L348.6 237.2 L345.5 238.6 L342.6 240.2 L339.8 241.9 L337.1 243.7 L334.7 245.7 L332.5 247.8 L330.5 250.1 L328.7 252.4 L327.2 254.8 L326.0 257.2 L325.1 259.7 L324.4 262.2 L324.1 264.7 L324.0 267.2 L324.3 269.6 L324.8 272.1 L325.7 274.4 L326.9 276.6 L328.3 278.8 L330.1 280.8 L332.1 282.6 L334.4 284.3 L336.9 285.9 L339.6 287.2 L342.6 288.3 L345.7 289.3 L348.9 290.0 L352.3 290.5 L355.8 290.7 L359.4 290.8 L363.0 290.6 L366.6 290.1 L370.2 289.5 L373.7 288.6 L377.2 287.5 L380.6 286.2 L383.8 284.7 L386.9 283.0 L389.8 281.2 L392.5 279.2 L394.9 277.1 L397.1 274.8 L399.1 272.5 L400.7 270.0 L402.1 267.6 L403.2 265.0 L404.0 262.5 L404.4 260.0 L404.6 257.4 L404.4 255.0 L404.0 252.5 L403.2 250.2 L402.2 247.9 L400.9 245.8 L399.3 243.8 L397.4 241.9 L395.3 240.2 Z"/></clipPath>
<linearGradient id="hg" x1="0" y1="0" x2="1" y2="0"><stop offset="0" stop-color="#5d6260"/><stop offset="0.5" stop-color="#a9aba6"/><stop offset="1" stop-color="#6a6e6b"/></linearGradient>
<path d="M393.0 238.6 L390.5 237.2 L387.8 236.0 L384.9 235.0 L381.9 234.2 L378.7 233.6 L375.5 233.2 L372.1 232.9 L368.7 233.0 L365.3 233.2 L361.9 233.6 L358.5 234.2 L355.1 235.0 L351.9 236.0 L348.6 237.2 L345.5 238.6 L342.6 240.2 L339.8 241.9 L337.1 243.7 L334.7 245.7 L332.5 247.8 L330.5 250.1 L328.7 252.4 L327.2 254.8 L326.0 257.2 L325.1 259.7 L324.4 262.2 L324.1 264.7 L324.0 267.2 L324.3 269.6 L324.8 272.1 L325.7 274.4 L326.9 276.6 L328.3 278.8 L330.1 280.8 L332.1 282.6 L334.4 284.3 L336.9 285.9 L339.6 287.2 L342.6 288.3 L345.7 289.3 L348.9 290.0 L352.3 290.5 L355.8 290.7 L359.4 290.8 L363.0 290.6 L366.6 290.1 L370.2 289.5 L373.7 288.6 L377.2 287.5 L380.6 286.2 L383.8 284.7 L386.9 283.0 L389.8 281.2 L392.5 279.2 L394.9 277.1 L397.1 274.8 L399.1 272.5 L400.7 270.0 L402.1 267.6 L403.2 265.0 L404.0 262.5 L404.4 260.0 L404.6 257.4 L404.4 255.0 L404.0 252.5 L403.2 250.2 L402.2 247.9 L400.9 245.8 L399.3 243.8 L397.4 241.9 L395.3 240.2 Z" fill="url(#hg)"/>
<path d="M395.6 251.9 L393.1 250.5 L390.4 249.3 L387.6 248.2 L384.6 247.4 L381.5 246.8 L378.2 246.4 L375.0 246.2 L371.6 246.2 L368.2 246.4 L364.9 246.8 L361.5 247.4 L358.2 248.2 L354.9 249.2 L351.8 250.4 L348.7 251.8 L345.8 253.3 L343.0 255.0 L340.4 256.9 L338.0 258.9 L335.8 261.0 L333.9 263.2 L332.1 265.5 L330.7 267.9 L329.5 270.3 L328.5 272.8 L327.9 275.3 L327.6 277.8 L327.5 280.3 L327.8 282.8 L328.4 285.2 L329.2 287.5 L330.4 289.7 L331.8 291.9 L333.6 293.9 L335.6 295.7 L337.8 297.4 L340.3 299.0 L343.0 300.3 L345.9 301.5 L349.0 302.4 L352.2 303.1 L355.6 303.6 L359.0 303.9 L362.5 304.0 L366.1 303.8 L369.7 303.3 L373.2 302.7 L376.7 301.8 L380.1 300.7 L383.4 299.4 L386.6 297.9 L389.7 296.3 L392.5 294.4 L395.2 292.4 L397.6 290.3 L399.7 288.1 L401.7 285.7 L403.3 283.3 L404.7 280.8 L405.7 278.3 L406.5 275.8 L406.9 273.2 L407.1 270.7 L406.9 268.2 L406.5 265.8 L405.7 263.5 L404.7 261.2 L403.4 259.1 L401.8 257.1 L400.0 255.2 L397.9 253.4 Z" fill="#f6f8fa" clip-path="url(#hc)"/>
<path d="M424.1 -6194.0 L-1109.2 370.3 M850.7 -6463.0 L2326.9 52.8 M366.4 -6373.6 L-1091.8 362.4 M932.8 -6741.1 L2297.1 47.3 M304.4 -6566.3 L-1074.6 354.6 M1022.9 -7046.6 L2267.7 41.8 M237.7 -6773.5 L-1057.6 346.9 M1122.4 -7383.8 L2239.0 36.5 M88.1 -7238.5 L-1024.1 331.7 M1356.0 -8175.4 L2182.9 26.1 M3.8 -7500.7 L-1007.6 324.3 M1494.3 -8644.1 L2155.7 21.0 M-88.1 -7786.2 L-991.3 316.9 M1650.7 -9174.2 L2128.9 16.0 M-188.4 -8098.2 L-975.2 309.6 M1829.0 -9778.5 L2102.6 11.1 M-420.0 -8818.0 L-943.4 295.2 M2272.8 -11282.6 L2051.3 1.6 M-554.6 -9236.2 L-927.8 288.1 M2553.7 -12234.7 L2026.3 -3.1 M-704.5 -9702.2 L-912.4 281.1 M2889.3 -13372.0 L2001.7 -7.6 M-872.5 -10224.5 L-897.0 274.2 M3297.2 -14754.6 L1977.6 -12.1 M-1278.0 -11485.0 L-866.9 260.5 M4449.5 -18659.7 L1930.4 -20.9 M-1525.8 -12255.0 L-852.0 253.8 M5300.9 -21545.5 L1907.4 -25.1 M-1813.1 -13148.0 L-837.4 247.1 M6475.1 -25525.0 L1884.8 -29.4 M-2150.2 -14196.0 L-822.8 240.5 M8198.4 -31365.4 L1862.6 -33.5 M-3036.9 -16952.2 L-794.1 227.6 M16186.1 -58436.7 L1819.1 -41.6 M-3636.3 -18815.3 L-780.0 221.2 M29563.2 -103773.5 L1797.9 -45.5 M-4395.0 -21173.6 L-766.0 214.8 M139560.9 -476571.4 L1777.0 -49.4 M-5386.3 -24254.9 L-752.2 208.5 M-54680.4 181739.8 L1756.4 -53.2 M-8683.6 -34503.8 L-724.9 196.2 M-15177.4 47858.7 L1716.2 -60.7 M-11735.6 -43990.6 L-711.4 190.1 M-11341.3 34857.5 L1696.6 -64.3 M-17206.0 -60994.1 L-698.1 184.1 M-9129.6 27361.7 L1677.2 -67.9 M-29854.4 -100309.6 L-684.9 178.1 M-7690.8 22485.3 L1658.1 -71.5 M104338.4 316805.6 L-658.9 166.3 M-5931.0 16521.0 L1620.8 -78.4 M35044.6 101417.9 L-646.1 160.5 M-5353.7 14564.5 L1602.6 -81.8 M21727.0 60022.2 L-633.4 154.7 M-4895.1 13010.4 L1584.6 -85.2 M16072.3 42445.7 L-620.8 149.0 M-4522.1 11746.2 L1566.9 -88.5 M10959.0 26551.6 L-596.0 137.8 M-3951.9 9813.9 L1532.2 -94.9 M9586.7 22286.2 L-583.7 132.2 M-3729.2 9059.0 L1515.2 -98.1 M8581.5 19161.8 L-571.6 126.8 M-3536.7 8406.6 L1498.4 -101.2 M7813.6 16774.7 L-559.6 121.3 M-3368.7 7837.2 L1481.9 -104.2 M6717.5 13367.7 L-535.9 110.6 M-3089.6 6891.2 L1449.6 -110.3 M6312.7 12109.5 L-524.2 105.3 M-2972.4 6494.0 L1433.7 -113.2 M5972.8 11053.1 L-512.6 100.0 M-2867.0 6137.0 L1418.1 -116.1 M5683.4 10153.4 L-501.1 94.8 M-2771.9 5814.5 L1402.6 -119.0 M5216.7 8702.8 L-478.4 84.5 M-2606.7 5254.7 L1372.4 -124.6 M5025.9 8109.6 L-467.2 79.5 M-2534.6 5010.2 L1357.5 -127.4 M4856.8 7584.3 L-456.1 74.4 M-2468.2 4785.4 L1342.9 -130.1 M4706.1 7115.8 L-445.1 69.5 M-2407.1 4578.2 L1328.5 -132.8 M4448.9 6316.2 L-423.4 59.6 M-2298.0 4208.5 L1300.1 -138.0 M4338.2 5972.2 L-412.7 54.8 M-2249.2 4043.0 L1286.2 -140.6 M4237.4 5658.9 L-402.1 50.0 M-2203.6 3888.6 L1272.5 -143.2 M4145.2 5372.2 L-391.6 45.2 M-2161.0 3744.2 L1258.9 -145.7 M3982.4 4866.4 L-370.8 35.8 M-2083.7 3482.0 L1232.3 -150.6 M3910.3 4642.1 L-360.5 31.1 M-2048.4 3362.6 L1219.3 -153.1 M3843.4 4434.2 L-350.3 26.5 M-2015.2 3250.0 L1206.4 -155.5 M3781.2 4240.9 L-340.2 21.9 M-1983.8 3143.7 L1193.6 -157.8 M3669.1 3892.3 L-320.3 12.9 M-1926.1 2948.1 L1168.6 -162.5 M3618.3 3734.6 L-310.4 8.5 M-1899.5 2857.9 L1156.3 -164.8 M3570.7 3586.6 L-300.7 4.0 M-1874.2 2772.2 L1144.1 -167.0 M3526.0 3447.5 L-291.0 -0.4 M-1850.2 2690.7 L1132.1 -169.3 M3444.0 3192.8 L-271.9 -9.0 M-1805.5 2539.2 L1108.6 -173.6 M3406.4 3075.9 L-262.4 -13.3 M-1784.6 2468.6 L1097.0 -175.8 M3370.8 2965.2 L-253.0 -17.6 M-1764.8 2401.2 L1085.5 -177.9 M3337.1 2860.3 L-243.7 -21.8 M-1745.7 2336.7 L1074.2 -180.0 M3274.6 2666.1 L-225.3 -30.1 M-1710.1 2215.9 L1051.9 -184.2 M3245.6 2576.0 L-216.3 -34.2 M-1693.4 2159.2 L1041.0 -186.2 M3218.0 2490.1 L-207.2 -38.3 M-1677.3 2104.8 L1030.2 -188.2 M3191.6 2408.2 L-198.3 -42.3 M-1661.9 2052.6 L1019.5 -190.2 M3142.4 2255.2 L-180.6 -50.3 M-1632.8 1954.0 L998.4 -194.1 M3119.4 2183.6 L-171.9 -54.3 M-1619.1 1907.5 L988.0 -196.0 M3097.3 2115.1 L-163.2 -58.2 M-1605.8 1862.6 L977.8 -197.9 M3076.2 2049.4 L-154.6 -62.1 M-1593.1 1819.4 L967.7 -199.8 M3036.4 1925.7 L-137.6 -69.8 M-1568.9 1737.4 L947.7 -203.5 M3017.7 1867.5 L-129.2 -73.6 M-1557.4 1698.5 L937.9 -205.4 M2999.7 1811.5 L-120.9 -77.4 M-1546.3 1661.0 L928.2 -207.2 M2982.3 1757.6 L-112.6 -81.2 M-1535.6 1624.6 L918.6 -208.9 M2949.5 1655.7 L-96.2 -88.6 M-1515.2 1555.4 L899.7 -212.5 M2934.0 1607.4 L-88.2 -92.2 M-1505.5 1522.4 L890.4 -214.2 M2919.0 1560.8 L-80.1 -95.9 M-1496.0 1490.5 L881.2 -215.9 M2904.5 1515.8 L-72.1 -99.5 M-1486.9 1459.5 L872.1 -217.6 M2877.0 1430.2 L-56.4 -106.6 M-1469.4 1400.3 L854.1 -220.9 M2863.9 1389.5 L-48.6 -110.2 M-1461.1 1371.9 L845.3 -222.6 M2851.2 1350.2 L-40.8 -113.7 M-1452.9 1344.4 L836.6 -224.2 M2839.0 1312.0 L-33.2 -117.1 M-1445.1 1317.7 L827.9 -225.8 M2815.5 1239.2 L-18.0 -124.0 M-1429.9 1266.4 L810.8 -229.0 M2804.4 1204.5 L-10.4 -127.4 M-1422.7 1241.8 L802.4 -230.5 M2793.5 1170.8 L-3.0 -130.8 M-1415.6 1217.9 L794.1 -232.1 M2783.0 1138.0 L4.4 -134.2 M-1408.7 1194.6 L785.9 -233.6 M2762.8 1075.3 L19.1 -140.8 M-1395.5 1149.8 L769.6 -236.6 M2753.2 1045.3 L26.4 -144.1 M-1389.2 1128.3 L761.6 -238.1 M2743.8 1016.1 L33.6 -147.4 M-1383.0 1107.3 L753.7 -239.6 M2734.6 987.7 L40.7 -150.6 M-1376.9 1086.8 L745.8 -241.1 M2717.1 933.2 L54.9 -157.0 M-1365.3 1047.3 L730.3 -243.9 M2708.6 907.0 L61.9 -160.2 M-1359.7 1028.3 L722.7 -245.4 M2700.4 881.4 L68.9 -163.4 M-1354.2 1009.7 L715.1 -246.8 M2692.4 856.5 L75.8 -166.5 M-1348.8 991.6 L707.6 -248.2 M2677.0 808.6 L89.4 -172.7 M-1338.5 956.5 L692.8 -250.9 M2669.6 785.6 L96.2 -175.7 M-1333.5 939.6 L685.6 -252.3 M2662.4 763.1 L102.9 -178.8 M-1328.6 923.0 L678.3 -253.6 M2655.3 741.1 L109.6 -181.8 M-1323.8 906.8 L671.2 -254.9 M2641.6 698.7 L122.8 -187.8 M-1314.6 875.5 L657.1 -257.6 M2635.1 678.2 L129.4 -190.8 M-1310.1 860.3 L650.1 -258.9 M2628.6 658.2 L135.9 -193.7 M-1305.7 845.5 L643.2 -260.1 M2622.3 638.7 L142.3 -196.6 M-1301.4 830.9 L636.4 -261.4 M2610.2 600.9 L155.1 -202.4 M-1293.1 802.8 L622.9 -263.9 M2604.3 582.6 L161.4 -205.3 M-1289.1 789.1 L616.2 -265.2 M2598.5 564.8 L167.7 -208.1 M-1285.1 775.7 L609.6 -266.4 M2592.9 547.3 L174.0 -211.0 M-1281.3 762.6 L603.1 -267.6 M2582.0 513.4 L186.3 -216.6 M-1273.7 737.1 L590.1 -270.0 M2576.7 496.9 L192.5 -219.3 M-1270.1 724.7 L583.8 -271.2 M2571.6 480.9 L198.5 -222.1 M-1266.5 712.6 L577.4 -272.4 M2566.5 465.1 L204.6 -224.8 M-1263.0 700.7 L571.2 -273.5 M2556.7 434.5 L216.6 -230.3 M-1256.2 677.5 L558.8 -275.8 M2551.9 419.7 L222.5 -232.9 M-1252.8 666.3 L552.7 -277.0 M2547.2 405.1 L228.4 -235.6 M-1249.6 655.2 L546.6 -278.1 M2542.6 390.9 L234.2 -238.3 M-1246.4 644.4 L540.6 -279.2 M2533.7 363.2 L245.8 -243.5 M-1240.2 623.3 L528.7 -281.4 M2529.4 349.7 L251.6 -246.1 M-1237.1 613.0 L522.9 -282.5 M2525.1 336.5 L257.3 -248.7 M-1234.1 602.9 L517.1 -283.6 M2520.9 323.5 L263.0 -251.3 M-1231.2 593.0 L511.3 -284.7 M2512.8 298.3 L274.2 -256.4 M-1225.5 573.6 L499.9 -286.8 M2508.9 286.0 L279.8 -258.9 M-1222.7 564.2 L494.3 -287.8 M2505.0 273.9 L285.3 -261.4 M-1220.0 554.9 L488.7 -288.9 M2501.2 262.1 L290.8 -263.9 M-1217.3 545.8 L483.1 -289.9 M2493.7 239.0 L301.7 -268.8 M-1212.0 528.0 L472.2 -291.9 M2490.1 227.7 L307.1 -271.3 M-1209.5 519.3 L466.8 -292.9 M2486.6 216.7 L312.5 -273.7 M-1207.0 510.8 L461.4 -293.9 M2483.1 205.8 L317.8 -276.1 M-1204.5 502.4 L456.1 -294.9 M2476.3 184.6 L328.4 -280.9 M-1199.6 485.9 L445.6 -296.9 M2472.9 174.3 L333.6 -283.3 M-1197.3 477.9 L440.4 -297.8 M2469.7 164.1 L338.8 -285.6 M-1194.9 470.0 L435.2 -298.8 M2466.4 154.1 L344.0 -288.0 M-1192.6 462.3 L430.1 -299.7 M2460.2 134.6 L354.2 -292.6 M-1188.2 447.1 L420.0 -301.6 M2457.1 125.1 L359.3 -294.9 M-1186.0 439.6 L415.0 -302.6 M2454.1 115.7 L364.4 -297.2 M-1183.8 432.3 L410.0 -303.5 M2451.1 106.4 L369.4 -299.5 M-1181.7 425.1 L405.1 -304.4" stroke="#000" stroke-opacity="0.06" stroke-width="0.7" fill="none" clip-path="url(#hc)"/>
<path d="M393.4 240.8 L390.9 239.5 L388.2 238.3 L385.3 237.2 L382.3 236.4 L379.2 235.8 L375.9 235.4 L372.6 235.2 L369.2 235.2 L365.8 235.4 L362.4 235.8 L359.0 236.4 L355.7 237.2 L352.4 238.3 L349.2 239.5 L346.1 240.8 L343.1 242.4 L340.3 244.1 L337.7 246.0 L335.3 247.9 L333.0 250.1 L331.0 252.3 L329.3 254.6 L327.8 257.0 L326.6 259.4 L325.6 261.9 L325.0 264.4 L324.6 266.9 L324.6 269.4 L324.9 271.9 L325.4 274.3 L326.3 276.6 L327.5 278.8 L328.9 281.0 L330.7 283.0 L332.7 284.8 L335.0 286.5 L337.5 288.1 L340.2 289.4 L343.1 290.6 L346.2 291.5 L349.5 292.2 L352.9 292.7 L356.4 293.0 L359.9 293.0 L363.5 292.8 L367.1 292.4 L370.7 291.7 L374.2 290.8 L377.7 289.7 L381.1 288.4 L384.3 286.9 L387.3 285.3 L390.2 283.4 L392.9 281.4 L395.4 279.3 L397.6 277.1 L399.5 274.7 L401.2 272.3 L402.5 269.8 L403.6 267.3 L404.4 264.7 L404.9 262.2 L405.0 259.7 L404.9 257.2 L404.4 254.8 L403.7 252.4 L402.6 250.2 L401.3 248.0 L399.7 246.0 L397.8 244.1 L395.7 242.4 Z" fill="none" stroke="#1a1c1c" stroke-width="0.8" clip-path="url(#hc)"/>
<g clip-path="url(#hc)"><line x1="-1580.8" y1="1777.7" x2="957.7" y2="-201.7" stroke="#e05050" stroke-opacity="0.5" stroke-width="0.7"/><line x1="3055.9" y1="1986.3" x2="-146.1" y2="-66.0" stroke="#40c040" stroke-opacity="0.5" stroke-width="0.7"/></g>
<path d="M394.3 237.6 L391.7 236.1 L388.8 234.9 L385.8 233.8 L382.7 233.0 L379.4 232.3 L376.0 231.9 L372.5 231.7 L368.9 231.7 L365.4 231.9 L361.8 232.3 L358.3 233.0 L354.7 233.9 L351.3 234.9 L347.9 236.2 L344.7 237.6 L341.6 239.2 L338.7 241.0 L335.9 243.0 L333.4 245.0 L331.0 247.2 L328.9 249.6 L327.1 252.0 L325.5 254.5 L324.2 257.0 L323.2 259.6 L322.6 262.2 L322.2 264.9 L322.1 267.5 L322.4 270.0 L323.0 272.6 L323.9 275.0 L325.1 277.4 L326.6 279.6 L328.5 281.7 L330.6 283.6 L333.0 285.4 L335.6 287.0 L338.5 288.4 L341.5 289.6 L344.8 290.6 L348.2 291.4 L351.8 291.9 L355.4 292.2 L359.1 292.2 L362.9 292.0 L366.7 291.5 L370.5 290.9 L374.2 289.9 L377.8 288.8 L381.4 287.4 L384.7 285.8 L388.0 284.1 L391.0 282.2 L393.8 280.1 L396.4 277.8 L398.7 275.5 L400.7 273.0 L402.5 270.5 L403.9 267.9 L405.0 265.2 L405.8 262.6 L406.3 259.9 L406.5 257.3 L406.3 254.7 L405.8 252.1 L405.0 249.7 L403.9 247.3 L402.6 245.1 L400.9 243.0 L398.9 241.0 L396.7 239.2 Z" fill="none" stroke="#1a1c1c" stroke-width="0.9"/>
<path d="M393.0 238.6 L390.5 237.2 L387.8 236.0 L384.9 235.0 L381.9 234.2 L378.7 233.6 L375.5 233.2 L372.1 232.9 L368.7 233.0 L365.3 233.2 L361.9 233.6 L358.5 234.2 L355.1 235.0 L351.9 236.0 L348.6 237.2 L345.5 238.6 L342.6 240.2 L339.8 241.9 L337.1 243.7 L334.7 245.7 L332.5 247.8 L330.5 250.1 L328.7 252.4 L327.2 254.8 L326.0 257.2 L325.1 259.7 L324.4 262.2 L324.1 264.7 L324.0 267.2 L324.3 269.6 L324.8 272.1 L325.7 274.4 L326.9 276.6 L328.3 278.8 L330.1 280.8 L332.1 282.6 L334.4 284.3 L336.9 285.9 L339.6 287.2 L342.6 288.3 L345.7 289.3 L348.9 290.0 L352.3 290.5 L355.8 290.7 L359.4 290.8 L363.0 290.6 L366.6 290.1 L370.2 289.5 L373.7 288.6 L377.2 287.5 L380.6 286.2 L383.8 284.7 L386.9 283.0 L389.8 281.2 L392.5 279.2 L394.9 277.1 L397.1 274.8 L399.1 272.5 L400.7 270.0 L402.1 267.6 L403.2 265.0 L404.0 262.5 L404.4 260.0 L404.6 257.4 L404.4 255.0 L404.0 252.5 L403.2 250.2 L402.2 247.9 L400.9 245.8 L399.3 243.8 L397.4 241.9 L395.3 240.2 Z" fill="none" stroke="#e8e8e8" stroke-width="0.7"/>
<path d="M391.9 239.5 L389.5 238.1 L386.9 237.0 L384.1 236.0 L381.2 235.2 L378.2 234.6 L375.0 234.2 L371.8 234.0 L368.6 234.0 L365.3 234.2 L362.0 234.6 L358.7 235.2 L355.5 236.0 L352.3 237.0 L349.2 238.1 L346.3 239.5 L343.4 241.0 L340.7 242.6 L338.2 244.4 L335.8 246.3 L333.7 248.3 L331.8 250.5 L330.1 252.7 L328.6 255.0 L327.5 257.3 L326.6 259.7 L325.9 262.1 L325.6 264.6 L325.6 267.0 L325.8 269.3 L326.4 271.6 L327.2 273.9 L328.3 276.0 L329.7 278.1 L331.4 280.0 L333.4 281.8 L335.5 283.4 L338.0 284.9 L340.6 286.2 L343.4 287.3 L346.4 288.2 L349.5 288.8 L352.8 289.3 L356.1 289.6 L359.6 289.6 L363.0 289.4 L366.5 289.0 L370.0 288.4 L373.4 287.5 L376.7 286.5 L379.9 285.2 L383.0 283.8 L386.0 282.2 L388.8 280.4 L391.3 278.5 L393.7 276.4 L395.8 274.3 L397.7 272.0 L399.3 269.7 L400.6 267.3 L401.7 264.9 L402.4 262.4 L402.9 260.0 L403.0 257.6 L402.9 255.2 L402.4 252.9 L401.7 250.6 L400.7 248.4 L399.5 246.4 L397.9 244.4 L396.1 242.6 L394.1 241.0 Z" fill="none" stroke="#202222" stroke-width="0.8"/>
<radialGradient id="csg" cx="0.62" cy="0.62" r="0.75"><stop offset="0" stop-color="#9a9e9c"/><stop offset="0.55" stop-color="#5f6362"/><stop offset="1" stop-color="#3a3e3d"/></radialGradient>
<clipPath id="cc0"><path d="M397.6 197.6 L396.6 197.1 L395.5 196.7 L394.3 196.3 L393.1 196.0 L391.9 195.8 L390.6 195.6 L389.3 195.5 L387.9 195.6 L386.6 195.6 L385.2 195.8 L383.8 196.1 L382.5 196.4 L381.2 196.8 L379.9 197.2 L378.7 197.8 L377.6 198.4 L376.5 199.0 L375.4 199.8 L374.5 200.5 L373.6 201.3 L372.9 202.2 L372.2 203.0 L371.7 203.9 L371.2 204.8 L370.9 205.8 L370.7 206.7 L370.6 207.6 L370.6 208.6 L370.8 209.5 L371.0 210.3 L371.4 211.2 L371.9 212.0 L372.5 212.8 L373.2 213.5 L374.1 214.2 L375.0 214.8 L376.0 215.3 L377.0 215.8 L378.2 216.2 L379.4 216.5 L380.7 216.7 L382.0 216.9 L383.4 217.0 L384.7 217.0 L386.1 216.9 L387.5 216.7 L388.9 216.5 L390.3 216.1 L391.6 215.7 L392.9 215.2 L394.1 214.7 L395.3 214.1 L396.4 213.4 L397.4 212.7 L398.4 211.9 L399.2 211.1 L400.0 210.2 L400.6 209.3 L401.2 208.4 L401.6 207.5 L401.9 206.5 L402.1 205.6 L402.1 204.7 L402.1 203.7 L401.9 202.8 L401.6 202.0 L401.2 201.1 L400.7 200.3 L400.1 199.6 L399.3 198.9 L398.5 198.2 Z"/></clipPath>
<path d="M397.6 197.6 L396.6 197.1 L395.5 196.7 L394.3 196.3 L393.1 196.0 L391.9 195.8 L390.6 195.6 L389.3 195.5 L387.9 195.6 L386.6 195.6 L385.2 195.8 L383.8 196.1 L382.5 196.4 L381.2 196.8 L379.9 197.2 L378.7 197.8 L377.6 198.4 L376.5 199.0 L375.4 199.8 L374.5 200.5 L373.6 201.3 L372.9 202.2 L372.2 203.0 L371.7 203.9 L371.2 204.8 L370.9 205.8 L370.7 206.7 L370.6 207.6 L370.6 208.6 L370.8 209.5 L371.0 210.3 L371.4 211.2 L371.9 212.0 L372.5 212.8 L373.2 213.5 L374.1 214.2 L375.0 214.8 L376.0 215.3 L377.0 215.8 L378.2 216.2 L379.4 216.5 L380.7 216.7 L382.0 216.9 L383.4 217.0 L384.7 217.0 L386.1 216.9 L387.5 216.7 L388.9 216.5 L390.3 216.1 L391.6 215.7 L392.9 215.2 L394.1 214.7 L395.3 214.1 L396.4 213.4 L397.4 212.7 L398.4 211.9 L399.2 211.1 L400.0 210.2 L400.6 209.3 L401.2 208.4 L401.6 207.5 L401.9 206.5 L402.1 205.6 L402.1 204.7 L402.1 203.7 L401.9 202.8 L401.6 202.0 L401.2 201.1 L400.7 200.3 L400.1 199.6 L399.3 198.9 L398.5 198.2 Z" fill="url(#csg)"/>
<path d="M392.6 208.4 L392.2 208.2 L391.7 207.9 L391.2 207.8 L390.6 207.6 L390.0 207.5 L389.5 207.5 L388.9 207.4 L388.2 207.4 L387.6 207.5 L387.0 207.5 L386.4 207.7 L385.8 207.8 L385.2 208.0 L384.6 208.2 L384.1 208.4 L383.6 208.7 L383.1 209.0 L382.6 209.3 L382.2 209.7 L381.8 210.0 L381.5 210.4 L381.2 210.8 L380.9 211.2 L380.7 211.7 L380.6 212.1 L380.5 212.5 L380.4 212.9 L380.5 213.3 L380.5 213.7 L380.7 214.1 L380.8 214.5 L381.1 214.9 L381.3 215.2 L381.7 215.6 L382.0 215.9 L382.4 216.1 L382.9 216.4 L383.4 216.6 L383.9 216.8 L384.4 216.9 L385.0 217.0 L385.6 217.1 L386.2 217.1 L386.8 217.1 L387.4 217.1 L388.1 217.0 L388.7 216.9 L389.3 216.7 L389.9 216.6 L390.5 216.3 L391.0 216.1 L391.6 215.8 L392.1 215.5 L392.5 215.2 L392.9 214.8 L393.3 214.5 L393.7 214.1 L394.0 213.7 L394.2 213.3 L394.4 212.9 L394.5 212.4 L394.6 212.0 L394.6 211.6 L394.6 211.2 L394.5 210.8 L394.4 210.4 L394.2 210.0 L394.0 209.6 L393.7 209.3 L393.4 209.0 L393.0 208.7 Z" fill="#3d4140" clip-path="url(#cc0)"/>
<clipPath id="ci0"><path d="M392.6 208.4 L392.2 208.2 L391.7 207.9 L391.2 207.8 L390.6 207.6 L390.0 207.5 L389.5 207.5 L388.9 207.4 L388.2 207.4 L387.6 207.5 L387.0 207.5 L386.4 207.7 L385.8 207.8 L385.2 208.0 L384.6 208.2 L384.1 208.4 L383.6 208.7 L383.1 209.0 L382.6 209.3 L382.2 209.7 L381.8 210.0 L381.5 210.4 L381.2 210.8 L380.9 211.2 L380.7 211.7 L380.6 212.1 L380.5 212.5 L380.4 212.9 L380.5 213.3 L380.5 213.7 L380.7 214.1 L380.8 214.5 L381.1 214.9 L381.3 215.2 L381.7 215.6 L382.0 215.9 L382.4 216.1 L382.9 216.4 L383.4 216.6 L383.9 216.8 L384.4 216.9 L385.0 217.0 L385.6 217.1 L386.2 217.1 L386.8 217.1 L387.4 217.1 L388.1 217.0 L388.7 216.9 L389.3 216.7 L389.9 216.6 L390.5 216.3 L391.0 216.1 L391.6 215.8 L392.1 215.5 L392.5 215.2 L392.9 214.8 L393.3 214.5 L393.7 214.1 L394.0 213.7 L394.2 213.3 L394.4 212.9 L394.5 212.4 L394.6 212.0 L394.6 211.6 L394.6 211.2 L394.5 210.8 L394.4 210.4 L394.2 210.0 L394.0 209.6 L393.7 209.3 L393.4 209.0 L393.0 208.7 Z"/></clipPath>
<path d="M394.2 216.6 L393.7 216.4 L393.2 216.2 L392.7 216.0 L392.2 215.8 L391.6 215.7 L391.0 215.7 L390.4 215.6 L389.8 215.6 L389.2 215.7 L388.6 215.7 L388.0 215.9 L387.4 216.0 L386.8 216.2 L386.3 216.4 L385.7 216.6 L385.2 216.9 L384.7 217.2 L384.2 217.5 L383.8 217.9 L383.4 218.2 L383.1 218.6 L382.8 219.0 L382.6 219.4 L382.4 219.9 L382.2 220.3 L382.1 220.7 L382.1 221.1 L382.1 221.5 L382.2 221.9 L382.3 222.3 L382.5 222.7 L382.7 223.1 L383.0 223.4 L383.3 223.8 L383.7 224.1 L384.1 224.3 L384.5 224.6 L385.0 224.8 L385.5 225.0 L386.1 225.1 L386.6 225.2 L387.2 225.3 L387.8 225.3 L388.4 225.3 L389.1 225.3 L389.7 225.2 L390.3 225.1 L390.9 225.0 L391.5 224.8 L392.1 224.6 L392.6 224.3 L393.1 224.0 L393.6 223.7 L394.1 223.4 L394.5 223.1 L394.9 222.7 L395.2 222.3 L395.5 221.9 L395.8 221.5 L395.9 221.1 L396.1 220.7 L396.2 220.2 L396.2 219.8 L396.2 219.4 L396.1 219.0 L396.0 218.6 L395.8 218.2 L395.6 217.8 L395.3 217.5 L395.0 217.2 L394.6 216.9 Z" fill="#ffffff" clip-path="url(#ci0)"/>
<path d="M397.6 197.6 L396.6 197.1 L395.5 196.7 L394.3 196.3 L393.1 196.0 L391.9 195.8 L390.6 195.6 L389.3 195.5 L387.9 195.6 L386.6 195.6 L385.2 195.8 L383.8 196.1 L382.5 196.4 L381.2 196.8 L379.9 197.2 L378.7 197.8 L377.6 198.4 L376.5 199.0 L375.4 199.8 L374.5 200.5 L373.6 201.3 L372.9 202.2 L372.2 203.0 L371.7 203.9 L371.2 204.8 L370.9 205.8 L370.7 206.7 L370.6 207.6 L370.6 208.6 L370.8 209.5 L371.0 210.3 L371.4 211.2 L371.9 212.0 L372.5 212.8 L373.2 213.5 L374.1 214.2 L375.0 214.8 L376.0 215.3 L377.0 215.8 L378.2 216.2 L379.4 216.5 L380.7 216.7 L382.0 216.9 L383.4 217.0 L384.7 217.0 L386.1 216.9 L387.5 216.7 L388.9 216.5 L390.3 216.1 L391.6 215.7 L392.9 215.2 L394.1 214.7 L395.3 214.1 L396.4 213.4 L397.4 212.7 L398.4 211.9 L399.2 211.1 L400.0 210.2 L400.6 209.3 L401.2 208.4 L401.6 207.5 L401.9 206.5 L402.1 205.6 L402.1 204.7 L402.1 203.7 L401.9 202.8 L401.6 202.0 L401.2 201.1 L400.7 200.3 L400.1 199.6 L399.3 198.9 L398.5 198.2 Z" fill="none" stroke="#111" stroke-width="0.9"/>
<path d="M392.6 208.4 L392.2 208.2 L391.7 207.9 L391.2 207.8 L390.6 207.6 L390.0 207.5 L389.5 207.5 L388.9 207.4 L388.2 207.4 L387.6 207.5 L387.0 207.5 L386.4 207.7 L385.8 207.8 L385.2 208.0 L384.6 208.2 L384.1 208.4 L383.6 208.7 L383.1 209.0 L382.6 209.3 L382.2 209.7 L381.8 210.0 L381.5 210.4 L381.2 210.8 L380.9 211.2 L380.7 211.7 L380.6 212.1 L380.5 212.5 L380.4 212.9 L380.5 213.3 L380.5 213.7 L380.7 214.1 L380.8 214.5 L381.1 214.9 L381.3 215.2 L381.7 215.6 L382.0 215.9 L382.4 216.1 L382.9 216.4 L383.4 216.6 L383.9 216.8 L384.4 216.9 L385.0 217.0 L385.6 217.1 L386.2 217.1 L386.8 217.1 L387.4 217.1 L388.1 217.0 L388.7 216.9 L389.3 216.7 L389.9 216.6 L390.5 216.3 L391.0 216.1 L391.6 215.8 L392.1 215.5 L392.5 215.2 L392.9 214.8 L393.3 214.5 L393.7 214.1 L394.0 213.7 L394.2 213.3 L394.4 212.9 L394.5 212.4 L394.6 212.0 L394.6 211.6 L394.6 211.2 L394.5 210.8 L394.4 210.4 L394.2 210.0 L394.0 209.6 L393.7 209.3 L393.4 209.0 L393.0 208.7 Z" fill="none" stroke="#222" stroke-width="0.6" clip-path="url(#cc0)"/>
<clipPath id="cc1"><path d="M297.1 273.7 L296.1 273.1 L295.1 272.6 L293.9 272.2 L292.7 271.8 L291.4 271.5 L290.1 271.3 L288.7 271.2 L287.3 271.2 L285.9 271.3 L284.4 271.5 L283.0 271.7 L281.6 272.1 L280.2 272.5 L278.8 273.0 L277.5 273.6 L276.2 274.3 L275.0 275.0 L273.9 275.8 L272.8 276.7 L271.8 277.6 L270.9 278.5 L270.1 279.5 L269.5 280.5 L268.9 281.6 L268.5 282.6 L268.1 283.7 L267.9 284.8 L267.9 285.8 L267.9 286.9 L268.1 287.9 L268.4 288.9 L268.8 289.8 L269.4 290.7 L270.0 291.5 L270.8 292.3 L271.7 293.0 L272.7 293.6 L273.7 294.2 L274.9 294.7 L276.1 295.0 L277.4 295.3 L278.8 295.5 L280.2 295.7 L281.6 295.7 L283.1 295.6 L284.5 295.4 L286.0 295.1 L287.5 294.8 L288.9 294.3 L290.3 293.8 L291.6 293.2 L292.9 292.5 L294.2 291.7 L295.3 290.9 L296.4 290.0 L297.4 289.1 L298.2 288.1 L299.0 287.1 L299.7 286.1 L300.2 285.0 L300.6 284.0 L300.9 282.9 L301.1 281.8 L301.1 280.8 L301.0 279.7 L300.8 278.7 L300.5 277.8 L300.0 276.9 L299.5 276.0 L298.8 275.2 L298.0 274.4 Z"/></clipPath>
<path d="M297.1 273.7 L296.1 273.1 L295.1 272.6 L293.9 272.2 L292.7 271.8 L291.4 271.5 L290.1 271.3 L288.7 271.2 L287.3 271.2 L285.9 271.3 L284.4 271.5 L283.0 271.7 L281.6 272.1 L280.2 272.5 L278.8 273.0 L277.5 273.6 L276.2 274.3 L275.0 275.0 L273.9 275.8 L272.8 276.7 L271.8 277.6 L270.9 278.5 L270.1 279.5 L269.5 280.5 L268.9 281.6 L268.5 282.6 L268.1 283.7 L267.9 284.8 L267.9 285.8 L267.9 286.9 L268.1 287.9 L268.4 288.9 L268.8 289.8 L269.4 290.7 L270.0 291.5 L270.8 292.3 L271.7 293.0 L272.7 293.6 L273.7 294.2 L274.9 294.7 L276.1 295.0 L277.4 295.3 L278.8 295.5 L280.2 295.7 L281.6 295.7 L283.1 295.6 L284.5 295.4 L286.0 295.1 L287.5 294.8 L288.9 294.3 L290.3 293.8 L291.6 293.2 L292.9 292.5 L294.2 291.7 L295.3 290.9 L296.4 290.0 L297.4 289.1 L298.2 288.1 L299.0 287.1 L299.7 286.1 L300.2 285.0 L300.6 284.0 L300.9 282.9 L301.1 281.8 L301.1 280.8 L301.0 279.7 L300.8 278.7 L300.5 277.8 L300.0 276.9 L299.5 276.0 L298.8 275.2 L298.0 274.4 Z" fill="url(#csg)"/>
<path d="M292.1 285.0 L291.6 284.7 L291.1 284.4 L290.6 284.2 L290.1 284.1 L289.5 283.9 L288.9 283.9 L288.3 283.8 L287.6 283.8 L287.0 283.8 L286.3 283.9 L285.7 284.0 L285.0 284.2 L284.4 284.4 L283.8 284.6 L283.2 284.9 L282.6 285.2 L282.1 285.5 L281.5 285.9 L281.1 286.3 L280.6 286.7 L280.2 287.1 L279.9 287.6 L279.6 288.0 L279.3 288.5 L279.1 289.0 L279.0 289.5 L278.9 290.0 L278.9 290.4 L278.9 290.9 L279.0 291.4 L279.1 291.8 L279.3 292.2 L279.6 292.6 L279.9 293.0 L280.2 293.4 L280.6 293.7 L281.1 294.0 L281.6 294.2 L282.1 294.4 L282.6 294.6 L283.2 294.7 L283.8 294.8 L284.4 294.9 L285.1 294.9 L285.7 294.8 L286.4 294.8 L287.1 294.6 L287.7 294.5 L288.3 294.3 L289.0 294.0 L289.6 293.8 L290.2 293.5 L290.7 293.1 L291.2 292.7 L291.7 292.3 L292.1 291.9 L292.5 291.5 L292.9 291.0 L293.2 290.6 L293.4 290.1 L293.6 289.6 L293.8 289.1 L293.8 288.6 L293.9 288.2 L293.8 287.7 L293.7 287.2 L293.6 286.8 L293.4 286.4 L293.1 286.0 L292.8 285.6 L292.5 285.3 Z" fill="#3d4140" clip-path="url(#cc1)"/>
<clipPath id="ci1"><path d="M292.1 285.0 L291.6 284.7 L291.1 284.4 L290.6 284.2 L290.1 284.1 L289.5 283.9 L288.9 283.9 L288.3 283.8 L287.6 283.8 L287.0 283.8 L286.3 283.9 L285.7 284.0 L285.0 284.2 L284.4 284.4 L283.8 284.6 L283.2 284.9 L282.6 285.2 L282.1 285.5 L281.5 285.9 L281.1 286.3 L280.6 286.7 L280.2 287.1 L279.9 287.6 L279.6 288.0 L279.3 288.5 L279.1 289.0 L279.0 289.5 L278.9 290.0 L278.9 290.4 L278.9 290.9 L279.0 291.4 L279.1 291.8 L279.3 292.2 L279.6 292.6 L279.9 293.0 L280.2 293.4 L280.6 293.7 L281.1 294.0 L281.6 294.2 L282.1 294.4 L282.6 294.6 L283.2 294.7 L283.8 294.8 L284.4 294.9 L285.1 294.9 L285.7 294.8 L286.4 294.8 L287.1 294.6 L287.7 294.5 L288.3 294.3 L289.0 294.0 L289.6 293.8 L290.2 293.5 L290.7 293.1 L291.2 292.7 L291.7 292.3 L292.1 291.9 L292.5 291.5 L292.9 291.0 L293.2 290.6 L293.4 290.1 L293.6 289.6 L293.8 289.1 L293.8 288.6 L293.9 288.2 L293.8 287.7 L293.7 287.2 L293.6 286.8 L293.4 286.4 L293.1 286.0 L292.8 285.6 L292.5 285.3 Z"/></clipPath>
<path d="M294.5 293.1 L294.1 292.8 L293.6 292.5 L293.1 292.3 L292.5 292.2 L292.0 292.0 L291.4 291.9 L290.8 291.9 L290.1 291.9 L289.5 291.9 L288.8 292.0 L288.2 292.1 L287.6 292.3 L286.9 292.5 L286.3 292.7 L285.7 293.0 L285.1 293.3 L284.6 293.6 L284.1 294.0 L283.6 294.4 L283.2 294.8 L282.8 295.2 L282.4 295.7 L282.1 296.1 L281.9 296.6 L281.7 297.1 L281.6 297.5 L281.5 298.0 L281.5 298.5 L281.5 299.0 L281.6 299.4 L281.7 299.9 L281.9 300.3 L282.2 300.7 L282.5 301.1 L282.8 301.4 L283.2 301.7 L283.6 302.0 L284.1 302.3 L284.6 302.5 L285.2 302.7 L285.8 302.8 L286.4 302.9 L287.0 302.9 L287.6 302.9 L288.3 302.9 L288.9 302.8 L289.6 302.7 L290.2 302.5 L290.9 302.3 L291.5 302.1 L292.1 301.8 L292.7 301.5 L293.2 301.2 L293.7 300.8 L294.2 300.4 L294.6 300.0 L295.0 299.6 L295.4 299.1 L295.7 298.7 L295.9 298.2 L296.1 297.7 L296.2 297.2 L296.3 296.7 L296.3 296.3 L296.3 295.8 L296.2 295.3 L296.0 294.9 L295.8 294.5 L295.6 294.1 L295.3 293.7 L294.9 293.4 Z" fill="#ffffff" clip-path="url(#ci1)"/>
<path d="M297.1 273.7 L296.1 273.1 L295.1 272.6 L293.9 272.2 L292.7 271.8 L291.4 271.5 L290.1 271.3 L288.7 271.2 L287.3 271.2 L285.9 271.3 L284.4 271.5 L283.0 271.7 L281.6 272.1 L280.2 272.5 L278.8 273.0 L277.5 273.6 L276.2 274.3 L275.0 275.0 L273.9 275.8 L272.8 276.7 L271.8 277.6 L270.9 278.5 L270.1 279.5 L269.5 280.5 L268.9 281.6 L268.5 282.6 L268.1 283.7 L267.9 284.8 L267.9 285.8 L267.9 286.9 L268.1 287.9 L268.4 288.9 L268.8 289.8 L269.4 290.7 L270.0 291.5 L270.8 292.3 L271.7 293.0 L272.7 293.6 L273.7 294.2 L274.9 294.7 L276.1 295.0 L277.4 295.3 L278.8 295.5 L280.2 295.7 L281.6 295.7 L283.1 295.6 L284.5 295.4 L286.0 295.1 L287.5 294.8 L288.9 294.3 L290.3 293.8 L291.6 293.2 L292.9 292.5 L294.2 291.7 L295.3 290.9 L296.4 290.0 L297.4 289.1 L298.2 288.1 L299.0 287.1 L299.7 286.1 L300.2 285.0 L300.6 284.0 L300.9 282.9 L301.1 281.8 L301.1 280.8 L301.0 279.7 L300.8 278.7 L300.5 277.8 L300.0 276.9 L299.5 276.0 L298.8 275.2 L298.0 274.4 Z" fill="none" stroke="#111" stroke-width="0.9"/>
<path d="M292.1 285.0 L291.6 284.7 L291.1 284.4 L290.6 284.2 L290.1 284.1 L289.5 283.9 L288.9 283.9 L288.3 283.8 L287.6 283.8 L287.0 283.8 L286.3 283.9 L285.7 284.0 L285.0 284.2 L284.4 284.4 L283.8 284.6 L283.2 284.9 L282.6 285.2 L282.1 285.5 L281.5 285.9 L281.1 286.3 L280.6 286.7 L280.2 287.1 L279.9 287.6 L279.6 288.0 L279.3 288.5 L279.1 289.0 L279.0 289.5 L278.9 290.0 L278.9 290.4 L278.9 290.9 L279.0 291.4 L279.1 291.8 L279.3 292.2 L279.6 292.6 L279.9 293.0 L280.2 293.4 L280.6 293.7 L281.1 294.0 L281.6 294.2 L282.1 294.4 L282.6 294.6 L283.2 294.7 L283.8 294.8 L284.4 294.9 L285.1 294.9 L285.7 294.8 L286.4 294.8 L287.1 294.6 L287.7 294.5 L288.3 294.3 L289.0 294.0 L289.6 293.8 L290.2 293.5 L290.7 293.1 L291.2 292.7 L291.7 292.3 L292.1 291.9 L292.5 291.5 L292.9 291.0 L293.2 290.6 L293.4 290.1 L293.6 289.6 L293.8 289.1 L293.8 288.6 L293.9 288.2 L293.8 287.7 L293.7 287.2 L293.6 286.8 L293.4 286.4 L293.1 286.0 L292.8 285.6 L292.5 285.3 Z" fill="none" stroke="#222" stroke-width="0.6" clip-path="url(#cc1)"/>
<clipPath id="cc2"><path d="M433.8 289.1 L432.8 288.5 L431.6 288.0 L430.4 287.5 L429.2 287.2 L427.9 286.9 L426.5 286.7 L425.2 286.6 L423.8 286.6 L422.4 286.7 L421.0 286.8 L419.6 287.1 L418.2 287.4 L416.9 287.9 L415.6 288.4 L414.3 288.9 L413.2 289.6 L412.0 290.3 L411.0 291.1 L410.1 291.9 L409.2 292.8 L408.5 293.8 L407.8 294.7 L407.3 295.7 L406.8 296.8 L406.5 297.8 L406.4 298.8 L406.3 299.9 L406.4 300.9 L406.5 301.9 L406.9 302.9 L407.3 303.9 L407.8 304.8 L408.5 305.7 L409.2 306.5 L410.1 307.3 L411.1 308.0 L412.1 308.6 L413.3 309.2 L414.5 309.6 L415.8 310.0 L417.1 310.3 L418.5 310.5 L419.9 310.6 L421.3 310.6 L422.7 310.6 L424.1 310.4 L425.6 310.1 L427.0 309.8 L428.3 309.3 L429.6 308.8 L430.9 308.2 L432.1 307.5 L433.2 306.8 L434.3 306.0 L435.2 305.1 L436.1 304.2 L436.8 303.3 L437.4 302.3 L438.0 301.3 L438.4 300.2 L438.6 299.2 L438.8 298.1 L438.8 297.1 L438.7 296.0 L438.5 295.0 L438.2 294.0 L437.7 293.1 L437.1 292.2 L436.5 291.3 L435.7 290.5 L434.8 289.8 Z"/></clipPath>
<path d="M433.8 289.1 L432.8 288.5 L431.6 288.0 L430.4 287.5 L429.2 287.2 L427.9 286.9 L426.5 286.7 L425.2 286.6 L423.8 286.6 L422.4 286.7 L421.0 286.8 L419.6 287.1 L418.2 287.4 L416.9 287.9 L415.6 288.4 L414.3 288.9 L413.2 289.6 L412.0 290.3 L411.0 291.1 L410.1 291.9 L409.2 292.8 L408.5 293.8 L407.8 294.7 L407.3 295.7 L406.8 296.8 L406.5 297.8 L406.4 298.8 L406.3 299.9 L406.4 300.9 L406.5 301.9 L406.9 302.9 L407.3 303.9 L407.8 304.8 L408.5 305.7 L409.2 306.5 L410.1 307.3 L411.1 308.0 L412.1 308.6 L413.3 309.2 L414.5 309.6 L415.8 310.0 L417.1 310.3 L418.5 310.5 L419.9 310.6 L421.3 310.6 L422.7 310.6 L424.1 310.4 L425.6 310.1 L427.0 309.8 L428.3 309.3 L429.6 308.8 L430.9 308.2 L432.1 307.5 L433.2 306.8 L434.3 306.0 L435.2 305.1 L436.1 304.2 L436.8 303.3 L437.4 302.3 L438.0 301.3 L438.4 300.2 L438.6 299.2 L438.8 298.1 L438.8 297.1 L438.7 296.0 L438.5 295.0 L438.2 294.0 L437.7 293.1 L437.1 292.2 L436.5 291.3 L435.7 290.5 L434.8 289.8 Z" fill="url(#csg)"/>
<path d="M429.1 300.1 L428.6 299.8 L428.0 299.5 L427.4 299.3 L426.8 299.1 L426.2 299.0 L425.6 298.9 L424.9 298.8 L424.2 298.8 L423.5 298.9 L422.9 298.9 L422.2 299.1 L421.5 299.2 L420.9 299.4 L420.2 299.7 L419.6 300.0 L419.1 300.3 L418.5 300.6 L418.0 301.0 L417.6 301.4 L417.2 301.9 L416.8 302.3 L416.5 302.8 L416.2 303.3 L416.0 303.8 L415.9 304.3 L415.8 304.8 L415.8 305.3 L415.8 305.8 L415.9 306.3 L416.1 306.8 L416.3 307.2 L416.6 307.7 L416.9 308.1 L417.2 308.5 L417.7 308.9 L418.1 309.2 L418.6 309.5 L419.2 309.8 L419.8 310.0 L420.4 310.2 L421.0 310.3 L421.7 310.4 L422.3 310.5 L423.0 310.5 L423.7 310.4 L424.4 310.4 L425.1 310.2 L425.8 310.1 L426.4 309.9 L427.0 309.6 L427.6 309.3 L428.2 309.0 L428.8 308.6 L429.3 308.2 L429.7 307.8 L430.1 307.4 L430.5 306.9 L430.8 306.5 L431.0 306.0 L431.2 305.5 L431.4 305.0 L431.4 304.4 L431.5 303.9 L431.4 303.4 L431.3 302.9 L431.2 302.5 L430.9 302.0 L430.7 301.6 L430.4 301.1 L430.0 300.8 L429.6 300.4 Z" fill="#3d4140" clip-path="url(#cc2)"/>
<clipPath id="ci2"><path d="M429.1 300.1 L428.6 299.8 L428.0 299.5 L427.4 299.3 L426.8 299.1 L426.2 299.0 L425.6 298.9 L424.9 298.8 L424.2 298.8 L423.5 298.9 L422.9 298.9 L422.2 299.1 L421.5 299.2 L420.9 299.4 L420.2 299.7 L419.6 300.0 L419.1 300.3 L418.5 300.6 L418.0 301.0 L417.6 301.4 L417.2 301.9 L416.8 302.3 L416.5 302.8 L416.2 303.3 L416.0 303.8 L415.9 304.3 L415.8 304.8 L415.8 305.3 L415.8 305.8 L415.9 306.3 L416.1 306.8 L416.3 307.2 L416.6 307.7 L416.9 308.1 L417.2 308.5 L417.7 308.9 L418.1 309.2 L418.6 309.5 L419.2 309.8 L419.8 310.0 L420.4 310.2 L421.0 310.3 L421.7 310.4 L422.3 310.5 L423.0 310.5 L423.7 310.4 L424.4 310.4 L425.1 310.2 L425.8 310.1 L426.4 309.9 L427.0 309.6 L427.6 309.3 L428.2 309.0 L428.8 308.6 L429.3 308.2 L429.7 307.8 L430.1 307.4 L430.5 306.9 L430.8 306.5 L431.0 306.0 L431.2 305.5 L431.4 305.0 L431.4 304.4 L431.5 303.9 L431.4 303.4 L431.3 302.9 L431.2 302.5 L430.9 302.0 L430.7 301.6 L430.4 301.1 L430.0 300.8 L429.6 300.4 Z"/></clipPath>
<path d="M430.5 308.3 L430.0 308.0 L429.5 307.8 L428.9 307.6 L428.3 307.4 L427.6 307.2 L427.0 307.1 L426.3 307.1 L425.7 307.1 L425.0 307.1 L424.3 307.2 L423.7 307.3 L423.0 307.5 L422.4 307.7 L421.7 307.9 L421.1 308.2 L420.6 308.5 L420.0 308.9 L419.5 309.3 L419.1 309.7 L418.7 310.1 L418.3 310.6 L418.0 311.0 L417.8 311.5 L417.6 312.0 L417.4 312.5 L417.3 313.0 L417.3 313.5 L417.4 314.0 L417.5 314.5 L417.6 315.0 L417.8 315.5 L418.1 315.9 L418.4 316.3 L418.8 316.7 L419.2 317.1 L419.6 317.4 L420.2 317.7 L420.7 318.0 L421.3 318.2 L421.9 318.4 L422.5 318.6 L423.2 318.7 L423.8 318.7 L424.5 318.7 L425.2 318.7 L425.9 318.6 L426.5 318.5 L427.2 318.3 L427.9 318.1 L428.5 317.9 L429.1 317.6 L429.7 317.2 L430.2 316.9 L430.7 316.5 L431.1 316.1 L431.5 315.7 L431.9 315.2 L432.2 314.7 L432.4 314.2 L432.6 313.7 L432.8 313.2 L432.8 312.7 L432.9 312.2 L432.8 311.7 L432.7 311.2 L432.6 310.7 L432.4 310.3 L432.1 309.8 L431.8 309.4 L431.4 309.0 L431.0 308.7 Z" fill="#ffffff" clip-path="url(#ci2)"/>
<path d="M433.8 289.1 L432.8 288.5 L431.6 288.0 L430.4 287.5 L429.2 287.2 L427.9 286.9 L426.5 286.7 L425.2 286.6 L423.8 286.6 L422.4 286.7 L421.0 286.8 L419.6 287.1 L418.2 287.4 L416.9 287.9 L415.6 288.4 L414.3 288.9 L413.2 289.6 L412.0 290.3 L411.0 291.1 L410.1 291.9 L409.2 292.8 L408.5 293.8 L407.8 294.7 L407.3 295.7 L406.8 296.8 L406.5 297.8 L406.4 298.8 L406.3 299.9 L406.4 300.9 L406.5 301.9 L406.9 302.9 L407.3 303.9 L407.8 304.8 L408.5 305.7 L409.2 306.5 L410.1 307.3 L411.1 308.0 L412.1 308.6 L413.3 309.2 L414.5 309.6 L415.8 310.0 L417.1 310.3 L418.5 310.5 L419.9 310.6 L421.3 310.6 L422.7 310.6 L424.1 310.4 L425.6 310.1 L427.0 309.8 L428.3 309.3 L429.6 308.8 L430.9 308.2 L432.1 307.5 L433.2 306.8 L434.3 306.0 L435.2 305.1 L436.1 304.2 L436.8 303.3 L437.4 302.3 L438.0 301.3 L438.4 300.2 L438.6 299.2 L438.8 298.1 L438.8 297.1 L438.7 296.0 L438.5 295.0 L438.2 294.0 L437.7 293.1 L437.1 292.2 L436.5 291.3 L435.7 290.5 L434.8 289.8 Z" fill="none" stroke="#111" stroke-width="0.9"/>
<path d="M429.1 300.1 L428.6 299.8 L428.0 299.5 L427.4 299.3 L426.8 299.1 L426.2 299.0 L425.6 298.9 L424.9 298.8 L424.2 298.8 L423.5 298.9 L422.9 298.9 L422.2 299.1 L421.5 299.2 L420.9 299.4 L420.2 299.7 L419.6 300.0 L419.1 300.3 L418.5 300.6 L418.0 301.0 L417.6 301.4 L417.2 301.9 L416.8 302.3 L416.5 302.8 L416.2 303.3 L416.0 303.8 L415.9 304.3 L415.8 304.8 L415.8 305.3 L415.8 305.8 L415.9 306.3 L416.1 306.8 L416.3 307.2 L416.6 307.7 L416.9 308.1 L417.2 308.5 L417.7 308.9 L418.1 309.2 L418.6 309.5 L419.2 309.8 L419.8 310.0 L420.4 310.2 L421.0 310.3 L421.7 310.4 L422.3 310.5 L423.0 310.5 L423.7 310.4 L424.4 310.4 L425.1 310.2 L425.8 310.1 L426.4 309.9 L427.0 309.6 L427.6 309.3 L428.2 309.0 L428.8 308.6 L429.3 308.2 L429.7 307.8 L430.1 307.4 L430.5 306.9 L430.8 306.5 L431.0 306.0 L431.2 305.5 L431.4 305.0 L431.4 304.4 L431.5 303.9 L431.4 303.4 L431.3 302.9 L431.2 302.5 L430.9 302.0 L430.7 301.6 L430.4 301.1 L430.0 300.8 L429.6 300.4 Z" fill="none" stroke="#222" stroke-width="0.6" clip-path="url(#cc2)"/>
<path d="M435.2 288.0 L434.0 287.3 L432.7 286.7 L431.4 286.2 L430.0 285.8 L428.5 285.5 L427.0 285.3 L425.5 285.2 L423.9 285.2 L422.3 285.3 L420.8 285.4 L419.2 285.7 L417.7 286.1 L416.2 286.6 L414.7 287.1 L413.4 287.8 L412.0 288.5 L410.8 289.3 L409.6 290.2 L408.6 291.1 L407.6 292.1 L406.8 293.2 L406.0 294.3 L405.4 295.4 L405.0 296.5 L404.6 297.7 L404.4 298.9 L404.3 300.1 L404.4 301.2 L404.6 302.4 L404.9 303.5 L405.4 304.6 L406.0 305.6 L406.8 306.6 L407.6 307.5 L408.6 308.4 L409.7 309.1 L410.9 309.8 L412.1 310.5 L413.5 311.0 L414.9 311.4 L416.4 311.7 L418.0 312.0 L419.5 312.1 L421.1 312.1 L422.7 312.0 L424.3 311.8 L425.9 311.6 L427.5 311.2 L429.0 310.7 L430.5 310.1 L431.9 309.4 L433.3 308.7 L434.5 307.8 L435.7 306.9 L436.8 305.9 L437.7 304.9 L438.5 303.8 L439.3 302.7 L439.8 301.6 L440.3 300.4 L440.6 299.3 L440.8 298.1 L440.8 296.9 L440.7 295.7 L440.4 294.6 L440.1 293.5 L439.6 292.4 L438.9 291.4 L438.2 290.5 L437.3 289.6 L436.3 288.7 Z" fill="none" stroke="#e8e8e8" stroke-width="1.2"/>
<path d="M433.8 289.1 L432.8 288.5 L431.6 288.0 L430.4 287.5 L429.2 287.2 L427.9 286.9 L426.5 286.7 L425.2 286.6 L423.8 286.6 L422.4 286.7 L421.0 286.8 L419.6 287.1 L418.2 287.4 L416.9 287.9 L415.6 288.4 L414.3 288.9 L413.2 289.6 L412.0 290.3 L411.0 291.1 L410.1 291.9 L409.2 292.8 L408.5 293.8 L407.8 294.7 L407.3 295.7 L406.8 296.8 L406.5 297.8 L406.4 298.8 L406.3 299.9 L406.4 300.9 L406.5 301.9 L406.9 302.9 L407.3 303.9 L407.8 304.8 L408.5 305.7 L409.2 306.5 L410.1 307.3 L411.1 308.0 L412.1 308.6 L413.3 309.2 L414.5 309.6 L415.8 310.0 L417.1 310.3 L418.5 310.5 L419.9 310.6 L421.3 310.6 L422.7 310.6 L424.1 310.4 L425.6 310.1 L427.0 309.8 L428.3 309.3 L429.6 308.8 L430.9 308.2 L432.1 307.5 L433.2 306.8 L434.3 306.0 L435.2 305.1 L436.1 304.2 L436.8 303.3 L437.4 302.3 L438.0 301.3 L438.4 300.2 L438.6 299.2 L438.8 298.1 L438.8 297.1 L438.7 296.0 L438.5 295.0 L438.2 294.0 L437.7 293.1 L437.1 292.2 L436.5 291.3 L435.7 290.5 L434.8 289.8 Z" fill="none" stroke="#0c0c0c" stroke-width="1.1"/>
<path d="M432.6 290.1 L431.6 289.6 L430.6 289.1 L429.6 288.7 L428.5 288.4 L427.3 288.2 L426.1 288.0 L424.9 287.9 L423.6 287.9 L422.4 288.0 L421.1 288.1 L419.9 288.3 L418.7 288.6 L417.5 289.0 L416.3 289.5 L415.2 290.0 L414.2 290.6 L413.2 291.2 L412.3 291.9 L411.4 292.7 L410.7 293.4 L410.0 294.3 L409.4 295.1 L409.0 296.0 L408.6 296.9 L408.3 297.9 L408.2 298.8 L408.1 299.7 L408.2 300.6 L408.3 301.6 L408.6 302.4 L409.0 303.3 L409.5 304.1 L410.0 304.9 L410.7 305.6 L411.5 306.3 L412.4 306.9 L413.3 307.5 L414.3 308.0 L415.4 308.4 L416.5 308.7 L417.7 309.0 L418.9 309.2 L420.2 309.3 L421.4 309.3 L422.7 309.2 L424.0 309.0 L425.2 308.8 L426.5 308.5 L427.7 308.1 L428.8 307.7 L430.0 307.1 L431.0 306.5 L432.0 305.9 L433.0 305.2 L433.8 304.4 L434.5 303.6 L435.2 302.7 L435.8 301.8 L436.2 300.9 L436.6 300.0 L436.8 299.1 L437.0 298.2 L437.0 297.2 L436.9 296.3 L436.7 295.4 L436.4 294.5 L436.0 293.7 L435.5 292.9 L434.9 292.1 L434.2 291.4 L433.4 290.7 Z" fill="none" stroke="#d8d8d8" stroke-width="0.8"/>
<path d="M427.3 294.5 L426.9 294.2 L426.4 294.0 L425.9 293.8 L425.4 293.7 L424.8 293.5 L424.2 293.5 L423.7 293.4 L423.1 293.4 L422.5 293.4 L421.9 293.5 L421.3 293.6 L420.7 293.8 L420.1 293.9 L419.6 294.2 L419.0 294.4 L418.5 294.7 L418.1 295.0 L417.6 295.3 L417.2 295.7 L416.9 296.1 L416.5 296.5 L416.3 296.9 L416.0 297.3 L415.9 297.7 L415.7 298.2 L415.7 298.6 L415.6 299.1 L415.7 299.5 L415.8 299.9 L415.9 300.4 L416.1 300.8 L416.3 301.2 L416.6 301.5 L416.9 301.9 L417.3 302.2 L417.7 302.5 L418.1 302.8 L418.6 303.0 L419.1 303.2 L419.7 303.3 L420.2 303.5 L420.8 303.5 L421.4 303.6 L422.0 303.6 L422.6 303.6 L423.2 303.5 L423.8 303.4 L424.4 303.2 L425.0 303.1 L425.5 302.8 L426.1 302.6 L426.6 302.3 L427.0 302.0 L427.5 301.6 L427.9 301.3 L428.2 300.9 L428.6 300.5 L428.8 300.1 L429.1 299.7 L429.2 299.2 L429.4 298.8 L429.4 298.3 L429.4 297.9 L429.4 297.4 L429.3 297.0 L429.2 296.6 L429.0 296.2 L428.7 295.8 L428.5 295.4 L428.1 295.1 L427.8 294.8 Z" fill="none" stroke="#0c0c0c" stroke-width="1"/>
<circle cx="422.5" cy="298.5" r="1.9" fill="#0c0c0c"/>
<path d="M564.8 104.6 L559.1 102.1 L553.2 99.7 L547.3 97.5 L541.3 95.3 L535.2 93.2 L529.1 91.3 L522.9 89.5 L516.7 87.8 L510.5 86.2 L504.1 84.7 L497.8 83.3 L491.4 82.1 L484.9 80.9 L478.4 79.9 L471.9 78.9 L465.3 78.1 L458.8 77.4 L452.2 76.8 L445.5 76.3 L438.9 75.9 L432.2 75.6 L425.5 75.5 L418.8 75.4 L412.1 75.4 L405.4 75.6 L398.6 75.8 L391.9 76.2 L385.2 76.6 L378.4 77.2 L371.7 77.8 L364.9 78.6 L358.2 79.5 L351.5 80.4 L344.8 81.5 L338.1 82.7 L331.4 83.9 L324.7 85.3 L318.1 86.8 L311.4 88.3 L304.8 90.0 L298.2 91.8 L291.7 93.6 L285.2 95.6 L278.7 97.7 L272.2 99.8 L265.8 102.1 L259.4 104.4 L253.0 106.9 L246.7 109.4 L240.5 112.1 L234.3 114.8 L228.1 117.6 L222.0 120.5 L215.9 123.6 L209.9 126.7 L204.0 129.9 L198.1 133.2 L192.3 136.6 L186.6 140.0 L180.9 143.6 L175.3 147.3 L169.8 151.0 L164.4 154.9 L159.0 158.8 L153.7 162.8 L148.6 166.9 L143.5 171.1 L138.5 175.4 L133.6 179.7 L128.8 184.2 L124.1 188.7 L119.5 193.3 L115.0 198.0 L110.7 202.8 L106.5 207.6 L102.3 212.5 L98.3 217.5 L94.5 222.6 L90.8 227.7 L87.2 232.9 L83.7 238.2 L80.4 243.6 L77.3 249.0 L74.3 254.5 L71.5 260.0 L68.8 265.6 L66.3 271.2 L63.9 277.0 L61.8 282.7 L59.8 288.5 L58.0 294.4 L56.3 300.3 L54.9 306.2 L53.7 312.2 L52.6 318.2 L51.8 324.2 L51.2 330.2 L50.8 336.3 L50.6 342.4 L50.6 348.5 L50.8 354.6 L51.3 360.7 L52.0 366.9 L53.0 373.0 L54.1 379.1 L55.5 385.2 L57.2 391.2 L59.1 397.3 L61.3 403.3 L63.7 409.3 L66.3 415.2 L69.2 421.1 L72.4 426.9 L75.8 432.7 L79.5 438.4 L83.5 444.0 L87.7 449.5 L92.2 455.0 L96.9 460.3 L101.9 465.6 L107.2 470.7 L112.7 475.8 L118.5 480.7 L124.5 485.5 L130.8 490.1 L137.3 494.6 L144.1 499.0 L151.1 503.2 L158.4 507.2 L165.8 511.1 L173.6 514.8 L181.5 518.3 L189.6 521.6 L198.0 524.7 L206.6 527.6 L215.3 530.3 L224.2 532.9 L233.3 535.1 L242.6 537.2 L252.1 539.1 L261.6 540.7 L271.3 542.1 L281.2 543.2 L291.1 544.1 L301.2 544.8 L311.3 545.2 L321.6 545.4 L331.9 545.3 L342.2 545.0 L352.6 544.4 L363.0 543.6 L373.4 542.6 L383.9 541.3 L394.3 539.7 L404.7 537.9 L415.1 535.9 L425.4 533.6 L435.6 531.1 L445.8 528.3 L455.9 525.3 L465.9 522.1 L475.7 518.7 L485.5 515.1 L495.1 511.2 L504.6 507.2 L513.9 502.9 L523.0 498.5 L532.0 493.9 L540.8 489.1 L549.4 484.1 L557.7 479.0 L565.9 473.7 L573.8 468.3 L581.6 462.7 L589.0 457.0 L596.3 451.2 L603.3 445.2 L610.0 439.2 L616.5 433.0 L622.7 426.8 L628.7 420.4 L634.3 414.0 L639.8 407.6 L644.9 401.0 L649.8 394.4 L654.4 387.8 L658.7 381.1 L662.7 374.4 L666.5 367.7 L670.0 361.0 L673.2 354.2 L676.1 347.5 L678.8 340.7 L681.2 334.0 L683.3 327.3 L685.2 320.6 L686.8 313.9 L688.1 307.3 L689.2 300.7 L690.0 294.2 L690.6 287.7 L690.9 281.2 L691.0 274.9 L690.8 268.5 L690.4 262.3 L689.8 256.1 L688.9 250.0 L687.9 244.0 L686.6 238.0 L685.1 232.2 L683.4 226.4 L681.4 220.7 L679.3 215.1 L677.0 209.6 L674.5 204.2 L671.9 198.9 L669.0 193.7 L666.0 188.6 L662.8 183.6 L659.4 178.8 L655.9 174.0 L652.3 169.3 L648.4 164.8 L644.5 160.3 L640.4 156.0 L636.1 151.7 L631.7 147.6 L627.2 143.6 L622.6 139.8 L617.9 136.0 L613.0 132.3 L608.1 128.8 L603.0 125.4 L597.8 122.1 L592.5 118.9 L587.2 115.8 L581.7 112.8 L576.2 110.0 L570.5 107.2 L564.8 104.6 Z" fill="none" stroke="#0c0c0c" stroke-width="1.25"/>
<path d="M542.7 121.9 L537.7 119.6 L532.5 117.4 L527.3 115.3 L522.0 113.3 L516.7 111.4 L511.3 109.7 L505.8 108.0 L500.3 106.4 L494.8 104.9 L489.2 103.6 L483.5 102.3 L477.8 101.1 L472.1 100.0 L466.3 99.1 L460.5 98.2 L454.7 97.4 L448.8 96.7 L442.9 96.2 L437.0 95.7 L431.1 95.3 L425.1 95.0 L419.1 94.8 L413.1 94.7 L407.1 94.8 L401.1 94.9 L395.1 95.1 L389.0 95.4 L383.0 95.7 L376.9 96.2 L370.9 96.8 L364.9 97.5 L358.8 98.3 L352.8 99.1 L346.8 100.1 L340.8 101.1 L334.8 102.3 L328.8 103.5 L322.8 104.8 L316.9 106.2 L311.0 107.7 L305.1 109.3 L299.2 111.0 L293.4 112.8 L287.6 114.6 L281.8 116.6 L276.0 118.6 L270.3 120.8 L264.6 123.0 L259.0 125.3 L253.4 127.7 L247.9 130.1 L242.4 132.7 L237.0 135.4 L231.6 138.1 L226.3 140.9 L221.0 143.8 L215.8 146.8 L210.6 149.8 L205.6 153.0 L200.5 156.2 L195.6 159.5 L190.7 162.9 L185.9 166.3 L181.2 169.9 L176.6 173.5 L172.1 177.2 L167.6 180.9 L163.2 184.8 L159.0 188.7 L154.8 192.7 L150.7 196.7 L146.7 200.9 L142.9 205.0 L139.1 209.3 L135.5 213.6 L131.9 218.0 L128.5 222.5 L125.2 227.0 L122.1 231.5 L119.0 236.2 L116.1 240.9 L113.3 245.6 L110.7 250.4 L108.2 255.2 L105.9 260.1 L103.6 265.1 L101.6 270.0 L99.7 275.1 L98.0 280.1 L96.4 285.2 L95.0 290.3 L93.7 295.5 L92.7 300.7 L91.8 305.9 L91.1 311.1 L90.5 316.4 L90.2 321.6 L90.0 326.9 L90.0 332.2 L90.2 337.5 L90.7 342.7 L91.3 348.0 L92.1 353.3 L93.1 358.5 L94.3 363.8 L95.8 369.0 L97.4 374.2 L99.3 379.4 L101.3 384.5 L103.6 389.6 L106.1 394.6 L108.8 399.6 L111.8 404.5 L114.9 409.4 L118.3 414.2 L121.9 419.0 L125.7 423.6 L129.7 428.2 L134.0 432.7 L138.5 437.1 L143.1 441.4 L148.0 445.6 L153.2 449.7 L158.5 453.7 L164.0 457.5 L169.7 461.2 L175.7 464.8 L181.8 468.3 L188.1 471.6 L194.6 474.8 L201.3 477.8 L208.2 480.7 L215.2 483.4 L222.4 486.0 L229.8 488.3 L237.3 490.5 L245.0 492.6 L252.8 494.4 L260.7 496.1 L268.8 497.6 L277.0 498.8 L285.3 499.9 L293.7 500.8 L302.1 501.5 L310.7 502.0 L319.3 502.3 L328.0 502.4 L336.8 502.3 L345.5 502.0 L354.4 501.5 L363.2 500.8 L372.0 499.8 L380.9 498.7 L389.7 497.4 L398.5 495.9 L407.3 494.1 L416.1 492.2 L424.8 490.1 L433.4 487.8 L442.0 485.3 L450.5 482.6 L458.9 479.8 L467.2 476.7 L475.4 473.5 L483.4 470.1 L491.4 466.6 L499.2 462.9 L506.9 459.0 L514.4 455.0 L521.8 450.9 L528.9 446.6 L536.0 442.2 L542.8 437.6 L549.5 433.0 L556.0 428.2 L562.2 423.3 L568.3 418.3 L574.2 413.2 L579.8 408.1 L585.3 402.8 L590.5 397.5 L595.5 392.1 L600.3 386.6 L604.9 381.1 L609.2 375.5 L613.4 369.9 L617.2 364.2 L620.9 358.5 L624.3 352.8 L627.5 347.1 L630.5 341.3 L633.2 335.6 L635.7 329.8 L637.9 324.1 L640.0 318.3 L641.8 312.6 L643.4 306.8 L644.8 301.1 L645.9 295.4 L646.8 289.8 L647.5 284.2 L648.0 278.6 L648.3 273.1 L648.4 267.6 L648.3 262.1 L647.9 256.7 L647.4 251.4 L646.7 246.1 L645.7 240.9 L644.6 235.8 L643.3 230.7 L641.9 225.7 L640.2 220.8 L638.4 216.0 L636.4 211.2 L634.2 206.5 L631.9 201.9 L629.4 197.4 L626.8 193.0 L624.0 188.6 L621.1 184.4 L618.0 180.2 L614.8 176.1 L611.5 172.2 L608.0 168.3 L604.4 164.5 L600.7 160.8 L596.8 157.2 L592.9 153.7 L588.8 150.3 L584.6 147.0 L580.3 143.8 L576.0 140.7 L571.5 137.7 L566.9 134.8 L562.2 132.0 L557.5 129.3 L552.6 126.7 L547.7 124.3 L542.7 121.9 Z" fill="none" stroke="#0c0c0c" stroke-width="1.25"/>
<path d="M520.0 139.6 L515.6 137.5 L511.2 135.6 L506.7 133.7 L502.1 131.9 L497.5 130.2 L492.9 128.6 L488.1 127.1 L483.4 125.7 L478.5 124.3 L473.7 123.1 L468.7 121.9 L463.8 120.9 L458.8 119.9 L453.8 119.0 L448.7 118.2 L443.6 117.5 L438.5 116.8 L433.3 116.3 L428.1 115.9 L422.9 115.5 L417.7 115.2 L412.4 115.0 L407.2 114.9 L401.9 114.9 L396.6 115.0 L391.3 115.1 L386.0 115.4 L380.7 115.7 L375.4 116.1 L370.1 116.6 L364.8 117.2 L359.5 117.9 L354.2 118.6 L348.9 119.5 L343.6 120.4 L338.3 121.4 L333.1 122.5 L327.8 123.7 L322.6 124.9 L317.4 126.2 L312.2 127.7 L307.1 129.1 L301.9 130.7 L296.8 132.4 L291.8 134.1 L286.7 135.9 L281.7 137.8 L276.7 139.8 L271.8 141.8 L266.9 143.9 L262.1 146.1 L257.3 148.4 L252.6 150.8 L247.9 153.2 L243.2 155.7 L238.6 158.2 L234.1 160.9 L229.6 163.6 L225.2 166.4 L220.9 169.2 L216.6 172.1 L212.4 175.1 L208.3 178.2 L204.2 181.3 L200.2 184.5 L196.3 187.8 L192.5 191.1 L188.7 194.5 L185.1 197.9 L181.5 201.4 L178.1 205.0 L174.7 208.6 L171.4 212.3 L168.2 216.0 L165.1 219.8 L162.2 223.6 L159.3 227.5 L156.6 231.5 L153.9 235.4 L151.4 239.5 L149.0 243.5 L146.7 247.7 L144.6 251.8 L142.5 256.0 L140.6 260.3 L138.9 264.5 L137.3 268.8 L135.8 273.2 L134.4 277.5 L133.2 281.9 L132.1 286.3 L131.2 290.7 L130.5 295.2 L129.9 299.6 L129.4 304.1 L129.1 308.6 L129.0 313.1 L129.0 317.5 L129.2 322.0 L129.5 326.5 L130.1 331.0 L130.8 335.4 L131.6 339.9 L132.7 344.3 L133.9 348.7 L135.3 353.1 L136.9 357.5 L138.6 361.8 L140.5 366.1 L142.6 370.3 L144.9 374.5 L147.4 378.7 L150.0 382.8 L152.9 386.8 L155.9 390.8 L159.1 394.7 L162.5 398.6 L166.0 402.4 L169.7 406.0 L173.6 409.7 L177.7 413.2 L182.0 416.6 L186.4 420.0 L191.0 423.2 L195.8 426.4 L200.7 429.4 L205.8 432.3 L211.0 435.1 L216.4 437.8 L221.9 440.4 L227.6 442.8 L233.5 445.1 L239.4 447.3 L245.5 449.3 L251.7 451.2 L258.1 453.0 L264.5 454.6 L271.1 456.0 L277.8 457.3 L284.6 458.5 L291.4 459.5 L298.3 460.3 L305.4 461.0 L312.4 461.6 L319.6 461.9 L326.8 462.1 L334.0 462.2 L341.3 462.0 L348.7 461.7 L356.0 461.3 L363.4 460.7 L370.7 459.9 L378.1 458.9 L385.4 457.8 L392.8 456.5 L400.1 455.1 L407.4 453.5 L414.6 451.8 L421.8 449.9 L429.0 447.8 L436.1 445.6 L443.1 443.3 L450.0 440.8 L456.9 438.1 L463.6 435.4 L470.3 432.5 L476.8 429.4 L483.2 426.3 L489.6 423.0 L495.8 419.6 L501.8 416.1 L507.8 412.4 L513.5 408.7 L519.2 404.9 L524.7 400.9 L530.0 396.9 L535.2 392.8 L540.2 388.6 L545.1 384.3 L549.7 380.0 L554.2 375.6 L558.6 371.1 L562.7 366.6 L566.7 362.0 L570.5 357.4 L574.1 352.7 L577.5 348.0 L580.7 343.3 L583.7 338.5 L586.6 333.7 L589.2 328.9 L591.7 324.1 L594.0 319.3 L596.1 314.4 L598.0 309.6 L599.7 304.7 L601.2 299.9 L602.5 295.1 L603.7 290.3 L604.6 285.5 L605.4 280.7 L606.0 276.0 L606.4 271.3 L606.7 266.6 L606.7 262.0 L606.6 257.4 L606.4 252.8 L605.9 248.3 L605.3 243.8 L604.5 239.4 L603.6 235.1 L602.5 230.8 L601.2 226.5 L599.8 222.3 L598.3 218.2 L596.6 214.1 L594.8 210.1 L592.8 206.2 L590.7 202.3 L588.4 198.6 L586.0 194.8 L583.5 191.2 L580.9 187.6 L578.1 184.2 L575.3 180.7 L572.3 177.4 L569.2 174.2 L565.9 171.0 L562.6 167.9 L559.2 164.9 L555.7 162.0 L552.1 159.2 L548.4 156.4 L544.5 153.7 L540.7 151.2 L536.7 148.7 L532.6 146.3 L528.5 144.0 L524.3 141.7 L520.0 139.6 Z" fill="none" stroke="#0c0c0c" stroke-width="1.25"/>
<path d="M422.0 216.0 L420.4 215.2 L418.9 214.4 L417.3 213.6 L415.7 212.8 L414.1 212.1 L412.4 211.4 L410.7 210.8 L409.0 210.2 L407.2 209.6 L405.5 209.0 L403.7 208.5 L401.8 208.1 L400.0 207.6 L398.1 207.2 L396.3 206.9 L394.4 206.5 L392.4 206.2 L390.5 206.0 L388.5 205.7 L386.6 205.6 L384.6 205.4 L382.6 205.3 L380.6 205.2 L378.6 205.2 L376.6 205.2 L374.6 205.2 L372.6 205.3 L370.5 205.4 L368.5 205.5 L366.5 205.7 L364.4 205.9 L362.4 206.1 L360.3 206.4 L358.3 206.7 L356.3 207.1 L354.3 207.5 L352.2 207.9 L350.2 208.4 L348.2 208.8 L346.2 209.4 L344.3 209.9 L342.3 210.5 L340.3 211.1 L338.4 211.8 L336.5 212.5 L334.6 213.2 L332.7 214.0 L330.8 214.8 L328.9 215.6 L327.1 216.4 L325.3 217.3 L323.5 218.2 L321.8 219.1 L320.0 220.1 L318.3 221.1 L316.6 222.1 L315.0 223.2 L313.4 224.3 L311.8 225.4 L310.2 226.5 L308.7 227.6 L307.2 228.8 L305.7 230.0 L304.3 231.2 L302.9 232.5 L301.6 233.7 L300.2 235.0 L299.0 236.3 L297.7 237.6 L296.5 239.0 L295.4 240.3 L294.3 241.7 L293.2 243.1 L292.2 244.5 L291.2 245.9 L290.3 247.4 L289.4 248.8 L288.6 250.3 L287.8 251.8 L287.1 253.2 L286.4 254.7 L285.8 256.2 L285.2 257.7 L284.7 259.3 L284.2 260.8 L283.8 262.3 L283.4 263.8 L283.1 265.4 L282.8 266.9 L282.6 268.4 L282.4 270.0 L282.3 271.5 L282.3 273.0 L282.3 274.5 L282.4 276.1 L282.5 277.6 L282.7 279.1 L282.9 280.6 L283.2 282.1 L283.6 283.6 L284.0 285.0 L284.4 286.5 L285.0 287.9 L285.5 289.4 L286.2 290.8 L286.9 292.2 L287.6 293.5 L288.4 294.9 L289.3 296.2 L290.2 297.6 L291.2 298.9 L292.2 300.1 L293.3 301.4 L294.4 302.6 L295.6 303.8 L296.8 305.0 L298.1 306.1 L299.4 307.3 L300.8 308.3 L302.2 309.4 L303.7 310.4 L305.2 311.4 L306.8 312.4 L308.4 313.3 L310.1 314.2 L311.8 315.0 L313.5 315.8 L315.3 316.6 L317.1 317.4 L319.0 318.1 L320.9 318.7 L322.8 319.3 L324.8 319.9 L326.8 320.5 L328.8 321.0 L330.8 321.4 L332.9 321.8 L335.0 322.2 L337.1 322.5 L339.3 322.8 L341.5 323.0 L343.7 323.2 L345.9 323.4 L348.1 323.5 L350.3 323.5 L352.6 323.5 L354.8 323.5 L357.1 323.4 L359.4 323.3 L361.6 323.1 L363.9 322.9 L366.2 322.6 L368.5 322.3 L370.8 322.0 L373.0 321.6 L375.3 321.1 L377.6 320.7 L379.8 320.1 L382.0 319.6 L384.3 319.0 L386.5 318.3 L388.7 317.6 L390.8 316.9 L393.0 316.1 L395.1 315.3 L397.2 314.4 L399.3 313.5 L401.3 312.6 L403.4 311.7 L405.3 310.7 L407.3 309.6 L409.2 308.6 L411.1 307.5 L413.0 306.3 L414.8 305.2 L416.6 304.0 L418.3 302.8 L420.0 301.5 L421.6 300.2 L423.2 298.9 L424.8 297.6 L426.3 296.3 L427.8 294.9 L429.2 293.5 L430.6 292.1 L431.9 290.6 L433.1 289.2 L434.4 287.7 L435.5 286.2 L436.6 284.7 L437.7 283.2 L438.7 281.7 L439.6 280.2 L440.5 278.6 L441.3 277.1 L442.1 275.5 L442.8 274.0 L443.5 272.4 L444.1 270.8 L444.6 269.3 L445.1 267.7 L445.6 266.1 L445.9 264.5 L446.3 263.0 L446.5 261.4 L446.7 259.8 L446.8 258.3 L446.9 256.7 L447.0 255.2 L446.9 253.6 L446.8 252.1 L446.7 250.6 L446.5 249.1 L446.2 247.6 L445.9 246.1 L445.6 244.6 L445.1 243.2 L444.7 241.8 L444.1 240.3 L443.5 239.0 L442.9 237.6 L442.2 236.2 L441.5 234.9 L440.7 233.6 L439.9 232.3 L439.0 231.0 L438.0 229.8 L437.1 228.5 L436.0 227.3 L435.0 226.2 L433.9 225.0 L432.7 223.9 L431.5 222.8 L430.2 221.8 L429.0 220.7 L427.6 219.7 L426.3 218.8 L424.9 217.8 L423.4 216.9 L422.0 216.0 Z" fill="none" stroke="#0c0c0c" stroke-width="1.25"/>
<line x1="364.2" y1="261.1" x2="438.9" y2="75.9" stroke="#0c0c0c" stroke-width="1.2"/>
<line x1="364.2" y1="261.1" x2="50.6" y2="348.5" stroke="#0c0c0c" stroke-width="1.2"/>
<line x1="364.2" y1="261.1" x2="622.7" y2="426.8" stroke="#0c0c0c" stroke-width="1.2"/>
<circle cx="438.9" cy="75.9" r="2" fill="#0c0c0c"/>
<circle cx="50.6" cy="348.5" r="2" fill="#0c0c0c"/>
<circle cx="364.2" cy="261.1" r="2.3" fill="#0c0c0c"/>
</g></svg>
<div class="a" style="left:0;top:69px;width:839px;height:1px;background:#e4e4e4"></div>
<!-- browser -->
<div class="a" style="left:2px;top:72.2px;width:150px;height:12.6px;background:#f2f2f2;border:1px solid #d6d6d6"></div>
<svg width="160" height="110" style="left:0;top:68px">
<path d="M5.2 10.2l2.2-1.8v3.6zM7.6 10.2l2.2-1.8v3.6z" fill="#444"/>
<circle cx="143.3" cy="10.2" r="2.3" fill="#222"/><path d="M142 10.2h2.6" stroke="#f2f2f2" stroke-width="0.6"/>
<path d="M149.8 7.5v5.5" stroke="#aaa" stroke-width="0.7"/>
<!-- row1 -->
<rect x="19.7" y="19.7" width="87.6" height="8.5" fill="#e6e6e6"/>
<path d="M10.5 28h5.2v-6.5z" fill="#333"/><path d="M12 27.3h3v-3.5" fill="none" stroke="#e6e6e6" stroke-width="0.6"/>
<ellipse cx="25.5" cy="24" rx="3.6" ry="2.2" fill="none" stroke="#999" stroke-width="0.9"/><circle cx="25.5" cy="24" r="1.2" fill="#999"/>
<rect x="32.5" y="20.3" width="62.5" height="7.5" fill="#8a8a8a"/>
<rect x="34.5" y="21" width="6" height="6.3" fill="#eee" stroke="#666" stroke-width="0.4"/>
<circle cx="100.6" cy="24" r="2.7" fill="#fff" stroke="#333" stroke-width="0.7"/><circle cx="100.6" cy="24" r="1.2" fill="#222"/>
<!-- rows 2-7 -->
<g fill="#e8e8e8"><rect x="29.5" y="31" width="66" height="10"/><rect x="29.5" y="43" width="54" height="10"/><rect x="29.5" y="55" width="46.5" height="10"/><rect x="29.5" y="67" width="50.5" height="10"/><rect x="29.5" y="79" width="58.5" height="10"/><rect x="29.5" y="91" width="56.3" height="10"/></g>
<g fill="none" stroke="#333" stroke-width="0.8"><path d="M20.2 33.3l4.3 2.7-4.3 2.7z"/><path d="M20.2 45.3l4.3 2.7-4.3 2.7z"/><path d="M20.2 57.3l4.3 2.7-4.3 2.7z"/><path d="M20.2 69.3l4.3 2.7-4.3 2.7z"/><path d="M20.2 81.3l4.3 2.7-4.3 2.7z"/><path d="M20.2 93.3l4.3 2.7-4.3 2.7z"/></g>
<circle cx="34.4" cy="36" r="2.6" fill="none" stroke="#777" stroke-width="1.6" stroke-dasharray="1 0.8"/><circle cx="34.4" cy="36" r="1.8" fill="#777"/><circle cx="34.4" cy="36" r="0.8" fill="#e8e8e8"/>
<path d="M30.4 45h3l0.8 0.8h4.1v6H30.4z" fill="#8a8a8a"/>
<g fill="#8a8a8a"><path d="M42.8 57h3l0.8 0.8h4.4v6h-8.2z"/><path d="M42.8 69h3l0.8 0.8h4.4v6h-8.2z"/><path d="M42.8 81h3l0.8 0.8h4.4v6h-8.2z"/><path d="M42.8 93h3l0.8 0.8h4.4v6h-8.2z"/></g>
<ellipse cx="34.8" cy="60" rx="3.6" ry="2.2" fill="none" stroke="#d4d4d4" stroke-width="0.9"/>
<g fill="none" stroke="#999" stroke-width="0.9"><ellipse cx="34.8" cy="72" rx="3.6" ry="2.2"/><ellipse cx="34.8" cy="84" rx="3.6" ry="2.2"/><ellipse cx="34.8" cy="96" rx="3.6" ry="2.2"/></g>
<g fill="#999"><circle cx="34.8" cy="72" r="1.1"/><circle cx="34.8" cy="84" r="1.1"/><circle cx="34.8" cy="96" r="1.1"/></g>
</svg>
<div class="a" style="left:14.7px;top:75.3px;font-size:5.3px;color:#666">BROWSER</div>
<div class="a" style="left:48.8px;top:88.8px;font-size:5.3px;color:#fff;font-weight:bold">Router Base v4</div>
<div class="a" style="left:45.9px;top:100.8px;font-size:5.2px;color:#1a1a1a">Document Settings</div>
<div class="a" style="left:45.9px;top:112.8px;font-size:5.2px;color:#1a1a1a">Named Views</div>
<div class="a" style="left:57.5px;top:124.8px;font-size:5.2px;color:#1a1a1a">Origin</div>
<div class="a" style="left:57.5px;top:136.8px;font-size:5.2px;color:#1a1a1a">Bodies</div>
<div class="a" style="left:57.5px;top:148.8px;font-size:5.2px;color:#1a1a1a">Canvases</div>
<div class="a" style="left:57.5px;top:160.8px;font-size:5.2px;color:#1a1a1a">Sketches</div>
<!-- comments -->
<div class="a" style="left:2px;top:467px;width:150px;height:13px;background:#f2f2f2;border:1px solid #d6d6d6"></div>
<div class="a" style="left:15px;top:470.3px;font-size:5.1px;color:#666">COMMENTS</div>
<svg width="12" height="12" style="left:137px;top:467.5px"><circle cx="6.3" cy="6" r="2.3" fill="#222"/><path d="M5 6h2.6M6.3 4.7v2.6" stroke="#f2f2f2" stroke-width="0.6"/><path d="M11.5 3.5v5" stroke="#aaa" stroke-width="0.7"/></svg>
<!-- nav bar -->
<div class="a" style="left:356.3px;top:467.8px;width:123px;height:14.2px;background:rgba(250,250,250,0.92)"></div>
<svg width="130" height="16" style="left:354px;top:466px">
<g fill="none" stroke="#444" stroke-width="0.8">
<ellipse cx="8.5" cy="8.5" rx="4.5" ry="1.5"/><path d="M8.5 3v11M6.5 5l2-2 2 2"/>
<rect x="20.5" y="6" width="8" height="6" /><path d="M22 6v-2M27 6v-2M20.5 8.5h8"/>
<path d="M34 12.5v-4.5l1-1 1 1v-3l1-1 1 1v3v-3.5l1-0.8 1 0.8v3.5-2.5l1-0.7 1 0.7v5l-2 2h-4z"/>
<circle cx="49.5" cy="7.5" r="3"/><path d="M51.7 9.7l2.5 2.5M53.5 4.5v-2.5M52.3 3.3h2.5"/>
<circle cx="63" cy="7.5" r="3.4" stroke-dasharray="1.2 0.8"/><path d="M65.5 10l2.5 2.5M67.5 4v6"/>
</g>
<g fill="#444"><path d="M15 8h2.4l-1.2 1.4z"/><path d="M71 8h2.4l-1.2 1.4z"/><path d="M89 8h2.4l-1.2 1.4z"/><path d="M105 8h2.4l-1.2 1.4z"/><path d="M120 8h2.4l-1.2 1.4z"/></g>
<rect x="80.5" y="4" width="7.5" height="6.5" fill="#5a82c4" stroke="#333" stroke-width="0.6"/><path d="M82.5 10.5v2h3.5v-2" fill="none" stroke="#333" stroke-width="0.6"/>
<rect x="95" y="4" width="8" height="8" fill="#888"/><path d="M95 6.7h8M95 9.3h8M97.7 4v8M100.3 4v8" stroke="#ddd" stroke-width="0.6"/>
<rect x="111" y="4.5" width="7.5" height="7" fill="#5a82c4"/><path d="M111 8h7.5M114.75 4.5v7" stroke="#eee" stroke-width="0.8"/>
</svg>
<!-- viewcube -->
<svg width="50" height="50" style="left:785px;top:74px">
<path d="M25.3 9.8L4.6 20.7 9.5 38.4 24.3 47.7 39 38.4 39.7 16.7z" fill="#e2e2e2" stroke="#c4c4c4" stroke-width="0.5"/>
<path d="M4.6 20.7L23.3 33.5 39.7 16.7M23.3 33.5L24.3 47.7" fill="none" stroke="#bbb" stroke-width="0.5"/>
<path d="M4.6 20.7L25.7 4.9" stroke="#e04040" stroke-width="0.8"/><path d="M24.5 2.5l3 3M27.5 2.5l-3 3" stroke="#e04040" stroke-width="0.6"/>
<path d="M4.6 20.7L23.3 33.5" stroke="#40b040" stroke-width="0.8"/>
<path d="M4.6 20.7L9.5 41.4" stroke="#4050e0" stroke-width="0.8"/><path d="M8 43h2.5l-2.5 2.5h2.5" fill="none" stroke="#4050e0" stroke-width="0.6"/>
<text x="0" y="1.6" font-size="5" fill="#777" font-family="Liberation Sans" text-anchor="middle" transform="translate(22.4,18.7) rotate(137)">BOTTOM</text>
</svg>
<!-- timeline bar -->
<div class="a" style="left:0;top:481.5px;width:839px;height:1px;background:#c8c8c8"></div>
<svg width="839" height="25" style="left:0;top:482px">
<g fill="#3c3c3c"><rect x="5" y="9" width="1.4" height="7"/><path d="M12 9v7l-5.4-3.5z"/><path d="M22.2 9v7l-4.6-3.5z"/><rect x="22.6" y="10.5" width="1.3" height="4"/><path d="M30 8.7v8.1l6-4.05z"/><rect x="42.4" y="10.5" width="1.3" height="4"/><path d="M44 9v7l4.8-3.5z"/><path d="M55.3 9v7l4.9-3.5z"/><rect x="60.3" y="9" width="1.5" height="7"/></g>
<path d="M77 20.5h85" stroke="#c4c4c4" stroke-width="1"/>
<g stroke="#c4c4c4" stroke-width="0.8"><path d="M89 19v1.5M101 19v1.5M113 19v1.5M125 19v1.5M137 19v1.5M149 19v1.5"/></g>
<g transform="translate(73,8.3)"><path d="M0.5 0.5h6.5v6M0.5 0.5v7h4" fill="none" stroke="#555" stroke-width="0.7" stroke-dasharray="1.2 0.7"/><path d="M4.5 7.5l3-2.5" stroke="#f0a020" stroke-width="1"/><circle cx="0.5" cy="7.5" r="0.6" fill="#3a7fd0"/><circle cx="7" cy="0.5" r="0.6" fill="#3a7fd0"/></g>
<g transform="translate(85,9)"><rect x="0" y="0" width="8" height="7" fill="#2a82d2"/><path d="M0.5 6.5l2.5-3 2 1.5 2.5-2v3.5z" fill="#1a5ea8"/></g>
<g transform="translate(97,8.5)"><path d="M0 2l1.5-1.5h5.5v6l-1.5 1.5H0z" fill="#3c8fd6" stroke="#666" stroke-width="0.4"/><rect x="7.3" y="1" width="0.9" height="6" fill="#333"/></g>
<g transform="translate(133.2,8.5)"><path d="M0 2l1.5-1.5h5.5v6l-1.5 1.5H0z" fill="#3c8fd6" stroke="#666" stroke-width="0.4"/><rect x="7.3" y="1" width="0.9" height="6" fill="#333"/></g>
<g transform="translate(108.8,8.5)" fill="#e4e4e4" stroke="#777" stroke-width="0.6"><path d="M0.5 2.5l2-2h2.5a3.5 3.5 0 0 1 3.3 3.3v4.2H0.5z"/></g>
<path d="M113.3 8.9a3.5 3.5 0 0 1 3.3 3.3l-1.5 0.8a2.5 2.5 0 0 0-2.5-2.5z" fill="#3c8fd6"/>
<g transform="translate(121.3,8.5)"><path d="M0.5 4l3.5-3.5h1.5l2.5 2.5v5H0.5z" fill="#e4e4e4" stroke="#777" stroke-width="0.6"/><path d="M1.5 4l3-3 2 2-3 2.5z" fill="#3c8fd6"/></g>
<g transform="translate(145,8.5)"><path d="M0.5 4l3.5-3.5h1.5l2.5 2.5v5H0.5z" fill="#e4e4e4" stroke="#777" stroke-width="0.6"/><path d="M1.5 4l3-3 2 2-3 2.5z" fill="#3c8fd6"/></g>
<g fill="#3c8fd6"><circle cx="160.7" cy="9.5" r="0.8"/><circle cx="163" cy="11.5" r="0.8"/><circle cx="163" cy="14.5" r="0.8"/><circle cx="160.7" cy="16.3" r="0.8"/><circle cx="158.3" cy="14.5" r="0.8"/><circle cx="158.3" cy="11.5" r="0.8"/></g>
<path d="M164 5h6v2.5l-2 1.2h-2l-2-1.2z" fill="#444"/><rect x="166.3" y="8" width="1.5" height="13.4" fill="#444"/>
<circle cx="829" cy="12" r="3.4" fill="none" stroke="#888" stroke-width="1.3" stroke-dasharray="1.2 0.9"/><circle cx="829" cy="12" r="2.6" fill="#888"/><circle cx="829" cy="12" r="1" fill="#f0f0f0"/>
</svg>

</body></html>
